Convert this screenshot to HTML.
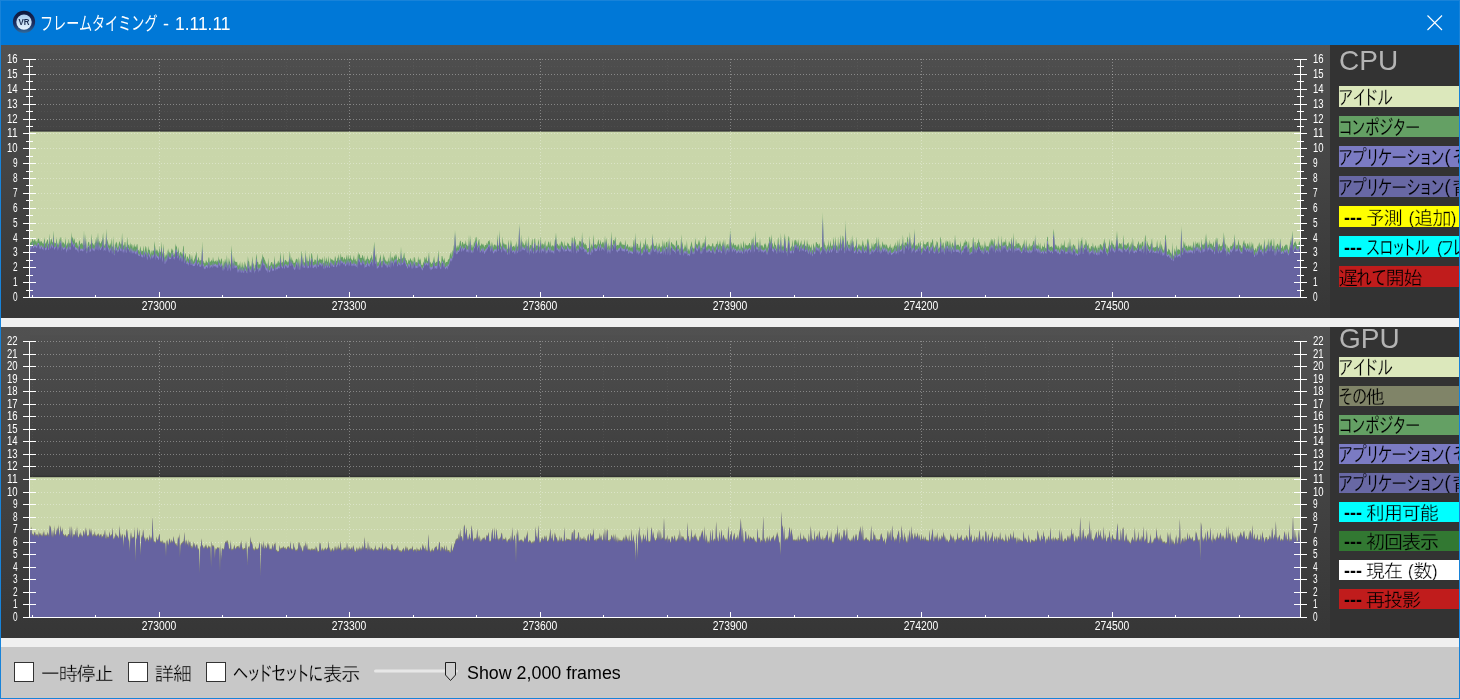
<!DOCTYPE html>
<html lang="ja"><head><meta charset="utf-8"><title>フレームタイミング - 1.11.11</title>
<style>
html,body{margin:0;padding:0}
body{width:1460px;height:699px;position:relative;overflow:hidden;background:#1883d9;font-family:"Liberation Sans",sans-serif}
.abs,.chart,.li,.panel,.leg,.div,.cb{position:absolute}
#titlebar{left:0;top:0;width:1460px;height:45px;background:#0078d7;border:1px solid #1883d9;border-bottom:0;box-sizing:border-box}
.panel{left:1px;width:1329px;background:linear-gradient(#515151,#363636)}
.leg{left:1330px;width:129px;background:#333}
.div{left:1px;width:1458px;height:9px;background:#f0f0f0}
.li{left:1339px;width:120px;overflow:hidden}
.li svg{display:block;opacity:.999}
.gs{opacity:.999}
.big{opacity:.999;position:absolute;left:1339px;font-size:28px;line-height:30px;color:#b4b4b4;font-family:"Liberation Sans",sans-serif;white-space:nowrap}
#bottom{left:1px;top:647px;width:1458px;height:51px;background:#c8c8c8}
.cb{top:662px;width:18px;height:18px;border:1px solid #333;background:#fff}
svg text{white-space:pre}
</style></head><body>
<div id="titlebar" class="abs">
<svg class="abs gs" style="left:-1px;top:-1px" width="260" height="45" viewBox="0 0 260 45">
<defs><linearGradient id="ig" x1="0" y1="0" x2="0" y2="1"><stop offset="0" stop-color="#0e1638"/><stop offset="0.6" stop-color="#1b2f63"/><stop offset="1" stop-color="#2f6a9c"/></linearGradient>
<linearGradient id="ig2" x1="0" y1="0" x2="0" y2="1"><stop offset="0" stop-color="#a9cdee"/><stop offset="1" stop-color="#e6f3fd"/></linearGradient></defs>
<circle cx="24" cy="21.8" r="11.1" fill="url(#ig)"/><circle cx="24" cy="22.1" r="7.7" fill="url(#ig2)"/>
<text x="24" y="25.1" font-size="8.4" font-family='"Liberation Sans",sans-serif' fill="#1b2d50" text-anchor="middle" textLength="11" lengthAdjust="spacingAndGlyphs" font-weight="bold">VR</text>
<text x="40" y="29.8" font-size="18.5" font-family='"Liberation Sans","Noto Sans CJK JP",sans-serif' fill="#fff" textLength="117.5" lengthAdjust="spacingAndGlyphs" >フレームタイミング</text>
<text x="163" y="29.8" font-size="18" font-family='"Liberation Sans","Noto Sans CJK JP",sans-serif' fill="#fff" >-</text>
<text x="175" y="29.8" font-size="18.5" font-family='"Liberation Sans","Noto Sans CJK JP",sans-serif' fill="#fff" textLength="55.5" lengthAdjust="spacingAndGlyphs" >1.11.11</text>
</svg>
<svg class="abs" style="left:1423px;top:11px" width="22" height="22" viewBox="1424 12 22 22"><path d="M1427.5 15.5 L1442 30 M1442 15.5 L1427.5 30" stroke="#fff" stroke-width="1.1" fill="none"/></svg>
</div>

<div class="panel" style="top:45px;height:273px"></div>
<div class="leg" style="top:45px;height:273px"></div>
<svg class="chart" style="left:1px;top:45px" width="1329" height="273" viewBox="1 45 1329 273">
<defs><linearGradient id="pg45" x1="0" y1="0" x2="0" y2="1"><stop offset="0" stop-color="#4f4f4f"/><stop offset="1" stop-color="#2b2b2b"/></linearGradient></defs>
<rect x="30" y="53.0" width="1270" height="244.0" fill="url(#pg45)"/>
<rect x="30" y="131.6" width="1270" height="165.9" fill="#c9d6aa"/>
<rect x="30" y="130.1" width="1270" height="1.5" fill="#000" opacity="0.18"/>
<g stroke-width="1" stroke-dasharray="1 2" shape-rendering="crispEdges"><line x1="38" x2="1293" y1="282.5" y2="282.5" stroke="rgba(255,255,255,0.34)"/><line x1="38" x2="1293" y1="290.5" y2="290.5" stroke="rgba(255,255,255,0.055)"/><line x1="38" x2="1293" y1="267.5" y2="267.5" stroke="rgba(255,255,255,0.34)"/><line x1="38" x2="1293" y1="275.5" y2="275.5" stroke="rgba(255,255,255,0.055)"/><line x1="38" x2="1293" y1="252.5" y2="252.5" stroke="rgba(255,255,255,0.34)"/><line x1="38" x2="1293" y1="260.5" y2="260.5" stroke="rgba(255,255,255,0.055)"/><line x1="38" x2="1293" y1="238.5" y2="238.5" stroke="rgba(255,255,255,0.34)"/><line x1="38" x2="1293" y1="245.5" y2="245.5" stroke="rgba(255,255,255,0.055)"/><line x1="38" x2="1293" y1="223.5" y2="223.5" stroke="rgba(255,255,255,0.34)"/><line x1="38" x2="1293" y1="230.5" y2="230.5" stroke="rgba(255,255,255,0.055)"/><line x1="38" x2="1293" y1="208.5" y2="208.5" stroke="rgba(255,255,255,0.34)"/><line x1="38" x2="1293" y1="215.5" y2="215.5" stroke="rgba(255,255,255,0.055)"/><line x1="38" x2="1293" y1="193.5" y2="193.5" stroke="rgba(255,255,255,0.34)"/><line x1="38" x2="1293" y1="200.5" y2="200.5" stroke="rgba(255,255,255,0.055)"/><line x1="38" x2="1293" y1="178.5" y2="178.5" stroke="rgba(255,255,255,0.34)"/><line x1="38" x2="1293" y1="185.5" y2="185.5" stroke="rgba(255,255,255,0.055)"/><line x1="38" x2="1293" y1="163.5" y2="163.5" stroke="rgba(255,255,255,0.34)"/><line x1="38" x2="1293" y1="171.5" y2="171.5" stroke="rgba(255,255,255,0.055)"/><line x1="38" x2="1293" y1="148.5" y2="148.5" stroke="rgba(255,255,255,0.34)"/><line x1="38" x2="1293" y1="156.5" y2="156.5" stroke="rgba(255,255,255,0.055)"/><line x1="38" x2="1293" y1="133.5" y2="133.5" stroke="rgba(255,255,255,0.34)"/><line x1="38" x2="1293" y1="141.5" y2="141.5" stroke="rgba(255,255,255,0.055)"/><line x1="38" x2="1293" y1="119.5" y2="119.5" stroke="rgba(255,255,255,0.34)"/><line x1="38" x2="1293" y1="126.5" y2="126.5" stroke="rgba(255,255,255,0.055)"/><line x1="38" x2="1293" y1="104.5" y2="104.5" stroke="rgba(255,255,255,0.34)"/><line x1="38" x2="1293" y1="111.5" y2="111.5" stroke="rgba(255,255,255,0.055)"/><line x1="38" x2="1293" y1="89.5" y2="89.5" stroke="rgba(255,255,255,0.34)"/><line x1="38" x2="1293" y1="96.5" y2="96.5" stroke="rgba(255,255,255,0.055)"/><line x1="38" x2="1293" y1="74.5" y2="74.5" stroke="rgba(255,255,255,0.34)"/><line x1="38" x2="1293" y1="81.5" y2="81.5" stroke="rgba(255,255,255,0.055)"/><line x1="38" x2="1293" y1="59.5" y2="59.5" stroke="rgba(255,255,255,0.34)"/><line x1="38" x2="1293" y1="66.5" y2="66.5" stroke="rgba(255,255,255,0.055)"/><line y1="59.0" y2="297.0" x1="32.5" x2="32.5" stroke="rgba(255,255,255,0.055)"/><line y1="59.0" y2="297.0" x1="95.5" x2="95.5" stroke="rgba(255,255,255,0.055)"/><line y1="59.0" y2="297.0" x1="159.5" x2="159.5" stroke="rgba(255,255,255,0.34)"/><line y1="59.0" y2="297.0" x1="222.5" x2="222.5" stroke="rgba(255,255,255,0.055)"/><line y1="59.0" y2="297.0" x1="286.5" x2="286.5" stroke="rgba(255,255,255,0.055)"/><line y1="59.0" y2="297.0" x1="349.5" x2="349.5" stroke="rgba(255,255,255,0.34)"/><line y1="59.0" y2="297.0" x1="413.5" x2="413.5" stroke="rgba(255,255,255,0.055)"/><line y1="59.0" y2="297.0" x1="476.5" x2="476.5" stroke="rgba(255,255,255,0.055)"/><line y1="59.0" y2="297.0" x1="540.5" x2="540.5" stroke="rgba(255,255,255,0.34)"/><line y1="59.0" y2="297.0" x1="603.5" x2="603.5" stroke="rgba(255,255,255,0.055)"/><line y1="59.0" y2="297.0" x1="667.5" x2="667.5" stroke="rgba(255,255,255,0.055)"/><line y1="59.0" y2="297.0" x1="730.5" x2="730.5" stroke="rgba(255,255,255,0.34)"/><line y1="59.0" y2="297.0" x1="794.5" x2="794.5" stroke="rgba(255,255,255,0.055)"/><line y1="59.0" y2="297.0" x1="857.5" x2="857.5" stroke="rgba(255,255,255,0.055)"/><line y1="59.0" y2="297.0" x1="921.5" x2="921.5" stroke="rgba(255,255,255,0.34)"/><line y1="59.0" y2="297.0" x1="985.5" x2="985.5" stroke="rgba(255,255,255,0.055)"/><line y1="59.0" y2="297.0" x1="1048.5" x2="1048.5" stroke="rgba(255,255,255,0.055)"/><line y1="59.0" y2="297.0" x1="1112.5" x2="1112.5" stroke="rgba(255,255,255,0.34)"/><line y1="59.0" y2="297.0" x1="1175.5" x2="1175.5" stroke="rgba(255,255,255,0.055)"/><line y1="59.0" y2="297.0" x1="1239.5" x2="1239.5" stroke="rgba(255,255,255,0.055)"/></g>
<polygon fill="#64a064" points="30,297.5 30.0,241.6 30.6,243.3 31.3,241.7 31.9,241.4 32.5,237.2 33.2,240.6 33.8,241.5 34.4,239.6 35.1,239.8 35.7,241.8 36.4,240.8 37.0,243.4 37.6,240.0 38.3,238.6 38.9,238.5 39.5,241.3 40.2,242.6 40.8,240.7 41.4,240.9 42.1,242.5 42.7,243.2 43.3,244.0 44.0,241.1 44.6,237.1 45.2,243.6 45.9,243.5 46.5,241.7 47.2,240.0 47.8,239.3 48.4,243.4 49.1,244.6 49.7,233.2 50.3,243.4 51.0,239.4 51.6,238.6 52.2,242.1 52.9,242.6 53.5,230.4 54.1,241.4 54.8,243.5 55.4,243.3 56.0,242.7 56.7,236.7 57.3,245.0 58.0,242.5 58.6,245.4 59.2,237.3 59.9,242.7 60.5,237.8 61.1,236.7 61.8,245.3 62.4,240.9 63.0,243.6 63.7,242.1 64.3,243.7 64.9,244.7 65.6,236.7 66.2,246.3 66.8,244.4 67.5,242.3 68.1,245.4 68.8,238.0 69.4,244.0 70.0,242.4 70.7,243.8 71.3,232.1 71.9,239.5 72.6,236.4 73.2,238.7 73.8,241.3 74.5,237.4 75.1,243.5 75.7,242.5 76.4,242.3 77.0,242.7 77.6,245.1 78.3,247.4 78.9,241.6 79.6,240.1 80.2,243.9 80.8,244.4 81.5,243.0 82.1,242.8 82.7,244.4 83.4,245.7 84.0,229.9 84.6,245.4 85.3,244.0 85.9,233.9 86.5,247.5 87.2,249.3 87.8,243.7 88.4,241.8 89.1,242.0 89.7,246.8 90.4,243.3 91.0,245.0 91.6,233.4 92.3,243.1 92.9,243.5 93.5,244.4 94.2,245.8 94.8,242.9 95.4,242.6 96.1,236.5 96.7,241.3 97.3,243.1 98.0,232.2 98.6,243.3 99.2,240.4 99.9,242.9 100.5,243.8 101.2,242.3 101.8,241.0 102.4,239.7 103.1,232.2 103.7,244.8 104.3,245.9 105.0,243.7 105.6,244.6 106.2,228.5 106.9,243.8 107.5,238.9 108.1,242.7 108.8,245.2 109.4,245.9 110.1,243.1 110.7,245.5 111.3,237.7 112.0,246.8 112.6,246.6 113.2,235.9 113.9,250.2 114.5,250.3 115.1,242.3 115.8,245.3 116.4,241.5 117.0,242.7 117.7,247.9 118.3,246.6 118.9,243.0 119.6,240.9 120.2,243.3 120.9,244.7 121.5,243.8 122.1,232.6 122.8,247.2 123.4,244.3 124.0,246.2 124.7,242.0 125.3,241.9 125.9,247.5 126.6,246.5 127.2,236.6 127.8,243.4 128.5,245.5 129.1,243.9 129.7,247.9 130.4,241.9 131.0,247.1 131.7,243.7 132.3,245.0 132.9,249.0 133.6,246.5 134.2,243.4 134.8,246.7 135.5,246.2 136.1,247.8 136.7,244.4 137.4,243.9 138.0,250.3 138.6,249.7 139.3,251.9 139.9,248.7 140.5,245.7 141.2,252.0 141.8,250.1 142.5,251.2 143.1,250.5 143.7,245.2 144.4,253.3 145.0,249.4 145.6,245.7 146.3,247.5 146.9,251.7 147.5,253.6 148.2,245.7 148.8,250.0 149.4,249.6 150.1,250.9 150.7,255.0 151.3,249.8 152.0,254.2 152.6,250.6 153.3,250.4 153.9,250.8 154.5,240.9 155.2,246.9 155.8,251.8 156.4,249.0 157.1,251.9 157.7,249.6 158.3,251.8 159.0,253.4 159.6,245.4 160.2,251.4 160.9,252.5 161.5,241.2 162.1,251.6 162.8,254.6 163.4,243.5 164.1,252.4 164.7,258.1 165.3,256.5 166.0,253.9 166.6,256.0 167.2,249.3 167.9,255.7 168.5,248.0 169.1,253.4 169.8,251.6 170.4,253.9 171.0,251.4 171.7,248.1 172.3,251.0 172.9,248.5 173.6,255.2 174.2,254.4 174.9,252.6 175.5,243.3 176.1,247.2 176.8,245.3 177.4,252.3 178.0,252.1 178.7,246.8 179.3,256.6 179.9,252.4 180.6,251.4 181.2,254.4 181.8,251.9 182.5,255.6 183.1,246.7 183.7,245.4 184.4,257.8 185.0,254.9 185.7,252.5 186.3,260.9 186.9,256.6 187.6,256.4 188.2,258.0 188.8,259.5 189.5,253.7 190.1,254.4 190.7,260.0 191.4,258.8 192.0,254.6 192.6,259.4 193.3,261.9 193.9,260.0 194.5,259.1 195.2,256.4 195.8,254.8 196.5,251.3 197.1,260.3 197.7,260.3 198.4,256.5 199.0,258.6 199.6,261.3 200.3,259.8 200.9,260.8 201.5,259.8 202.2,240.9 202.8,262.0 203.4,260.2 204.1,263.8 204.7,262.2 205.3,263.5 206.0,259.4 206.6,261.4 207.3,262.0 207.9,263.2 208.5,257.5 209.2,257.4 209.8,262.5 210.4,261.6 211.1,261.0 211.7,259.6 212.3,262.2 213.0,256.8 213.6,260.2 214.2,261.9 214.9,260.9 215.5,261.3 216.1,259.5 216.8,262.5 217.4,260.1 218.1,262.4 218.7,256.1 219.3,260.7 220.0,259.0 220.6,262.7 221.2,259.0 221.9,258.2 222.5,264.9 223.1,266.2 223.8,260.3 224.4,263.6 225.0,258.5 225.7,261.4 226.3,263.0 226.9,254.7 227.6,265.6 228.2,265.0 228.9,257.4 229.5,260.9 230.1,262.4 230.8,265.3 231.4,245.0 232.0,254.0 232.7,263.5 233.3,263.6 233.9,256.2 234.6,261.3 235.2,261.5 235.8,262.0 236.5,262.3 237.1,261.5 237.7,266.1 238.4,264.2 239.0,267.1 239.7,262.2 240.3,268.5 240.9,261.1 241.6,267.8 242.2,266.4 242.8,261.7 243.5,267.2 244.1,268.0 244.7,261.3 245.4,264.1 246.0,265.9 246.6,266.7 247.3,268.7 247.9,256.1 248.5,261.1 249.2,261.7 249.8,267.6 250.5,265.1 251.1,267.4 251.7,263.6 252.4,255.9 253.0,264.8 253.6,262.6 254.3,269.6 254.9,264.5 255.5,265.6 256.2,253.4 256.8,257.3 257.4,261.9 258.1,262.1 258.7,265.1 259.3,263.7 260.0,265.2 260.6,263.2 261.3,257.9 261.9,261.8 262.5,253.5 263.2,257.7 263.8,256.5 264.4,259.3 265.1,260.5 265.7,262.2 266.3,264.8 267.0,262.6 267.6,267.5 268.2,257.4 268.9,265.1 269.5,266.3 270.2,265.4 270.8,263.0 271.4,262.0 272.1,261.9 272.7,264.5 273.3,264.7 274.0,262.7 274.6,255.8 275.2,263.8 275.9,265.2 276.5,262.9 277.1,263.9 277.8,261.5 278.4,260.2 279.0,263.3 279.7,262.0 280.3,251.8 281.0,259.1 281.6,263.3 282.2,262.5 282.9,261.7 283.5,252.4 284.1,263.3 284.8,260.2 285.4,259.7 286.0,260.2 286.7,261.6 287.3,261.6 287.9,262.7 288.6,261.2 289.2,258.6 289.8,250.7 290.5,258.6 291.1,260.8 291.8,256.7 292.4,260.4 293.0,260.4 293.7,263.3 294.3,262.5 294.9,263.1 295.6,260.4 296.2,258.4 296.8,259.2 297.5,259.6 298.1,264.9 298.7,256.7 299.4,260.5 300.0,267.5 300.6,261.0 301.3,254.8 301.9,250.6 302.6,261.9 303.2,257.1 303.8,262.5 304.5,262.2 305.1,262.9 305.7,249.5 306.4,261.8 307.0,256.1 307.6,261.5 308.3,260.5 308.9,261.9 309.5,253.3 310.2,262.6 310.8,259.4 311.4,252.4 312.1,254.5 312.7,258.9 313.4,262.0 314.0,261.9 314.6,259.0 315.3,260.5 315.9,259.3 316.5,263.6 317.2,253.1 317.8,258.6 318.4,260.9 319.1,260.1 319.7,257.9 320.3,259.7 321.0,259.0 321.6,260.1 322.2,259.8 322.9,257.1 323.5,263.5 324.2,262.6 324.8,255.5 325.4,261.7 326.1,260.5 326.7,256.9 327.3,261.4 328.0,262.0 328.6,255.4 329.2,261.8 329.9,263.5 330.5,257.5 331.1,259.2 331.8,259.4 332.4,259.5 333.0,260.5 333.7,260.6 334.3,261.5 335.0,255.8 335.6,257.4 336.2,260.9 336.9,260.8 337.5,257.3 338.1,258.6 338.8,254.0 339.4,259.4 340.0,260.7 340.7,252.9 341.3,256.9 341.9,257.4 342.6,256.5 343.2,258.3 343.8,260.3 344.5,256.8 345.1,259.1 345.8,259.7 346.4,257.0 347.0,254.2 347.7,260.9 348.3,254.1 348.9,259.3 349.6,259.0 350.2,254.5 350.8,258.0 351.5,259.3 352.1,260.3 352.7,260.4 353.4,257.7 354.0,255.0 354.6,260.5 355.3,258.4 355.9,260.8 356.6,261.8 357.2,253.5 357.8,262.2 358.5,251.8 359.1,255.2 359.7,253.4 360.4,258.1 361.0,258.0 361.6,258.1 362.3,255.6 362.9,254.7 363.5,259.3 364.2,255.5 364.8,260.9 365.4,260.7 366.1,258.5 366.7,260.1 367.4,254.9 368.0,259.4 368.6,258.6 369.3,261.0 369.9,259.6 370.5,257.9 371.2,257.3 371.8,254.3 372.4,258.5 373.1,260.7 373.7,247.8 374.3,241.6 375.0,257.9 375.6,256.1 376.2,253.4 376.9,265.1 377.5,262.1 378.2,261.5 378.8,262.9 379.4,259.1 380.1,257.1 380.7,254.1 381.3,261.7 382.0,261.1 382.6,260.9 383.2,253.5 383.9,258.4 384.5,256.1 385.1,261.1 385.8,259.2 386.4,261.5 387.0,261.4 387.7,261.8 388.3,257.1 389.0,261.9 389.6,260.5 390.2,250.8 390.9,263.5 391.5,256.4 392.1,258.5 392.8,256.3 393.4,259.9 394.0,257.2 394.7,255.8 395.3,254.1 395.9,257.8 396.6,253.7 397.2,259.9 397.8,260.4 398.5,255.9 399.1,259.0 399.8,258.7 400.4,259.4 401.0,246.4 401.7,259.4 402.3,257.4 402.9,258.8 403.6,255.3 404.2,251.7 404.8,257.8 405.5,257.9 406.1,260.7 406.7,259.7 407.4,263.7 408.0,262.5 408.6,259.3 409.3,260.9 409.9,259.8 410.6,257.7 411.2,260.0 411.8,260.7 412.5,262.1 413.1,256.4 413.7,263.8 414.4,257.1 415.0,257.5 415.6,263.1 416.3,261.8 416.9,262.4 417.5,262.8 418.2,256.1 418.8,260.2 419.4,260.3 420.1,258.3 420.7,260.3 421.4,264.9 422.0,264.7 422.6,265.4 423.3,261.2 423.9,263.3 424.5,257.1 425.2,257.8 425.8,260.2 426.4,255.8 427.1,260.9 427.7,261.3 428.3,258.4 429.0,250.9 429.6,263.1 430.3,261.6 430.9,263.2 431.5,263.9 432.2,263.0 432.8,262.0 433.4,260.1 434.1,256.1 434.7,260.7 435.3,263.3 436.0,262.5 436.6,261.5 437.2,262.2 437.9,256.7 438.5,249.8 439.1,261.3 439.8,260.9 440.4,262.7 441.1,263.8 441.7,255.9 442.3,256.1 443.0,259.3 443.6,261.1 444.2,257.5 444.9,260.8 445.5,263.4 446.1,261.9 446.8,262.1 447.4,262.0 448.0,259.7 448.7,259.3 449.3,258.4 449.9,254.9 450.6,253.3 451.2,251.8 451.9,257.1 452.5,249.8 453.1,252.3 453.8,245.0 454.4,247.9 455.0,229.8 455.7,244.3 456.3,246.4 456.9,248.7 457.6,245.7 458.2,245.1 458.8,247.7 459.5,243.7 460.1,240.7 460.7,240.7 461.4,246.6 462.0,242.4 462.7,241.8 463.3,243.6 463.9,245.1 464.6,243.4 465.2,243.9 465.8,240.0 466.5,245.2 467.1,244.8 467.7,246.6 468.4,245.8 469.0,234.8 469.6,246.4 470.3,235.1 470.9,248.9 471.5,245.0 472.2,244.5 472.8,248.0 473.5,246.1 474.1,240.4 474.7,243.8 475.4,239.6 476.0,236.5 476.6,237.7 477.3,246.7 477.9,243.4 478.5,240.6 479.2,238.8 479.8,246.3 480.4,245.8 481.1,244.8 481.7,243.0 482.3,245.2 483.0,243.6 483.6,245.1 484.3,247.5 484.9,245.2 485.5,245.0 486.2,245.3 486.8,242.5 487.4,245.0 488.1,241.2 488.7,241.2 489.3,239.7 490.0,242.7 490.6,246.3 491.2,246.5 491.9,241.5 492.5,244.2 493.1,247.8 493.8,245.0 494.4,244.5 495.1,244.6 495.7,245.5 496.3,246.8 497.0,244.2 497.6,234.1 498.2,245.9 498.9,245.1 499.5,230.0 500.1,244.8 500.8,241.6 501.4,246.8 502.0,245.5 502.7,236.2 503.3,244.4 503.9,242.6 504.6,244.7 505.2,243.9 505.9,244.9 506.5,244.2 507.1,249.6 507.8,248.3 508.4,239.5 509.0,244.3 509.7,249.5 510.3,244.2 510.9,239.6 511.6,243.5 512.2,247.2 512.8,246.5 513.5,245.9 514.1,245.6 514.7,247.8 515.4,243.5 516.0,248.9 516.7,240.7 517.3,246.1 517.9,247.0 518.6,243.3 519.2,223.3 519.8,247.5 520.5,245.0 521.1,234.5 521.7,243.1 522.4,240.9 523.0,245.5 523.6,242.4 524.3,244.9 524.9,245.6 525.5,240.0 526.2,247.3 526.8,238.5 527.5,246.2 528.1,246.1 528.7,235.6 529.4,248.5 530.0,245.5 530.6,244.8 531.3,245.8 531.9,240.6 532.5,238.6 533.2,247.4 533.8,248.4 534.4,238.8 535.1,238.6 535.7,247.6 536.3,245.4 537.0,245.3 537.6,246.2 538.3,238.7 538.9,242.3 539.5,247.4 540.2,245.2 540.8,235.7 541.4,246.3 542.1,242.8 542.7,244.7 543.3,243.7 544.0,246.2 544.6,243.1 545.2,240.2 545.9,248.3 546.5,245.1 547.1,246.9 547.8,244.2 548.4,241.6 549.1,241.8 549.7,246.6 550.3,240.1 551.0,247.3 551.6,245.9 552.2,244.7 552.9,245.9 553.5,245.5 554.1,247.5 554.8,240.5 555.4,239.6 556.0,232.2 556.7,244.6 557.3,243.5 557.9,244.4 558.6,245.4 559.2,246.4 559.9,242.9 560.5,246.3 561.1,240.6 561.8,242.2 562.4,242.3 563.0,244.4 563.7,247.3 564.3,240.5 564.9,246.5 565.6,245.1 566.2,245.4 566.8,246.4 567.5,242.0 568.1,243.8 568.7,243.4 569.4,245.7 570.0,246.0 570.7,246.2 571.3,245.9 571.9,237.2 572.6,238.1 573.2,249.4 573.8,239.5 574.5,235.6 575.1,243.0 575.7,238.4 576.4,246.7 577.0,246.0 577.6,244.1 578.3,246.3 578.9,243.6 579.5,240.5 580.2,241.2 580.8,241.6 581.5,244.6 582.1,231.7 582.7,244.4 583.4,242.1 584.0,243.3 584.6,245.0 585.3,243.1 585.9,244.9 586.5,244.9 587.2,248.9 587.8,248.2 588.4,248.1 589.1,247.8 589.7,235.5 590.4,248.8 591.0,246.5 591.6,243.2 592.3,247.3 592.9,243.7 593.5,234.3 594.2,244.5 594.8,244.8 595.4,244.2 596.1,244.3 596.7,245.7 597.3,244.3 598.0,240.8 598.6,239.1 599.2,244.6 599.9,243.4 600.5,239.4 601.2,243.7 601.8,244.8 602.4,242.6 603.1,241.6 603.7,242.9 604.3,246.5 605.0,235.2 605.6,245.1 606.2,237.7 606.9,242.5 607.5,248.6 608.1,242.4 608.8,246.8 609.4,244.9 610.0,249.0 610.7,243.7 611.3,231.3 612.0,245.0 612.6,245.1 613.2,240.2 613.9,240.0 614.5,241.7 615.1,236.2 615.8,240.3 616.4,246.1 617.0,245.3 617.7,245.1 618.3,244.5 618.9,245.9 619.6,242.3 620.2,242.7 620.8,240.7 621.5,243.3 622.1,245.5 622.8,243.8 623.4,244.8 624.0,245.0 624.7,245.3 625.3,239.4 625.9,245.3 626.6,247.1 627.2,244.6 627.8,244.1 628.5,247.5 629.1,247.5 629.7,245.9 630.4,248.6 631.0,244.9 631.6,247.7 632.3,247.4 632.9,246.2 633.6,240.7 634.2,238.9 634.8,247.5 635.5,232.5 636.1,248.6 636.7,242.8 637.4,244.0 638.0,244.0 638.6,248.1 639.3,248.0 639.9,245.0 640.5,240.0 641.2,248.0 641.8,249.6 642.4,247.2 643.1,247.0 643.7,242.4 644.4,245.4 645.0,243.2 645.6,237.2 646.3,246.6 646.9,243.8 647.5,244.3 648.2,249.2 648.8,244.9 649.4,249.0 650.1,249.4 650.7,245.9 651.3,244.3 652.0,246.6 652.6,233.3 653.2,242.4 653.9,245.1 654.5,246.3 655.2,246.1 655.8,245.5 656.4,241.7 657.1,250.2 657.7,245.6 658.3,247.7 659.0,242.6 659.6,244.7 660.2,248.3 660.9,246.5 661.5,246.0 662.1,248.4 662.8,239.3 663.4,247.8 664.0,240.6 664.7,245.0 665.3,247.7 666.0,242.6 666.6,242.3 667.2,240.9 667.9,248.3 668.5,243.8 669.1,237.0 669.8,250.2 670.4,247.7 671.0,243.1 671.7,241.8 672.3,243.7 672.9,244.6 673.6,244.5 674.2,245.3 674.8,245.9 675.5,248.3 676.1,240.5 676.8,240.6 677.4,245.5 678.0,245.7 678.7,244.4 679.3,247.2 679.9,249.8 680.6,247.4 681.2,234.0 681.8,245.6 682.5,241.5 683.1,248.0 683.7,250.1 684.4,247.3 685.0,244.0 685.6,246.4 686.3,248.5 686.9,239.9 687.6,251.3 688.2,250.4 688.8,248.3 689.5,251.5 690.1,247.1 690.7,245.5 691.4,241.0 692.0,244.1 692.6,247.3 693.3,248.9 693.9,247.3 694.5,249.2 695.2,237.2 695.8,242.4 696.4,244.4 697.1,244.1 697.7,245.7 698.4,239.5 699.0,244.6 699.6,239.4 700.3,245.2 700.9,248.5 701.5,247.5 702.2,242.6 702.8,246.6 703.4,241.8 704.1,244.2 704.7,241.5 705.3,235.0 706.0,245.5 706.6,248.0 707.2,244.7 707.9,247.0 708.5,243.9 709.2,244.6 709.8,245.9 710.4,246.3 711.1,246.6 711.7,246.3 712.3,243.8 713.0,242.7 713.6,247.0 714.2,245.8 714.9,248.1 715.5,246.2 716.1,243.8 716.8,244.2 717.4,239.9 718.0,246.3 718.7,244.2 719.3,243.9 720.0,239.9 720.6,244.1 721.2,245.8 721.9,246.4 722.5,241.5 723.1,245.4 723.8,239.3 724.4,247.8 725.0,238.8 725.7,248.9 726.3,245.9 726.9,244.2 727.6,244.1 728.2,246.9 728.8,243.3 729.5,247.0 730.1,227.8 730.8,244.1 731.4,241.5 732.0,246.3 732.7,244.3 733.3,242.4 733.9,244.2 734.6,245.7 735.2,244.6 735.8,244.9 736.5,247.7 737.1,244.2 737.7,247.2 738.4,244.6 739.0,243.9 739.6,248.7 740.3,248.8 740.9,242.3 741.6,245.3 742.2,247.9 742.8,247.5 743.5,240.6 744.1,243.5 744.7,249.2 745.4,242.5 746.0,245.8 746.6,245.0 747.3,245.6 747.9,245.6 748.5,244.9 749.2,243.0 749.8,242.9 750.5,245.8 751.1,245.1 751.7,240.0 752.4,238.0 753.0,248.0 753.6,235.8 754.3,245.6 754.9,245.1 755.5,230.4 756.2,244.2 756.8,242.0 757.4,242.8 758.1,241.7 758.7,247.2 759.3,246.8 760.0,237.8 760.6,246.0 761.3,244.8 761.9,245.9 762.5,245.1 763.2,248.0 763.8,246.9 764.4,243.3 765.1,245.0 765.7,242.6 766.3,249.1 767.0,244.2 767.6,248.4 768.2,244.2 768.9,242.5 769.5,236.4 770.1,237.6 770.8,243.0 771.4,234.1 772.1,243.5 772.7,243.3 773.3,247.4 774.0,244.9 774.6,240.4 775.2,245.6 775.9,244.6 776.5,247.4 777.1,249.7 777.8,239.5 778.4,236.9 779.0,247.4 779.7,243.9 780.3,246.9 780.9,232.7 781.6,247.7 782.2,244.7 782.9,247.2 783.5,245.9 784.1,241.3 784.8,233.2 785.4,239.2 786.0,247.6 786.7,247.9 787.3,252.8 787.9,240.6 788.6,235.8 789.2,237.6 789.8,246.5 790.5,248.9 791.1,246.5 791.7,246.5 792.4,239.3 793.0,245.9 793.7,247.3 794.3,241.5 794.9,239.7 795.6,239.8 796.2,243.6 796.8,239.7 797.5,245.6 798.1,238.9 798.7,242.7 799.4,246.3 800.0,244.8 800.6,242.7 801.3,239.9 801.9,246.7 802.5,244.4 803.2,244.5 803.8,244.3 804.5,239.1 805.1,245.3 805.7,245.9 806.4,246.7 807.0,239.3 807.6,243.6 808.3,244.6 808.9,247.4 809.5,244.0 810.2,247.0 810.8,248.3 811.4,243.6 812.1,250.5 812.7,250.1 813.3,242.7 814.0,245.6 814.6,247.2 815.3,249.5 815.9,241.9 816.5,241.9 817.2,243.9 817.8,243.7 818.4,246.4 819.1,243.0 819.7,244.7 820.3,248.7 821.0,247.1 821.6,247.2 822.2,246.1 822.9,211.8 823.5,243.8 824.1,240.9 824.8,244.8 825.4,245.2 826.1,249.7 826.7,247.1 827.3,244.5 828.0,247.5 828.6,239.4 829.2,247.3 829.9,245.3 830.5,240.1 831.1,245.2 831.8,246.4 832.4,245.4 833.0,243.7 833.7,236.8 834.3,244.0 834.9,246.2 835.6,236.1 836.2,245.6 836.9,245.4 837.5,247.7 838.1,236.2 838.8,247.4 839.4,241.9 840.0,246.2 840.7,234.2 841.3,242.9 841.9,245.1 842.6,235.6 843.2,236.6 843.8,240.1 844.5,246.5 845.1,248.8 845.7,220.1 846.4,246.3 847.0,242.0 847.7,240.1 848.3,245.0 848.9,244.5 849.6,245.3 850.2,239.2 850.8,246.6 851.5,242.2 852.1,235.0 852.7,243.7 853.4,240.6 854.0,247.0 854.6,247.7 855.3,246.0 855.9,245.3 856.5,236.4 857.2,247.3 857.8,248.3 858.5,243.3 859.1,247.1 859.7,243.5 860.4,247.1 861.0,244.2 861.6,247.3 862.3,243.0 862.9,239.7 863.5,244.6 864.2,246.1 864.8,248.3 865.4,243.5 866.1,247.3 866.7,245.4 867.3,240.3 868.0,238.2 868.6,241.8 869.3,245.8 869.9,250.0 870.5,248.2 871.2,247.9 871.8,242.3 872.4,247.7 873.1,242.0 873.7,247.7 874.3,244.3 875.0,243.9 875.6,243.0 876.2,243.4 876.9,236.4 877.5,246.6 878.1,246.5 878.8,236.4 879.4,247.1 880.1,243.8 880.7,248.6 881.3,247.4 882.0,245.1 882.6,241.1 883.2,243.9 883.9,245.6 884.5,245.1 885.1,243.5 885.8,247.0 886.4,244.3 887.0,245.1 887.7,247.7 888.3,248.8 888.9,247.4 889.6,246.4 890.2,243.6 890.9,248.3 891.5,247.9 892.1,246.3 892.8,250.2 893.4,248.0 894.0,245.9 894.7,245.3 895.3,242.0 895.9,247.4 896.6,245.1 897.2,246.0 897.8,239.5 898.5,248.3 899.1,237.8 899.7,246.7 900.4,245.8 901.0,245.7 901.7,243.4 902.3,243.7 902.9,234.6 903.6,245.1 904.2,245.8 904.8,242.6 905.5,242.8 906.1,242.1 906.7,244.2 907.4,236.2 908.0,238.0 908.6,245.0 909.3,242.0 909.9,231.6 910.6,244.5 911.2,242.0 911.8,246.5 912.5,244.8 913.1,243.5 913.7,241.9 914.4,228.7 915.0,245.6 915.6,245.7 916.3,244.1 916.9,246.3 917.5,246.2 918.2,242.2 918.8,243.6 919.4,247.1 920.1,240.8 920.7,243.1 921.4,249.2 922.0,247.4 922.6,248.7 923.3,239.7 923.9,245.0 924.5,244.1 925.2,244.0 925.8,244.9 926.4,243.2 927.1,241.8 927.7,242.3 928.3,241.2 929.0,246.8 929.6,247.3 930.2,245.2 930.9,241.6 931.5,243.5 932.2,240.8 932.8,238.3 933.4,244.8 934.1,247.6 934.7,247.8 935.3,244.1 936.0,247.2 936.6,241.0 937.2,241.7 937.9,242.9 938.5,249.1 939.1,248.1 939.8,246.9 940.4,236.4 941.0,238.6 941.7,245.9 942.3,245.6 943.0,242.1 943.6,243.3 944.2,249.2 944.9,245.8 945.5,240.3 946.1,245.7 946.8,240.0 947.4,242.3 948.0,240.6 948.7,245.9 949.3,245.3 949.9,239.9 950.6,243.9 951.2,248.2 951.8,244.2 952.5,242.1 953.1,244.4 953.8,246.2 954.4,246.3 955.0,234.3 955.7,244.5 956.3,246.1 956.9,244.3 957.6,245.1 958.2,244.6 958.8,244.9 959.5,247.3 960.1,245.2 960.7,240.8 961.4,250.0 962.0,246.4 962.6,245.9 963.3,245.5 963.9,242.5 964.6,242.8 965.2,239.0 965.8,243.1 966.5,240.9 967.1,242.1 967.7,247.8 968.4,243.8 969.0,240.7 969.6,249.3 970.3,247.8 970.9,247.4 971.5,246.4 972.2,247.9 972.8,239.7 973.4,236.6 974.1,248.9 974.7,242.0 975.4,242.0 976.0,248.0 976.6,245.0 977.3,242.6 977.9,243.3 978.5,238.2 979.2,242.3 979.8,242.5 980.4,246.4 981.1,244.3 981.7,248.2 982.3,246.7 983.0,244.0 983.6,249.1 984.2,247.1 984.9,240.6 985.5,245.1 986.2,247.5 986.8,245.6 987.4,246.6 988.1,246.3 988.7,247.1 989.3,241.4 990.0,246.3 990.6,241.3 991.2,238.5 991.9,242.1 992.5,238.4 993.1,244.8 993.8,241.3 994.4,238.0 995.0,245.0 995.7,246.4 996.3,243.2 997.0,246.8 997.6,246.0 998.2,234.9 998.9,247.3 999.5,243.1 1000.1,245.8 1000.8,245.9 1001.4,235.2 1002.0,246.1 1002.7,242.2 1003.3,241.3 1003.9,243.6 1004.6,241.2 1005.2,242.9 1005.8,238.2 1006.5,244.8 1007.1,245.7 1007.8,246.7 1008.4,245.3 1009.0,240.8 1009.7,242.8 1010.3,244.4 1010.9,243.6 1011.6,237.0 1012.2,242.8 1012.8,246.1 1013.5,232.4 1014.1,246.6 1014.7,246.3 1015.4,245.5 1016.0,238.6 1016.6,243.9 1017.3,244.5 1017.9,242.4 1018.6,243.5 1019.2,243.3 1019.8,245.7 1020.5,245.3 1021.1,247.3 1021.7,248.2 1022.4,245.7 1023.0,244.4 1023.6,243.4 1024.3,238.9 1024.9,247.4 1025.5,247.7 1026.2,239.0 1026.8,245.7 1027.4,246.5 1028.1,248.9 1028.7,245.7 1029.4,242.8 1030.0,248.5 1030.6,245.4 1031.3,246.6 1031.9,245.3 1032.5,245.0 1033.2,240.5 1033.8,241.5 1034.4,247.6 1035.1,234.5 1035.7,245.9 1036.3,244.0 1037.0,246.4 1037.6,244.8 1038.2,246.5 1038.9,242.0 1039.5,248.4 1040.2,242.2 1040.8,247.8 1041.4,249.6 1042.1,247.1 1042.7,245.2 1043.3,246.9 1044.0,247.3 1044.6,242.1 1045.2,248.6 1045.9,247.7 1046.5,248.9 1047.1,236.6 1047.8,237.2 1048.4,245.5 1049.0,244.1 1049.7,247.7 1050.3,246.8 1051.0,246.9 1051.6,245.8 1052.2,248.0 1052.9,246.8 1053.5,228.8 1054.1,232.7 1054.8,246.7 1055.4,244.4 1056.0,244.4 1056.7,246.2 1057.3,248.4 1057.9,245.5 1058.6,245.8 1059.2,249.7 1059.8,247.1 1060.5,248.2 1061.1,242.6 1061.8,246.8 1062.4,245.4 1063.0,244.5 1063.7,245.9 1064.3,239.5 1064.9,246.5 1065.6,247.3 1066.2,247.4 1066.8,247.4 1067.5,247.7 1068.1,241.4 1068.7,247.1 1069.4,246.3 1070.0,237.1 1070.7,247.3 1071.3,245.0 1071.9,249.4 1072.6,246.1 1073.2,244.0 1073.8,244.8 1074.5,246.6 1075.1,244.5 1075.7,249.7 1076.4,248.2 1077.0,251.0 1077.6,249.4 1078.3,247.8 1078.9,237.7 1079.5,249.4 1080.2,247.4 1080.8,241.1 1081.5,240.4 1082.1,236.4 1082.7,248.4 1083.4,248.1 1084.0,243.7 1084.6,245.4 1085.3,244.1 1085.9,238.8 1086.5,242.6 1087.2,245.5 1087.8,245.8 1088.4,242.9 1089.1,249.3 1089.7,247.3 1090.3,249.6 1091.0,246.3 1091.6,246.1 1092.3,247.6 1092.9,242.3 1093.5,246.9 1094.2,248.8 1094.8,246.6 1095.4,244.9 1096.1,247.2 1096.7,247.9 1097.3,250.7 1098.0,244.7 1098.6,247.7 1099.2,248.5 1099.9,244.3 1100.5,244.2 1101.1,244.4 1101.8,246.1 1102.4,247.7 1103.1,244.2 1103.7,242.6 1104.3,237.9 1105.0,244.6 1105.6,241.7 1106.2,249.0 1106.9,247.6 1107.5,250.1 1108.1,247.4 1108.8,245.3 1109.4,238.0 1110.0,244.7 1110.7,245.7 1111.3,242.7 1111.9,240.0 1112.6,243.4 1113.2,245.2 1113.9,244.1 1114.5,247.3 1115.1,247.2 1115.8,243.8 1116.4,238.9 1117.0,230.5 1117.7,242.0 1118.3,247.3 1118.9,243.7 1119.6,242.8 1120.2,244.6 1120.8,243.6 1121.5,243.3 1122.1,247.7 1122.7,246.3 1123.4,234.6 1124.0,243.8 1124.7,245.1 1125.3,245.4 1125.9,244.1 1126.6,246.0 1127.2,243.8 1127.8,243.2 1128.5,241.9 1129.1,247.4 1129.7,246.3 1130.4,243.5 1131.0,247.9 1131.6,241.1 1132.3,246.1 1132.9,237.2 1133.5,245.2 1134.2,245.7 1134.8,246.3 1135.5,246.4 1136.1,248.6 1136.7,247.8 1137.4,244.3 1138.0,243.6 1138.6,240.8 1139.3,244.3 1139.9,245.7 1140.5,242.7 1141.2,245.9 1141.8,242.7 1142.4,242.0 1143.1,240.9 1143.7,248.5 1144.3,245.4 1145.0,237.1 1145.6,234.5 1146.3,249.8 1146.9,239.9 1147.5,242.8 1148.2,245.0 1148.8,245.6 1149.4,246.9 1150.1,246.8 1150.7,243.8 1151.3,243.8 1152.0,237.2 1152.6,248.0 1153.2,247.7 1153.9,246.9 1154.5,248.1 1155.1,246.8 1155.8,247.2 1156.4,246.4 1157.1,239.7 1157.7,246.1 1158.3,247.8 1159.0,248.3 1159.6,245.3 1160.2,240.1 1160.9,248.9 1161.5,243.8 1162.1,246.1 1162.8,249.4 1163.4,249.6 1164.0,251.5 1164.7,245.9 1165.3,234.4 1165.9,236.1 1166.6,247.6 1167.2,251.8 1167.9,251.5 1168.5,248.2 1169.1,249.4 1169.8,250.3 1170.4,252.4 1171.0,252.9 1171.7,254.9 1172.3,242.1 1172.9,254.5 1173.6,256.4 1174.2,251.2 1174.8,248.0 1175.5,251.6 1176.1,251.7 1176.7,244.6 1177.4,251.1 1178.0,248.9 1178.7,249.4 1179.3,250.2 1179.9,249.2 1180.6,253.0 1181.2,225.5 1181.8,244.7 1182.5,248.3 1183.1,247.8 1183.7,240.3 1184.4,245.5 1185.0,241.4 1185.6,247.0 1186.3,245.4 1186.9,246.0 1187.5,248.7 1188.2,244.2 1188.8,246.7 1189.5,246.8 1190.1,245.0 1190.7,246.6 1191.4,248.3 1192.0,244.7 1192.6,248.5 1193.3,243.5 1193.9,241.0 1194.5,248.3 1195.2,246.7 1195.8,240.7 1196.4,244.3 1197.1,243.4 1197.7,242.1 1198.3,245.9 1199.0,241.2 1199.6,244.6 1200.3,247.5 1200.9,247.4 1201.5,238.4 1202.2,245.5 1202.8,243.9 1203.4,245.6 1204.1,242.8 1204.7,245.1 1205.3,234.0 1206.0,246.9 1206.6,232.7 1207.2,247.6 1207.9,241.6 1208.5,244.7 1209.1,244.9 1209.8,239.7 1210.4,244.3 1211.1,243.2 1211.7,244.1 1212.3,246.2 1213.0,244.0 1213.6,240.9 1214.2,247.1 1214.9,247.1 1215.5,238.2 1216.1,243.3 1216.8,237.5 1217.4,238.4 1218.0,247.4 1218.7,244.5 1219.3,243.5 1219.9,245.8 1220.6,246.5 1221.2,245.5 1221.9,246.6 1222.5,241.3 1223.1,246.2 1223.8,232.0 1224.4,238.4 1225.0,245.7 1225.7,243.3 1226.3,245.5 1226.9,252.9 1227.6,245.0 1228.2,248.3 1228.8,247.6 1229.5,251.2 1230.1,245.0 1230.8,246.9 1231.4,245.8 1232.0,246.1 1232.7,243.4 1233.3,241.5 1233.9,245.5 1234.6,233.8 1235.2,241.9 1235.8,247.7 1236.5,245.1 1237.1,244.5 1237.7,245.7 1238.4,239.0 1239.0,242.9 1239.6,245.4 1240.3,244.9 1240.9,246.1 1241.6,247.9 1242.2,248.2 1242.8,244.0 1243.5,241.8 1244.1,239.8 1244.7,244.1 1245.4,243.1 1246.0,245.3 1246.6,247.2 1247.3,243.1 1247.9,244.1 1248.5,246.4 1249.2,241.2 1249.8,247.5 1250.4,247.5 1251.1,241.3 1251.7,246.8 1252.4,244.5 1253.0,242.4 1253.6,248.6 1254.3,250.0 1254.9,250.6 1255.5,247.9 1256.2,248.5 1256.8,251.4 1257.4,245.4 1258.1,247.2 1258.7,244.4 1259.3,241.9 1260.0,246.7 1260.6,245.5 1261.2,243.9 1261.9,246.0 1262.5,249.2 1263.2,249.3 1263.8,244.7 1264.4,238.8 1265.1,246.8 1265.7,249.2 1266.3,246.7 1267.0,244.2 1267.6,245.7 1268.2,237.8 1268.9,247.3 1269.5,245.9 1270.1,239.6 1270.8,243.7 1271.4,238.1 1272.0,244.9 1272.7,246.3 1273.3,246.0 1274.0,237.3 1274.6,249.0 1275.2,249.1 1275.9,244.7 1276.5,246.7 1277.1,243.6 1277.8,243.9 1278.4,245.0 1279.0,247.0 1279.7,244.1 1280.3,237.6 1280.9,247.8 1281.6,248.2 1282.2,246.6 1282.8,245.3 1283.5,249.7 1284.1,246.6 1284.8,246.0 1285.4,244.2 1286.0,245.7 1286.7,244.3 1287.3,244.9 1287.9,248.5 1288.6,250.5 1289.2,247.9 1289.8,245.1 1290.5,238.7 1291.1,244.3 1291.7,238.7 1292.4,230.4 1293.0,245.1 1293.6,244.7 1294.3,242.0 1294.9,242.9 1295.6,240.5 1296.2,245.8 1296.8,243.0 1297.5,245.9 1298.1,247.1 1298.7,243.1 1299.4,241.0 1300.0,242.8 1300,297.5" />
<polygon fill="#8985c9" points="30,297.5 30.0,244.9 30.6,247.7 31.3,246.3 31.9,245.2 32.5,241.7 33.2,245.9 33.8,246.3 34.4,244.9 35.1,244.0 35.7,245.2 36.4,245.6 37.0,246.4 37.6,243.3 38.3,243.0 38.9,242.9 39.5,245.6 40.2,247.2 40.8,245.3 41.4,244.9 42.1,246.6 42.7,246.8 43.3,249.0 44.0,245.2 44.6,240.2 45.2,248.0 45.9,247.9 46.5,247.6 47.2,245.0 47.8,242.5 48.4,248.2 49.1,248.2 49.7,237.2 50.3,247.7 51.0,245.1 51.6,242.8 52.2,246.3 52.9,244.8 53.5,235.1 54.1,247.0 54.8,247.3 55.4,246.9 56.0,244.6 56.7,241.1 57.3,248.7 58.0,246.2 58.6,248.7 59.2,241.6 59.9,246.5 60.5,240.8 61.1,240.4 61.8,249.5 62.4,245.3 63.0,247.9 63.7,247.8 64.3,246.7 64.9,248.0 65.6,242.4 66.2,249.8 66.8,248.6 67.5,246.2 68.1,250.2 68.8,242.4 69.4,247.8 70.0,246.7 70.7,247.6 71.3,236.2 71.9,244.3 72.6,241.1 73.2,244.2 73.8,244.9 74.5,242.2 75.1,247.3 75.7,246.9 76.4,247.9 77.0,247.5 77.6,249.1 78.3,250.6 78.9,245.7 79.6,243.7 80.2,248.4 80.8,249.6 81.5,247.9 82.1,249.3 82.7,248.4 83.4,249.2 84.0,234.5 84.6,248.7 85.3,246.4 85.9,237.9 86.5,250.9 87.2,251.8 87.8,246.9 88.4,245.7 89.1,245.3 89.7,251.0 90.4,248.1 91.0,249.6 91.6,238.2 92.3,247.7 92.9,248.7 93.5,248.1 94.2,250.2 94.8,247.2 95.4,246.6 96.1,240.2 96.7,246.7 97.3,248.1 98.0,236.6 98.6,249.0 99.2,243.9 99.9,248.3 100.5,248.2 101.2,246.4 101.8,246.8 102.4,244.9 103.1,236.8 103.7,249.7 104.3,247.7 105.0,247.4 105.6,248.1 106.2,233.0 106.9,248.4 107.5,242.2 108.1,247.2 108.8,248.1 109.4,250.9 110.1,247.5 110.7,249.8 111.3,243.4 112.0,251.9 112.6,250.9 113.2,242.1 113.9,253.4 114.5,254.3 115.1,244.3 115.8,249.6 116.4,246.7 117.0,248.2 117.7,250.9 118.3,249.7 118.9,247.3 119.6,244.8 120.2,248.0 120.9,248.8 121.5,249.1 122.1,237.3 122.8,250.7 123.4,248.5 124.0,250.6 124.7,246.2 125.3,244.8 125.9,250.2 126.6,250.6 127.2,243.0 127.8,247.5 128.5,248.0 129.1,248.9 129.7,252.1 130.4,246.2 131.0,252.5 131.7,248.1 132.3,248.9 132.9,251.7 133.6,251.3 134.2,248.8 134.8,251.9 135.5,251.2 136.1,251.9 136.7,249.4 137.4,247.9 138.0,252.7 138.6,254.1 139.3,255.6 139.9,253.5 140.5,249.6 141.2,255.1 141.8,254.0 142.5,255.7 143.1,254.1 143.7,249.8 144.4,256.0 145.0,253.7 145.6,250.9 146.3,252.2 146.9,256.7 147.5,257.0 148.2,250.9 148.8,253.6 149.4,253.9 150.1,255.5 150.7,259.2 151.3,253.3 152.0,257.2 152.6,255.0 153.3,254.0 153.9,255.7 154.5,246.4 155.2,251.5 155.8,257.4 156.4,253.0 157.1,256.4 157.7,255.4 158.3,256.5 159.0,257.8 159.6,250.0 160.2,255.3 160.9,257.0 161.5,246.3 162.1,255.8 162.8,259.3 163.4,247.3 164.1,255.9 164.7,262.1 165.3,261.2 166.0,257.3 166.6,260.7 167.2,252.9 167.9,259.5 168.5,252.1 169.1,257.9 169.8,256.3 170.4,258.0 171.0,257.4 171.7,252.3 172.3,255.2 172.9,251.3 173.6,257.9 174.2,256.7 174.9,256.9 175.5,249.1 176.1,250.9 176.8,248.3 177.4,256.3 178.0,256.0 178.7,251.1 179.3,259.8 179.9,257.2 180.6,254.1 181.2,260.2 181.8,255.0 182.5,259.9 183.1,252.3 183.7,250.3 184.4,262.6 185.0,259.3 185.7,256.7 186.3,263.5 186.9,262.1 187.6,260.2 188.2,262.9 188.8,262.9 189.5,257.7 190.1,257.2 190.7,263.9 191.4,263.9 192.0,259.6 192.6,264.1 193.3,264.5 193.9,263.6 194.5,263.0 195.2,262.1 195.8,260.1 196.5,255.8 197.1,264.6 197.7,263.5 198.4,262.1 199.0,262.2 199.6,265.2 200.3,264.0 200.9,265.7 201.5,263.1 202.2,246.4 202.8,264.8 203.4,263.4 204.1,266.8 204.7,266.6 205.3,266.5 206.0,265.0 206.6,265.1 207.3,265.0 207.9,266.6 208.5,261.8 209.2,262.0 209.8,267.0 210.4,265.4 211.1,264.4 211.7,265.0 212.3,266.3 213.0,261.4 213.6,264.8 214.2,264.9 214.9,263.4 215.5,263.8 216.1,264.2 216.8,265.6 217.4,264.3 218.1,265.9 218.7,259.3 219.3,263.6 220.0,263.0 220.6,266.2 221.2,264.1 221.9,262.8 222.5,269.0 223.1,270.0 223.8,264.9 224.4,268.3 225.0,261.4 225.7,265.1 226.3,266.3 226.9,260.0 227.6,268.7 228.2,268.0 228.9,261.5 229.5,264.9 230.1,265.6 230.8,269.6 231.4,250.8 232.0,258.2 232.7,266.3 233.3,267.5 233.9,260.1 234.6,266.1 235.2,264.9 235.8,265.9 236.5,265.5 237.1,266.0 237.7,270.1 238.4,268.9 239.0,270.7 239.7,266.4 240.3,271.8 240.9,266.0 241.6,270.7 242.2,270.7 242.8,267.1 243.5,271.4 244.1,270.7 244.7,264.4 245.4,268.8 246.0,269.5 246.6,271.2 247.3,272.2 247.9,259.5 248.5,266.7 249.2,266.1 249.8,270.0 250.5,269.1 251.1,271.5 251.7,267.0 252.4,260.1 253.0,267.9 253.6,265.2 254.3,271.7 254.9,269.3 255.5,269.9 256.2,257.6 256.8,260.7 257.4,267.6 258.1,267.6 258.7,270.6 259.3,267.3 260.0,269.1 260.6,267.2 261.3,262.3 261.9,266.7 262.5,257.2 263.2,264.3 263.8,262.3 264.4,264.2 265.1,264.8 265.7,267.0 266.3,268.6 267.0,267.3 267.6,270.8 268.2,261.7 268.9,269.7 269.5,270.5 270.2,269.2 270.8,266.3 271.4,265.1 272.1,266.4 272.7,268.8 273.3,269.0 274.0,268.3 274.6,260.0 275.2,266.5 275.9,268.8 276.5,267.6 277.1,267.3 277.8,266.3 278.4,264.7 279.0,266.9 279.7,266.6 280.3,257.1 281.0,263.1 281.6,265.5 282.2,266.6 282.9,266.8 283.5,257.6 284.1,267.2 284.8,264.9 285.4,264.3 286.0,263.7 286.7,264.9 287.3,265.2 287.9,266.4 288.6,264.6 289.2,263.2 289.8,255.5 290.5,263.2 291.1,263.9 291.8,261.0 292.4,264.6 293.0,263.9 293.7,266.7 294.3,267.0 294.9,267.9 295.6,265.2 296.2,262.5 296.8,261.4 297.5,263.7 298.1,268.3 298.7,260.8 299.4,266.3 300.0,269.6 300.6,264.1 301.3,260.2 301.9,254.3 302.6,266.0 303.2,262.5 303.8,266.0 304.5,265.3 305.1,266.9 305.7,253.3 306.4,266.2 307.0,260.4 307.6,266.9 308.3,265.6 308.9,266.2 309.5,257.0 310.2,266.1 310.8,264.5 311.4,257.4 312.1,258.9 312.7,265.2 313.4,265.5 314.0,265.3 314.6,264.4 315.3,264.3 315.9,264.3 316.5,266.9 317.2,257.4 317.8,264.7 318.4,265.5 319.1,264.1 319.7,261.8 320.3,263.3 321.0,262.4 321.6,264.7 322.2,264.2 322.9,261.5 323.5,266.9 324.2,267.8 324.8,259.6 325.4,266.6 326.1,265.4 326.7,262.1 327.3,265.6 328.0,266.0 328.6,260.8 329.2,266.9 329.9,265.8 330.5,260.6 331.1,261.4 331.8,263.9 332.4,263.0 333.0,265.4 333.7,264.4 334.3,266.4 335.0,259.3 335.6,261.0 336.2,265.2 336.9,265.3 337.5,262.0 338.1,263.1 338.8,257.7 339.4,263.6 340.0,264.1 340.7,257.7 341.3,260.9 341.9,261.3 342.6,261.4 343.2,262.2 343.8,263.3 344.5,260.6 345.1,264.4 345.8,263.8 346.4,262.9 347.0,258.7 347.7,263.9 348.3,258.9 348.9,264.2 349.6,262.2 350.2,259.9 350.8,261.2 351.5,263.6 352.1,264.6 352.7,263.4 353.4,263.6 354.0,260.1 354.6,264.5 355.3,263.4 355.9,264.1 356.6,265.9 357.2,259.6 357.8,267.0 358.5,256.7 359.1,260.2 359.7,258.8 360.4,262.9 361.0,261.9 361.6,263.8 362.3,260.7 362.9,259.0 363.5,262.7 364.2,260.4 364.8,265.9 365.4,265.4 366.1,264.1 366.7,263.9 367.4,259.2 368.0,263.5 368.6,262.9 369.3,265.1 369.9,263.3 370.5,262.3 371.2,260.8 371.8,258.2 372.4,262.6 373.1,264.4 373.7,252.5 374.3,244.9 375.0,262.4 375.6,261.0 376.2,257.8 376.9,267.7 377.5,265.8 378.2,265.5 378.8,266.0 379.4,263.0 380.1,261.7 380.7,258.8 381.3,265.1 382.0,266.5 382.6,264.7 383.2,257.9 383.9,262.9 384.5,260.7 385.1,264.8 385.8,263.0 386.4,263.3 387.0,265.7 387.7,265.1 388.3,261.8 389.0,265.9 389.6,264.5 390.2,257.5 390.9,266.9 391.5,260.2 392.1,261.8 392.8,260.0 393.4,264.5 394.0,261.3 394.7,259.8 395.3,259.1 395.9,260.8 396.6,257.3 397.2,264.8 397.8,264.5 398.5,260.7 399.1,262.4 399.8,263.2 400.4,264.5 401.0,250.9 401.7,263.9 402.3,262.2 402.9,263.5 403.6,259.8 404.2,256.5 404.8,260.8 405.5,261.1 406.1,264.2 406.7,263.9 407.4,267.4 408.0,265.3 408.6,262.8 409.3,265.1 409.9,264.1 410.6,261.0 411.2,263.4 411.8,266.8 412.5,266.3 413.1,260.4 413.7,266.7 414.4,261.1 415.0,262.0 415.6,266.3 416.3,265.6 416.9,266.1 417.5,266.4 418.2,260.1 418.8,264.4 419.4,264.0 420.1,263.4 420.7,265.3 421.4,267.3 422.0,268.0 422.6,268.7 423.3,265.2 423.9,266.6 424.5,261.3 425.2,263.3 425.8,263.9 426.4,261.2 427.1,263.8 427.7,263.1 428.3,263.2 429.0,255.0 429.6,266.9 430.3,266.3 430.9,267.7 431.5,267.0 432.2,267.1 432.8,265.8 433.4,262.7 434.1,260.4 434.7,265.4 435.3,266.0 436.0,266.0 436.6,265.7 437.2,266.1 437.9,261.0 438.5,254.6 439.1,266.1 439.8,262.6 440.4,267.1 441.1,267.0 441.7,262.7 442.3,261.1 443.0,261.7 443.6,265.5 444.2,261.8 444.9,266.7 445.5,267.6 446.1,266.4 446.8,265.4 447.4,266.9 448.0,263.6 448.7,265.0 449.3,262.9 449.9,259.7 450.6,257.7 451.2,257.7 451.9,259.7 452.5,255.4 453.1,255.7 453.8,248.9 454.4,252.1 455.0,232.4 455.7,250.5 456.3,250.9 456.9,253.2 457.6,249.4 458.2,250.5 458.8,250.7 459.5,249.0 460.1,246.2 460.7,245.2 461.4,249.0 462.0,248.3 462.7,245.4 463.3,248.9 463.9,247.7 464.6,248.7 465.2,247.1 465.8,244.5 466.5,249.9 467.1,249.6 467.7,249.3 468.4,250.2 469.0,240.8 469.6,251.6 470.3,238.8 470.9,251.5 471.5,249.9 472.2,249.7 472.8,252.9 473.5,248.9 474.1,246.4 474.7,246.5 475.4,243.5 476.0,241.4 476.6,240.6 477.3,248.7 477.9,246.7 478.5,245.4 479.2,243.4 479.8,250.9 480.4,251.6 481.1,249.2 481.7,248.1 482.3,250.2 483.0,247.0 483.6,248.5 484.3,251.1 484.9,250.9 485.5,248.9 486.2,249.1 486.8,247.9 487.4,247.5 488.1,246.4 488.7,244.1 489.3,244.2 490.0,246.0 490.6,249.2 491.2,248.7 491.9,244.5 492.5,247.8 493.1,251.4 493.8,250.8 494.4,249.4 495.1,248.7 495.7,249.4 496.3,250.6 497.0,247.8 497.6,239.3 498.2,249.1 498.9,249.5 499.5,234.0 500.1,247.7 500.8,246.3 501.4,250.0 502.0,250.3 502.7,242.2 503.3,248.8 503.9,246.6 504.6,248.8 505.2,248.4 505.9,250.4 506.5,246.7 507.1,253.4 507.8,251.9 508.4,242.8 509.0,247.7 509.7,252.7 510.3,247.8 510.9,243.3 511.6,247.3 512.2,250.8 512.8,251.6 513.5,249.5 514.1,250.8 514.7,251.9 515.4,247.7 516.0,252.8 516.7,243.9 517.3,250.8 517.9,251.0 518.6,247.4 519.2,225.9 519.8,250.8 520.5,249.1 521.1,237.7 521.7,249.1 522.4,245.8 523.0,249.2 523.6,246.4 524.3,248.2 524.9,248.9 525.5,244.9 526.2,250.7 526.8,242.5 527.5,250.7 528.1,250.4 528.7,240.4 529.4,253.4 530.0,248.6 530.6,248.4 531.3,250.9 531.9,246.0 532.5,243.5 533.2,252.1 533.8,251.2 534.4,243.2 535.1,242.0 535.7,252.0 536.3,250.2 537.0,249.7 537.6,249.5 538.3,243.0 538.9,245.2 539.5,252.0 540.2,248.9 540.8,239.2 541.4,250.6 542.1,248.0 542.7,248.8 543.3,247.9 544.0,250.9 544.6,246.4 545.2,245.0 545.9,252.8 546.5,249.6 547.1,251.3 547.8,248.0 548.4,246.6 549.1,247.9 549.7,250.5 550.3,246.0 551.0,251.3 551.6,249.9 552.2,249.6 552.9,251.4 553.5,250.2 554.1,252.1 554.8,244.6 555.4,244.0 556.0,236.7 556.7,248.9 557.3,247.6 557.9,248.5 558.6,249.4 559.2,250.5 559.9,247.6 560.5,250.8 561.1,244.5 561.8,246.2 562.4,247.1 563.0,247.4 563.7,250.1 564.3,245.0 564.9,250.6 565.6,249.0 566.2,249.6 566.8,249.3 567.5,244.2 568.1,247.5 568.7,247.6 569.4,250.1 570.0,248.3 570.7,249.5 571.3,250.6 571.9,240.3 572.6,242.4 573.2,252.6 573.8,243.5 574.5,239.7 575.1,247.6 575.7,243.2 576.4,250.9 577.0,250.8 577.6,247.7 578.3,250.4 578.9,248.0 579.5,244.3 580.2,246.4 580.8,246.9 581.5,247.8 582.1,236.6 582.7,248.7 583.4,246.8 584.0,247.7 584.6,249.6 585.3,249.0 585.9,249.8 586.5,249.2 587.2,253.1 587.8,252.0 588.4,251.4 589.1,252.0 589.7,240.4 590.4,253.0 591.0,252.0 591.6,247.6 592.3,251.0 592.9,248.3 593.5,240.0 594.2,248.0 594.8,248.5 595.4,248.1 596.1,248.5 596.7,249.5 597.3,247.6 598.0,245.7 598.6,244.1 599.2,249.0 599.9,246.6 600.5,243.4 601.2,247.1 601.8,249.4 602.4,246.5 603.1,247.5 603.7,248.4 604.3,250.6 605.0,239.7 605.6,248.0 606.2,240.4 606.9,247.4 607.5,251.8 608.1,246.8 608.8,250.5 609.4,248.9 610.0,251.7 610.7,248.2 611.3,236.4 612.0,249.1 612.6,248.9 613.2,245.2 613.9,243.6 614.5,247.4 615.1,239.9 615.8,243.9 616.4,250.2 617.0,249.4 617.7,250.4 618.3,248.6 618.9,248.3 619.6,247.9 620.2,247.2 620.8,245.1 621.5,248.0 622.1,249.1 622.8,247.8 623.4,249.3 624.0,248.9 624.7,249.1 625.3,243.6 625.9,248.6 626.6,250.0 627.2,249.1 627.8,247.9 628.5,251.7 629.1,251.7 629.7,249.4 630.4,251.8 631.0,250.0 631.6,251.4 632.3,251.7 632.9,251.9 633.6,245.2 634.2,244.4 634.8,251.7 635.5,236.8 636.1,253.2 636.7,248.9 637.4,251.0 638.0,248.7 638.6,252.1 639.3,251.7 639.9,250.8 640.5,244.6 641.2,252.4 641.8,254.5 642.4,253.3 643.1,251.7 643.7,247.9 644.4,250.8 645.0,247.7 645.6,242.6 646.3,251.1 646.9,248.4 647.5,248.3 648.2,252.8 648.8,252.0 649.4,251.7 650.1,253.1 650.7,249.8 651.3,247.9 652.0,251.0 652.6,236.1 653.2,246.3 653.9,248.4 654.5,250.7 655.2,248.5 655.8,249.3 656.4,245.3 657.1,252.3 657.7,249.3 658.3,251.9 659.0,247.8 659.6,248.8 660.2,252.4 660.9,251.8 661.5,251.4 662.1,251.8 662.8,243.8 663.4,252.9 664.0,247.2 664.7,249.1 665.3,252.8 666.0,246.7 666.6,247.1 667.2,247.1 667.9,252.9 668.5,248.6 669.1,240.2 669.8,254.1 670.4,252.5 671.0,247.3 671.7,245.4 672.3,247.3 672.9,248.9 673.6,249.0 674.2,250.2 674.8,250.5 675.5,252.2 676.1,244.8 676.8,245.5 677.4,250.1 678.0,249.4 678.7,248.5 679.3,250.3 679.9,253.4 680.6,252.5 681.2,238.8 681.8,250.0 682.5,245.8 683.1,250.0 683.7,253.9 684.4,250.7 685.0,250.6 685.6,251.4 686.3,252.2 686.9,246.2 687.6,253.7 688.2,254.0 688.8,253.2 689.5,254.6 690.1,252.3 690.7,249.0 691.4,245.7 692.0,248.2 692.6,252.2 693.3,253.3 693.9,250.8 694.5,252.1 695.2,242.2 695.8,246.1 696.4,247.5 697.1,248.8 697.7,249.0 698.4,244.2 699.0,248.2 699.6,243.4 700.3,250.5 700.9,252.1 701.5,251.3 702.2,246.0 702.8,251.5 703.4,246.6 704.1,247.9 704.7,245.8 705.3,239.6 706.0,248.5 706.6,251.2 707.2,249.3 707.9,251.6 708.5,248.6 709.2,248.3 709.8,249.4 710.4,250.8 711.1,251.2 711.7,251.2 712.3,247.4 713.0,246.1 713.6,250.6 714.2,250.5 714.9,253.0 715.5,251.4 716.1,247.5 716.8,247.2 717.4,244.1 718.0,249.3 718.7,249.8 719.3,249.6 720.0,244.8 720.6,250.0 721.2,251.1 721.9,251.3 722.5,244.2 723.1,248.2 723.8,242.1 724.4,252.3 725.0,242.9 725.7,253.4 726.3,249.9 726.9,247.8 727.6,247.4 728.2,251.3 728.8,247.6 729.5,251.2 730.1,231.9 730.8,247.9 731.4,245.0 732.0,250.3 732.7,248.8 733.3,247.6 733.9,246.7 734.6,250.1 735.2,248.9 735.8,248.5 736.5,251.7 737.1,249.3 737.7,251.4 738.4,249.7 739.0,248.1 739.6,251.4 740.3,251.2 740.9,247.4 741.6,250.0 742.2,251.5 742.8,251.7 743.5,246.1 744.1,248.2 744.7,252.0 745.4,247.6 746.0,250.4 746.6,247.6 747.3,250.6 747.9,248.9 748.5,249.0 749.2,248.0 749.8,248.0 750.5,250.3 751.1,249.8 751.7,244.3 752.4,241.8 753.0,252.7 753.6,240.7 754.3,250.3 754.9,248.4 755.5,236.3 756.2,248.1 756.8,245.9 757.4,248.1 758.1,246.2 758.7,251.3 759.3,250.6 760.0,241.8 760.6,249.2 761.3,248.6 761.9,249.9 762.5,249.5 763.2,251.4 763.8,249.8 764.4,249.7 765.1,249.5 765.7,247.6 766.3,253.4 767.0,248.1 767.6,253.4 768.2,248.8 768.9,247.6 769.5,240.5 770.1,242.0 770.8,247.2 771.4,238.2 772.1,248.1 772.7,248.4 773.3,250.1 774.0,248.3 774.6,245.2 775.2,248.8 775.9,248.8 776.5,250.9 777.1,253.1 777.8,244.2 778.4,241.9 779.0,252.8 779.7,248.1 780.3,250.3 780.9,236.7 781.6,252.7 782.2,248.7 782.9,251.1 783.5,251.2 784.1,246.2 784.8,237.0 785.4,243.0 786.0,251.1 786.7,251.3 787.3,255.6 787.9,244.9 788.6,240.1 789.2,241.1 789.8,250.0 790.5,250.9 791.1,250.9 791.7,250.6 792.4,243.9 793.0,250.4 793.7,251.1 794.3,246.9 794.9,243.9 795.6,244.9 796.2,247.0 796.8,242.7 797.5,249.3 798.1,244.4 798.7,246.7 799.4,250.8 800.0,249.2 800.6,246.6 801.3,243.8 801.9,249.5 802.5,248.0 803.2,249.4 803.8,247.0 804.5,242.5 805.1,249.6 805.7,250.2 806.4,249.9 807.0,244.5 807.6,249.5 808.3,250.3 808.9,253.3 809.5,247.6 810.2,251.6 810.8,253.3 811.4,247.2 812.1,254.5 812.7,253.8 813.3,246.6 814.0,250.9 814.6,252.1 815.3,252.6 815.9,244.9 816.5,247.1 817.2,248.3 817.8,247.3 818.4,249.6 819.1,246.7 819.7,248.6 820.3,253.1 821.0,250.1 821.6,250.9 822.2,249.5 822.9,217.1 823.5,248.5 824.1,246.6 824.8,248.9 825.4,249.3 826.1,253.0 826.7,250.5 827.3,248.2 828.0,251.0 828.6,245.0 829.2,251.6 829.9,250.3 830.5,246.2 831.1,250.0 831.8,249.8 832.4,248.7 833.0,247.6 833.7,242.1 834.3,246.6 834.9,249.8 835.6,240.2 836.2,250.6 836.9,249.8 837.5,252.2 838.1,242.2 838.8,251.4 839.4,247.9 840.0,249.6 840.7,237.1 841.3,248.1 841.9,248.8 842.6,239.7 843.2,239.7 843.8,244.7 844.5,250.6 845.1,251.9 845.7,227.2 846.4,249.2 847.0,246.8 847.7,243.6 848.3,247.5 848.9,248.6 849.6,249.2 850.2,242.4 850.8,251.0 851.5,247.1 852.1,239.3 852.7,246.6 853.4,244.1 854.0,250.9 854.6,251.3 855.3,250.1 855.9,248.7 856.5,240.3 857.2,251.9 857.8,251.5 858.5,247.8 859.1,250.3 859.7,248.1 860.4,250.7 861.0,249.7 861.6,252.4 862.3,247.1 862.9,244.9 863.5,248.6 864.2,251.0 864.8,251.8 865.4,248.6 866.1,251.7 866.7,250.2 867.3,245.0 868.0,241.5 868.6,245.6 869.3,250.7 869.9,253.9 870.5,251.3 871.2,251.2 871.8,245.6 872.4,250.2 873.1,248.7 873.7,251.8 874.3,250.0 875.0,249.4 875.6,247.5 876.2,248.0 876.9,241.7 877.5,251.2 878.1,250.8 878.8,241.4 879.4,250.8 880.1,247.3 880.7,252.2 881.3,250.7 882.0,248.9 882.6,245.4 883.2,248.5 883.9,249.4 884.5,247.5 885.1,247.1 885.8,251.6 886.4,249.1 887.0,248.1 887.7,252.2 888.3,252.9 888.9,250.6 889.6,250.9 890.2,248.0 890.9,252.0 891.5,253.3 892.1,252.7 892.8,252.7 893.4,251.3 894.0,251.9 894.7,249.1 895.3,247.4 895.9,252.1 896.6,250.7 897.2,251.3 897.8,243.8 898.5,253.1 899.1,242.0 899.7,250.8 900.4,249.9 901.0,250.0 901.7,248.7 902.3,247.9 902.9,239.6 903.6,250.3 904.2,251.1 904.8,247.2 905.5,244.6 906.1,246.4 906.7,246.6 907.4,242.1 908.0,241.3 908.6,248.8 909.3,246.4 909.9,236.2 910.6,246.3 911.2,245.4 911.8,251.7 912.5,248.6 913.1,248.0 913.7,247.7 914.4,232.2 915.0,251.0 915.6,250.4 916.3,248.9 916.9,249.8 917.5,249.7 918.2,246.0 918.8,247.9 919.4,250.2 920.1,244.7 920.7,246.1 921.4,253.9 922.0,252.3 922.6,251.4 923.3,245.0 923.9,248.4 924.5,248.1 925.2,249.9 925.8,249.2 926.4,247.2 927.1,245.9 927.7,245.3 928.3,246.2 929.0,250.7 929.6,251.2 930.2,249.4 930.9,245.9 931.5,247.7 932.2,246.5 932.8,243.2 933.4,249.9 934.1,251.8 934.7,251.9 935.3,247.0 936.0,252.0 936.6,243.9 937.2,246.0 937.9,248.5 938.5,253.0 939.1,252.5 939.8,251.1 940.4,240.8 941.0,243.5 941.7,250.1 942.3,249.7 943.0,246.2 943.6,248.3 944.2,253.2 944.9,249.3 945.5,243.0 946.1,250.4 946.8,245.6 947.4,246.2 948.0,245.3 948.7,250.1 949.3,250.0 949.9,244.5 950.6,248.1 951.2,252.5 951.8,248.0 952.5,246.4 953.1,247.9 953.8,250.6 954.4,250.5 955.0,238.7 955.7,248.3 956.3,250.1 956.9,249.3 957.6,249.4 958.2,249.6 958.8,249.6 959.5,252.0 960.1,248.6 960.7,245.5 961.4,253.3 962.0,251.1 962.6,250.5 963.3,250.1 963.9,247.3 964.6,246.3 965.2,244.0 965.8,247.4 966.5,243.9 967.1,246.1 967.7,250.8 968.4,249.1 969.0,247.1 969.6,253.7 970.3,253.8 970.9,251.9 971.5,251.8 972.2,253.0 972.8,244.7 973.4,240.6 974.1,252.3 974.7,246.5 975.4,248.0 976.0,251.2 976.6,250.0 977.3,246.7 977.9,248.7 978.5,242.3 979.2,247.0 979.8,247.1 980.4,250.0 981.1,249.2 981.7,251.7 982.3,251.0 983.0,247.7 983.6,253.1 984.2,252.3 984.9,245.3 985.5,248.0 986.2,250.3 986.8,251.0 987.4,250.1 988.1,251.5 988.7,252.5 989.3,245.8 990.0,249.6 990.6,245.9 991.2,243.9 991.9,247.1 992.5,244.0 993.1,250.2 993.8,245.2 994.4,241.0 995.0,248.4 995.7,251.7 996.3,247.4 997.0,249.7 997.6,250.3 998.2,239.2 998.9,250.3 999.5,246.8 1000.1,250.5 1000.8,249.2 1001.4,240.1 1002.0,249.9 1002.7,245.6 1003.3,245.4 1003.9,246.8 1004.6,244.5 1005.2,247.7 1005.8,243.1 1006.5,249.2 1007.1,249.5 1007.8,250.6 1008.4,248.6 1009.0,245.1 1009.7,248.7 1010.3,248.5 1010.9,248.6 1011.6,239.0 1012.2,246.1 1012.8,251.9 1013.5,237.3 1014.1,251.5 1014.7,248.3 1015.4,249.7 1016.0,244.7 1016.6,248.4 1017.3,247.8 1017.9,248.7 1018.6,247.6 1019.2,247.1 1019.8,249.4 1020.5,249.8 1021.1,251.9 1021.7,251.7 1022.4,250.7 1023.0,247.3 1023.6,248.3 1024.3,242.8 1024.9,250.9 1025.5,250.9 1026.2,243.2 1026.8,249.0 1027.4,250.0 1028.1,252.3 1028.7,250.2 1029.4,247.5 1030.0,252.1 1030.6,249.6 1031.3,251.6 1031.9,249.5 1032.5,250.0 1033.2,244.0 1033.8,245.5 1034.4,250.7 1035.1,237.0 1035.7,250.1 1036.3,248.0 1037.0,248.4 1037.6,249.6 1038.2,249.3 1038.9,247.0 1039.5,251.3 1040.2,247.8 1040.8,252.4 1041.4,251.7 1042.1,251.4 1042.7,249.5 1043.3,251.7 1044.0,251.8 1044.6,247.2 1045.2,252.1 1045.9,251.0 1046.5,252.8 1047.1,241.0 1047.8,240.8 1048.4,249.8 1049.0,249.2 1049.7,250.6 1050.3,251.1 1051.0,251.4 1051.6,249.4 1052.2,251.7 1052.9,251.8 1053.5,233.2 1054.1,236.6 1054.8,249.8 1055.4,249.5 1056.0,249.1 1056.7,248.9 1057.3,252.5 1057.9,249.2 1058.6,250.1 1059.2,252.4 1059.8,252.4 1060.5,251.2 1061.1,246.7 1061.8,249.6 1062.4,249.4 1063.0,249.8 1063.7,251.7 1064.3,246.0 1064.9,249.9 1065.6,252.4 1066.2,251.5 1066.8,251.9 1067.5,251.6 1068.1,246.3 1068.7,250.9 1069.4,250.7 1070.0,242.6 1070.7,251.7 1071.3,249.7 1071.9,253.4 1072.6,251.7 1073.2,245.8 1073.8,248.8 1074.5,249.7 1075.1,248.6 1075.7,254.2 1076.4,252.4 1077.0,253.5 1077.6,254.0 1078.3,253.4 1078.9,242.2 1079.5,252.2 1080.2,251.9 1080.8,246.8 1081.5,246.1 1082.1,241.8 1082.7,252.2 1083.4,252.7 1084.0,247.7 1084.6,248.1 1085.3,248.2 1085.9,243.3 1086.5,247.0 1087.2,249.5 1087.8,250.8 1088.4,246.4 1089.1,253.2 1089.7,251.8 1090.3,251.9 1091.0,251.1 1091.6,250.3 1092.3,251.6 1092.9,245.9 1093.5,250.4 1094.2,254.1 1094.8,250.8 1095.4,249.3 1096.1,252.7 1096.7,252.5 1097.3,253.3 1098.0,247.9 1098.6,252.7 1099.2,252.9 1099.9,248.6 1100.5,248.4 1101.1,249.7 1101.8,250.2 1102.4,252.0 1103.1,248.8 1103.7,246.3 1104.3,241.4 1105.0,248.0 1105.6,248.1 1106.2,252.8 1106.9,251.9 1107.5,255.5 1108.1,252.2 1108.8,250.9 1109.4,242.7 1110.0,246.8 1110.7,249.8 1111.3,246.5 1111.9,243.3 1112.6,248.1 1113.2,249.0 1113.9,247.9 1114.5,251.3 1115.1,250.5 1115.8,247.1 1116.4,243.4 1117.0,235.9 1117.7,244.5 1118.3,250.2 1118.9,247.6 1119.6,248.6 1120.2,248.3 1120.8,249.5 1121.5,248.6 1122.1,251.5 1122.7,249.5 1123.4,240.5 1124.0,248.2 1124.7,248.3 1125.3,250.6 1125.9,248.4 1126.6,250.3 1127.2,248.0 1127.8,248.1 1128.5,245.1 1129.1,252.6 1129.7,250.1 1130.4,248.5 1131.0,252.5 1131.6,245.4 1132.3,249.9 1132.9,242.3 1133.5,250.8 1134.2,251.2 1134.8,250.4 1135.5,249.1 1136.1,250.9 1136.7,250.4 1137.4,247.9 1138.0,248.0 1138.6,243.2 1139.3,249.7 1139.9,249.6 1140.5,247.3 1141.2,251.3 1141.8,248.2 1142.4,246.1 1143.1,245.9 1143.7,252.4 1144.3,249.3 1145.0,241.4 1145.6,240.5 1146.3,253.9 1146.9,244.4 1147.5,246.2 1148.2,249.2 1148.8,249.0 1149.4,251.7 1150.1,250.4 1150.7,249.0 1151.3,248.1 1152.0,241.2 1152.6,251.7 1153.2,250.4 1153.9,250.2 1154.5,252.4 1155.1,251.3 1155.8,251.1 1156.4,251.3 1157.1,244.3 1157.7,251.6 1158.3,251.8 1159.0,250.1 1159.6,248.1 1160.2,246.0 1160.9,254.5 1161.5,248.0 1162.1,251.1 1162.8,253.5 1163.4,252.1 1164.0,253.4 1164.7,251.1 1165.3,238.5 1165.9,240.5 1166.6,252.7 1167.2,255.0 1167.9,254.9 1168.5,254.0 1169.1,254.3 1169.8,256.2 1170.4,255.2 1171.0,258.1 1171.7,259.0 1172.3,248.2 1172.9,259.5 1173.6,259.5 1174.2,255.4 1174.8,253.1 1175.5,256.7 1176.1,255.3 1176.7,248.7 1177.4,255.9 1178.0,254.8 1178.7,254.4 1179.3,254.1 1179.9,253.4 1180.6,256.8 1181.2,229.0 1181.8,248.8 1182.5,253.6 1183.1,252.1 1183.7,244.3 1184.4,249.3 1185.0,246.8 1185.6,250.6 1186.3,251.0 1186.9,249.6 1187.5,252.6 1188.2,249.2 1188.8,251.2 1189.5,250.5 1190.1,249.3 1190.7,249.7 1191.4,250.4 1192.0,250.5 1192.6,251.1 1193.3,248.4 1193.9,244.3 1194.5,252.1 1195.2,248.7 1195.8,244.6 1196.4,248.4 1197.1,247.8 1197.7,246.2 1198.3,250.3 1199.0,245.8 1199.6,248.9 1200.3,251.2 1200.9,249.8 1201.5,241.7 1202.2,250.8 1202.8,246.3 1203.4,249.9 1204.1,248.3 1204.7,249.9 1205.3,240.0 1206.0,250.6 1206.6,238.8 1207.2,250.5 1207.9,246.0 1208.5,248.1 1209.1,248.0 1209.8,244.0 1210.4,249.0 1211.1,246.9 1211.7,248.9 1212.3,250.1 1213.0,249.3 1213.6,244.7 1214.2,252.0 1214.9,251.1 1215.5,242.0 1216.1,249.1 1216.8,240.0 1217.4,243.0 1218.0,252.2 1218.7,250.7 1219.3,246.9 1219.9,250.2 1220.6,251.6 1221.2,249.7 1221.9,251.1 1222.5,246.2 1223.1,248.6 1223.8,236.3 1224.4,245.4 1225.0,249.6 1225.7,247.3 1226.3,250.4 1226.9,256.0 1227.6,248.7 1228.2,252.6 1228.8,251.6 1229.5,254.5 1230.1,248.1 1230.8,249.4 1231.4,250.4 1232.0,249.0 1232.7,248.0 1233.3,244.9 1233.9,247.6 1234.6,237.8 1235.2,247.2 1235.8,250.7 1236.5,249.0 1237.1,248.2 1237.7,249.7 1238.4,243.2 1239.0,247.9 1239.6,249.3 1240.3,250.0 1240.9,252.1 1241.6,251.8 1242.2,252.9 1242.8,248.6 1243.5,245.2 1244.1,243.5 1244.7,248.6 1245.4,246.8 1246.0,248.5 1246.6,250.4 1247.3,248.1 1247.9,247.9 1248.5,250.4 1249.2,246.5 1249.8,249.7 1250.4,251.2 1251.1,245.2 1251.7,251.3 1252.4,249.3 1253.0,246.4 1253.6,251.7 1254.3,255.5 1254.9,254.5 1255.5,251.7 1256.2,251.5 1256.8,254.5 1257.4,251.1 1258.1,250.6 1258.7,248.3 1259.3,245.5 1260.0,250.2 1260.6,249.9 1261.2,248.5 1261.9,250.4 1262.5,251.7 1263.2,253.9 1263.8,248.8 1264.4,241.9 1265.1,250.3 1265.7,251.9 1266.3,251.6 1267.0,248.5 1267.6,249.8 1268.2,241.5 1268.9,249.7 1269.5,249.6 1270.1,244.6 1270.8,249.2 1271.4,243.5 1272.0,247.9 1272.7,250.1 1273.3,250.7 1274.0,243.5 1274.6,253.3 1275.2,253.4 1275.9,248.1 1276.5,252.7 1277.1,246.6 1277.8,247.8 1278.4,249.6 1279.0,250.6 1279.7,248.9 1280.3,240.5 1280.9,252.8 1281.6,252.0 1282.2,250.9 1282.8,250.5 1283.5,253.8 1284.1,250.9 1284.8,249.1 1285.4,250.8 1286.0,250.6 1286.7,248.3 1287.3,249.4 1287.9,252.6 1288.6,254.0 1289.2,252.8 1289.8,248.9 1290.5,243.2 1291.1,247.1 1291.7,241.0 1292.4,235.1 1293.0,250.5 1293.6,249.9 1294.3,245.5 1294.9,247.8 1295.6,244.7 1296.2,249.8 1296.8,248.2 1297.5,249.1 1298.1,250.5 1298.7,248.6 1299.4,245.2 1300.0,247.3 1300,297.5" />
<polygon fill="#6663a0" points="30,297.5 30.0,247.3 30.6,250.4 31.3,248.5 31.9,246.7 32.5,243.7 33.2,248.3 33.8,247.9 34.4,246.7 35.1,246.2 35.7,247.3 36.4,247.6 37.0,248.5 37.6,245.0 38.3,244.2 38.9,245.4 39.5,248.3 40.2,249.6 40.8,247.9 41.4,246.6 42.1,249.0 42.7,249.3 43.3,250.6 44.0,247.0 44.6,243.0 45.2,250.5 45.9,249.9 46.5,249.7 47.2,247.1 47.8,244.8 48.4,250.0 49.1,250.0 49.7,240.4 50.3,249.3 51.0,247.4 51.6,244.7 52.2,248.5 52.9,247.3 53.5,236.9 54.1,249.5 54.8,249.5 55.4,247.8 56.0,247.2 56.7,243.6 57.3,250.9 58.0,246.8 58.6,250.3 59.2,243.5 59.9,248.2 60.5,243.0 61.1,243.1 61.8,251.4 62.4,246.5 63.0,249.8 63.7,249.7 64.3,248.8 64.9,249.8 65.6,244.3 66.2,253.0 66.8,250.9 67.5,248.5 68.1,251.4 68.8,242.7 69.4,249.6 70.0,249.5 70.7,249.8 71.3,238.5 71.9,246.6 72.6,243.1 73.2,245.9 73.8,247.8 74.5,244.1 75.1,249.8 75.7,249.5 76.4,249.6 77.0,250.3 77.6,250.8 78.3,252.9 78.9,246.8 79.6,245.7 80.2,250.6 80.8,251.2 81.5,250.0 82.1,251.5 82.7,251.0 83.4,251.3 84.0,237.1 84.6,250.8 85.3,248.2 85.9,240.3 86.5,253.6 87.2,252.8 87.8,247.9 88.4,247.0 89.1,246.8 89.7,252.4 90.4,251.1 91.0,251.9 91.6,239.8 92.3,248.9 92.9,250.6 93.5,250.2 94.2,251.6 94.8,250.1 95.4,249.3 96.1,242.7 96.7,249.5 97.3,250.1 98.0,238.2 98.6,251.5 99.2,246.9 99.9,250.1 100.5,250.3 101.2,249.2 101.8,247.8 102.4,246.3 103.1,237.9 103.7,251.4 104.3,249.7 105.0,250.4 105.6,250.8 106.2,236.4 106.9,250.8 107.5,245.1 108.1,249.1 108.8,251.8 109.4,253.0 110.1,250.1 110.7,251.1 111.3,245.5 112.0,254.4 112.6,251.7 113.2,244.3 113.9,255.1 114.5,255.6 115.1,246.6 115.8,251.2 116.4,250.3 117.0,250.3 117.7,252.8 118.3,251.7 118.9,250.9 119.6,247.5 120.2,250.5 120.9,251.2 121.5,251.2 122.1,239.2 122.8,252.4 123.4,251.1 124.0,253.8 124.7,248.2 125.3,247.0 125.9,252.7 126.6,252.8 127.2,244.9 127.8,249.3 128.5,249.2 129.1,251.1 129.7,252.8 130.4,249.3 131.0,253.9 131.7,250.3 132.3,252.2 132.9,253.8 133.6,252.7 134.2,250.0 134.8,253.3 135.5,253.7 136.1,254.7 136.7,252.6 137.4,250.1 138.0,255.1 138.6,255.7 139.3,256.2 139.9,255.8 140.5,251.2 141.2,257.4 141.8,256.2 142.5,257.4 143.1,257.6 143.7,251.6 144.4,257.7 145.0,255.4 145.6,253.0 146.3,254.6 146.9,258.6 147.5,260.6 148.2,253.0 148.8,255.8 149.4,256.7 150.1,257.9 150.7,260.0 151.3,254.8 152.0,258.9 152.6,257.9 153.3,256.1 153.9,258.2 154.5,248.8 155.2,254.2 155.8,260.5 156.4,255.8 157.1,258.1 157.7,258.1 158.3,259.7 159.0,259.8 159.6,252.4 160.2,256.6 160.9,260.0 161.5,247.6 162.1,259.7 162.8,262.4 163.4,250.2 164.1,257.5 164.7,264.1 165.3,263.7 166.0,260.2 166.6,262.8 167.2,255.5 167.9,261.1 168.5,253.7 169.1,259.6 169.8,258.7 170.4,259.2 171.0,259.1 171.7,255.6 172.3,256.7 172.9,253.4 173.6,259.2 174.2,257.9 174.9,260.2 175.5,250.6 176.1,253.4 176.8,250.9 177.4,257.9 178.0,258.4 178.7,253.3 179.3,261.2 179.9,259.1 180.6,257.0 181.2,262.2 181.8,257.4 182.5,262.3 183.1,254.2 183.7,252.8 184.4,263.7 185.0,262.1 185.7,259.2 186.3,263.9 186.9,263.5 187.6,263.7 188.2,265.9 188.8,264.0 189.5,259.9 190.1,259.8 190.7,265.0 191.4,265.1 192.0,262.0 192.6,265.4 193.3,266.2 193.9,266.0 194.5,266.1 195.2,265.1 195.8,262.5 196.5,258.1 197.1,266.4 197.7,265.2 198.4,264.3 199.0,263.6 199.6,267.1 200.3,266.6 200.9,267.0 201.5,265.1 202.2,249.1 202.8,266.6 203.4,265.8 204.1,269.6 204.7,268.6 205.3,269.2 206.0,267.2 206.6,266.9 207.3,267.4 207.9,268.8 208.5,263.4 209.2,264.0 209.8,268.7 210.4,267.5 211.1,266.2 211.7,266.6 212.3,268.3 213.0,263.6 213.6,266.7 214.2,266.4 214.9,265.8 215.5,266.7 216.1,266.3 216.8,267.7 217.4,267.6 218.1,268.1 218.7,260.9 219.3,265.9 220.0,265.2 220.6,267.5 221.2,266.4 221.9,265.2 222.5,269.5 223.1,271.2 223.8,267.9 224.4,269.9 225.0,262.9 225.7,266.8 226.3,268.1 226.9,261.8 227.6,270.9 228.2,270.5 228.9,263.4 229.5,267.7 230.1,269.3 230.8,271.8 231.4,254.0 232.0,260.9 232.7,268.5 233.3,268.8 233.9,263.1 234.6,268.2 235.2,267.4 235.8,268.2 236.5,267.1 237.1,268.3 237.7,273.1 238.4,270.5 239.0,273.2 239.7,267.7 240.3,273.0 240.9,268.0 241.6,273.1 242.2,272.5 242.8,269.2 243.5,272.9 244.1,273.1 244.7,267.3 245.4,271.0 246.0,271.1 246.6,273.1 247.3,273.5 247.9,262.1 248.5,268.6 249.2,268.2 249.8,272.5 250.5,271.4 251.1,273.2 251.7,268.8 252.4,262.3 253.0,271.0 253.6,267.1 254.3,273.8 254.9,271.0 255.5,271.6 256.2,260.1 256.8,263.9 257.4,269.4 258.1,269.1 258.7,272.8 259.3,269.7 260.0,271.4 260.6,269.5 261.3,264.4 261.9,269.0 262.5,259.1 263.2,265.9 263.8,264.5 264.4,265.1 265.1,267.7 265.7,269.8 266.3,270.7 267.0,270.3 267.6,273.4 268.2,265.1 268.9,272.0 269.5,272.5 270.2,271.2 270.8,268.3 271.4,267.0 272.1,270.0 272.7,271.2 273.3,271.1 274.0,269.9 274.6,261.4 275.2,268.8 275.9,270.9 276.5,268.5 277.1,269.5 277.8,268.9 278.4,267.5 279.0,268.7 279.7,268.1 280.3,259.3 281.0,265.3 281.6,267.2 282.2,268.0 282.9,268.7 283.5,259.6 284.1,269.2 284.8,267.7 285.4,265.7 286.0,265.3 286.7,267.4 287.3,267.6 287.9,268.3 288.6,267.2 289.2,265.5 289.8,257.9 290.5,266.0 291.1,266.1 291.8,262.1 292.4,265.1 293.0,265.7 293.7,268.7 294.3,269.6 294.9,270.2 295.6,267.9 296.2,264.9 296.8,264.1 297.5,266.5 298.1,270.3 298.7,262.6 299.4,268.9 300.0,270.3 300.6,266.8 301.3,263.2 301.9,255.4 302.6,267.7 303.2,265.4 303.8,268.2 304.5,267.3 305.1,268.5 305.7,254.8 306.4,268.5 307.0,263.1 307.6,268.6 308.3,268.0 308.9,268.2 309.5,258.5 310.2,268.5 310.8,266.0 311.4,258.8 312.1,261.5 312.7,267.9 313.4,268.3 314.0,267.6 314.6,266.9 315.3,266.3 315.9,267.5 316.5,268.9 317.2,259.4 317.8,266.7 318.4,267.3 319.1,265.7 319.7,263.3 320.3,265.7 321.0,264.3 321.6,266.8 322.2,265.8 322.9,263.6 323.5,268.2 324.2,269.4 324.8,261.9 325.4,268.8 326.1,267.6 326.7,264.1 327.3,267.2 328.0,267.9 328.6,263.2 329.2,268.2 329.9,267.5 330.5,263.1 331.1,263.5 331.8,266.9 332.4,264.6 333.0,267.1 333.7,267.0 334.3,267.1 335.0,261.7 335.6,263.1 336.2,266.6 336.9,267.4 337.5,264.5 338.1,265.3 338.8,259.9 339.4,265.1 340.0,266.8 340.7,259.8 341.3,263.1 341.9,263.7 342.6,262.3 343.2,263.7 343.8,265.0 344.5,263.3 345.1,266.5 345.8,266.1 346.4,265.1 347.0,260.3 347.7,265.3 348.3,261.2 348.9,266.5 349.6,265.3 350.2,261.7 350.8,262.0 351.5,265.8 352.1,266.5 352.7,265.0 353.4,266.2 354.0,262.1 354.6,266.2 355.3,265.3 355.9,266.7 356.6,267.0 357.2,262.4 357.8,268.7 358.5,258.9 359.1,261.7 359.7,261.4 360.4,265.8 361.0,264.0 361.6,265.7 362.3,263.0 362.9,260.5 363.5,264.5 364.2,263.5 364.8,268.4 365.4,266.8 366.1,266.9 366.7,266.8 367.4,261.6 368.0,266.1 368.6,265.6 369.3,267.2 369.9,264.7 370.5,263.9 371.2,262.5 371.8,261.3 372.4,263.9 373.1,267.1 373.7,254.3 374.3,247.5 375.0,264.6 375.6,263.6 376.2,260.2 376.9,268.9 377.5,268.3 378.2,267.7 378.8,267.1 379.4,264.7 380.1,263.6 380.7,261.6 381.3,266.8 382.0,268.1 382.6,266.4 383.2,260.0 383.9,264.9 384.5,263.0 385.1,266.1 385.8,264.8 386.4,265.6 387.0,267.9 387.7,267.3 388.3,263.8 389.0,267.6 389.6,266.4 390.2,259.7 390.9,269.0 391.5,262.3 392.1,263.4 392.8,261.8 393.4,267.1 394.0,263.8 394.7,261.7 395.3,260.9 395.9,262.7 396.6,259.8 397.2,265.7 397.8,266.7 398.5,262.6 399.1,265.4 399.8,264.2 400.4,266.7 401.0,253.0 401.7,265.6 402.3,263.9 402.9,265.3 403.6,261.6 404.2,257.9 404.8,263.0 405.5,263.8 406.1,266.6 406.7,266.0 407.4,268.7 408.0,268.0 408.6,264.8 409.3,268.1 409.9,265.6 410.6,262.9 411.2,265.4 411.8,268.8 412.5,268.6 413.1,261.8 413.7,268.4 414.4,263.3 415.0,264.9 415.6,268.6 416.3,267.8 416.9,268.2 417.5,267.9 418.2,262.0 418.8,267.4 419.4,266.3 420.1,266.0 420.7,267.2 421.4,268.5 422.0,270.0 422.6,270.4 423.3,267.3 423.9,268.3 424.5,262.7 425.2,264.6 425.8,266.0 426.4,263.5 427.1,265.5 427.7,265.2 428.3,265.6 429.0,257.0 429.6,268.4 430.3,268.5 430.9,270.5 431.5,269.6 432.2,269.0 432.8,268.6 433.4,264.5 434.1,262.2 434.7,268.7 435.3,268.4 436.0,267.8 436.6,268.9 437.2,268.8 437.9,262.7 438.5,256.5 439.1,267.9 439.8,265.2 440.4,269.3 441.1,269.0 441.7,264.5 442.3,263.0 443.0,263.1 443.6,267.8 444.2,265.2 444.9,268.0 445.5,269.5 446.1,268.4 446.8,267.4 447.4,269.7 448.0,266.3 448.7,266.5 449.3,264.5 449.9,262.3 450.6,260.4 451.2,259.9 451.9,261.8 452.5,257.6 453.1,258.2 453.8,250.6 454.4,253.6 455.0,234.1 455.7,253.5 456.3,253.4 456.9,254.4 457.6,253.5 458.2,251.9 458.8,251.9 459.5,250.9 460.1,249.0 460.7,246.8 461.4,251.4 462.0,251.8 462.7,247.7 463.3,251.6 463.9,250.0 464.6,249.5 465.2,248.3 465.8,246.5 466.5,251.8 467.1,252.6 467.7,250.9 468.4,253.0 469.0,243.1 469.6,252.9 470.3,241.1 470.9,253.6 471.5,252.6 472.2,251.3 472.8,253.6 473.5,251.7 474.1,247.4 474.7,249.0 475.4,245.6 476.0,243.7 476.6,242.6 477.3,251.7 477.9,248.6 478.5,247.2 479.2,245.3 479.8,252.8 480.4,252.5 481.1,251.2 481.7,250.1 482.3,253.3 483.0,249.2 483.6,251.4 484.3,253.8 484.9,253.8 485.5,251.4 486.2,251.4 486.8,249.7 487.4,249.4 488.1,247.6 488.7,246.4 489.3,246.1 490.0,248.5 490.6,251.9 491.2,250.5 491.9,246.9 492.5,249.7 493.1,253.6 493.8,253.3 494.4,252.5 495.1,250.8 495.7,251.6 496.3,252.4 497.0,250.0 497.6,240.5 498.2,250.5 498.9,251.3 499.5,236.6 500.1,249.8 500.8,248.1 501.4,252.3 502.0,252.6 502.7,244.0 503.3,251.2 503.9,248.8 504.6,251.4 505.2,250.5 505.9,253.0 506.5,249.1 507.1,254.8 507.8,254.4 508.4,244.8 509.0,248.7 509.7,254.9 510.3,250.3 510.9,245.1 511.6,250.6 512.2,252.1 512.8,253.1 513.5,251.4 514.1,252.1 514.7,254.4 515.4,250.4 516.0,254.9 516.7,246.1 517.3,252.8 517.9,253.2 518.6,249.2 519.2,226.8 519.8,252.0 520.5,251.3 521.1,240.0 521.7,251.8 522.4,248.7 523.0,250.4 523.6,249.5 524.3,250.3 524.9,250.4 525.5,246.5 526.2,253.1 526.8,244.3 527.5,252.7 528.1,253.1 528.7,242.4 529.4,255.6 530.0,251.5 530.6,250.4 531.3,253.4 531.9,247.5 532.5,245.6 533.2,254.1 533.8,252.9 534.4,244.8 535.1,243.4 535.7,253.5 536.3,252.9 537.0,251.6 537.6,251.3 538.3,244.8 538.9,248.0 539.5,253.7 540.2,250.7 540.8,241.5 541.4,253.8 542.1,251.2 542.7,250.6 543.3,251.1 544.0,252.6 544.6,247.9 545.2,247.6 545.9,254.6 546.5,252.2 547.1,253.6 547.8,251.2 548.4,249.6 549.1,249.9 549.7,252.8 550.3,249.3 551.0,253.4 551.6,251.6 552.2,251.7 552.9,252.7 553.5,252.7 554.1,254.4 554.8,245.9 555.4,245.3 556.0,238.6 556.7,250.6 557.3,249.5 557.9,250.6 558.6,251.2 559.2,252.9 559.9,250.3 560.5,252.3 561.1,246.1 561.8,248.5 562.4,249.3 563.0,249.8 563.7,252.1 564.3,247.2 564.9,252.3 565.6,251.0 566.2,250.9 566.8,251.2 567.5,247.6 568.1,250.8 568.7,250.6 569.4,252.2 570.0,250.8 570.7,251.4 571.3,253.2 571.9,242.8 572.6,243.8 573.2,253.7 573.8,245.0 574.5,241.7 575.1,250.2 575.7,245.6 576.4,252.9 577.0,253.6 577.6,249.4 578.3,252.3 578.9,250.8 579.5,246.1 580.2,247.5 580.8,249.3 581.5,250.4 582.1,238.7 582.7,250.1 583.4,249.1 584.0,248.7 584.6,252.4 585.3,251.1 585.9,252.4 586.5,251.2 587.2,254.7 587.8,253.7 588.4,254.7 589.1,253.9 589.7,242.9 590.4,254.8 591.0,255.3 591.6,249.9 592.3,253.2 592.9,251.3 593.5,242.0 594.2,249.3 594.8,250.5 595.4,251.5 596.1,250.9 596.7,251.2 597.3,250.1 598.0,247.8 598.6,246.1 599.2,251.5 599.9,249.4 600.5,246.8 601.2,248.9 601.8,251.2 602.4,248.8 603.1,249.2 603.7,249.9 604.3,251.5 605.0,241.8 605.6,250.5 606.2,241.7 606.9,249.8 607.5,254.2 608.1,248.9 608.8,252.5 609.4,250.9 610.0,254.3 610.7,250.6 611.3,237.8 612.0,251.0 612.6,250.8 613.2,246.6 613.9,246.0 614.5,249.3 615.1,242.6 615.8,246.7 616.4,251.6 617.0,251.5 617.7,252.8 618.3,250.5 618.9,251.1 619.6,250.4 620.2,248.5 620.8,247.1 621.5,250.0 622.1,251.4 622.8,250.6 623.4,251.1 624.0,251.6 624.7,251.7 625.3,246.8 625.9,250.2 626.6,251.6 627.2,251.0 627.8,250.6 628.5,254.0 629.1,253.2 629.7,251.1 630.4,253.1 631.0,252.7 631.6,253.6 632.3,253.7 632.9,253.9 633.6,246.0 634.2,246.8 634.8,253.3 635.5,238.9 636.1,254.5 636.7,249.9 637.4,253.4 638.0,250.9 638.6,255.0 639.3,253.2 639.9,252.3 640.5,246.9 641.2,255.1 641.8,255.8 642.4,255.0 643.1,253.4 643.7,249.4 644.4,252.8 645.0,250.8 645.6,245.3 646.3,252.6 646.9,250.4 647.5,249.9 648.2,254.8 648.8,253.7 649.4,254.2 650.1,255.5 650.7,251.8 651.3,250.0 652.0,253.7 652.6,238.7 653.2,248.7 653.9,251.3 654.5,251.7 655.2,251.9 655.8,250.2 656.4,247.4 657.1,255.1 657.7,251.2 658.3,253.5 659.0,250.4 659.6,251.2 660.2,253.7 660.9,253.8 661.5,252.9 662.1,253.6 662.8,245.5 663.4,255.2 664.0,250.1 664.7,251.4 665.3,255.6 666.0,248.8 666.6,249.6 667.2,248.5 667.9,255.5 668.5,251.0 669.1,241.0 669.8,255.7 670.4,254.4 671.0,248.6 671.7,247.2 672.3,249.6 672.9,251.3 673.6,250.4 674.2,251.9 674.8,252.1 675.5,254.2 676.1,246.6 676.8,247.6 677.4,252.0 678.0,250.5 678.7,250.6 679.3,252.9 679.9,255.3 680.6,255.1 681.2,241.4 681.8,252.1 682.5,247.6 683.1,252.1 683.7,256.1 684.4,252.9 685.0,252.4 685.6,253.5 686.3,254.2 686.9,248.9 687.6,256.1 688.2,255.3 688.8,255.0 689.5,256.6 690.1,254.6 690.7,252.1 691.4,247.4 692.0,250.9 692.6,254.1 693.3,254.5 693.9,252.7 694.5,254.4 695.2,244.3 695.8,248.8 696.4,250.5 697.1,250.5 697.7,252.1 698.4,247.3 699.0,250.8 699.6,246.0 700.3,252.1 700.9,253.9 701.5,253.7 702.2,247.7 702.8,253.7 703.4,249.0 704.1,249.5 704.7,248.1 705.3,241.4 706.0,249.8 706.6,253.3 707.2,251.3 707.9,253.0 708.5,251.6 709.2,250.7 709.8,251.1 710.4,252.7 711.1,252.6 711.7,252.9 712.3,250.2 713.0,248.5 713.6,252.5 714.2,252.7 714.9,254.4 715.5,253.2 716.1,250.1 716.8,249.4 717.4,246.8 718.0,251.7 718.7,252.4 719.3,252.1 720.0,246.8 720.6,252.5 721.2,253.3 721.9,253.3 722.5,245.7 723.1,250.7 723.8,244.5 724.4,253.4 725.0,245.1 725.7,255.2 726.3,253.4 726.9,250.3 727.6,250.0 728.2,252.7 728.8,249.3 729.5,252.7 730.1,233.8 730.8,249.8 731.4,246.6 732.0,252.7 732.7,251.2 733.3,250.0 733.9,249.4 734.6,252.3 735.2,250.3 735.8,249.8 736.5,254.2 737.1,252.3 737.7,253.3 738.4,251.6 739.0,251.0 739.6,253.1 740.3,253.3 740.9,250.8 741.6,252.0 742.2,254.1 742.8,253.2 743.5,247.4 744.1,250.3 744.7,253.9 745.4,250.5 746.0,252.3 746.6,249.3 747.3,254.0 747.9,251.2 748.5,250.6 749.2,249.9 749.8,249.3 750.5,252.7 751.1,251.8 751.7,246.3 752.4,244.3 753.0,254.3 753.6,243.3 754.3,252.4 754.9,250.7 755.5,238.8 756.2,250.3 756.8,248.4 757.4,250.0 758.1,248.7 758.7,252.6 759.3,252.1 760.0,244.3 760.6,250.5 761.3,250.9 761.9,252.8 762.5,250.7 763.2,253.3 763.8,251.8 764.4,252.2 765.1,250.5 765.7,250.7 766.3,255.0 767.0,250.9 767.6,255.6 768.2,251.1 768.9,249.6 769.5,242.7 770.1,244.0 770.8,249.8 771.4,241.5 772.1,251.0 772.7,250.9 773.3,252.8 774.0,251.3 774.6,247.0 775.2,250.3 775.9,250.5 776.5,253.2 777.1,254.0 777.8,245.2 778.4,243.8 779.0,253.6 779.7,250.8 780.3,251.9 780.9,239.6 781.6,253.8 782.2,249.3 782.9,253.0 783.5,253.1 784.1,248.9 784.8,237.8 785.4,245.4 786.0,253.0 786.7,252.1 787.3,256.9 787.9,246.2 788.6,242.0 789.2,243.4 789.8,252.4 790.5,253.2 791.1,253.7 791.7,252.8 792.4,246.7 793.0,253.0 793.7,253.5 794.3,249.7 794.9,245.6 795.6,247.8 796.2,248.2 796.8,244.4 797.5,250.7 798.1,246.6 798.7,248.5 799.4,251.8 800.0,251.5 800.6,248.5 801.3,246.8 801.9,251.8 802.5,249.4 803.2,251.6 803.8,250.3 804.5,243.5 805.1,252.1 805.7,251.7 806.4,250.9 807.0,246.3 807.6,252.2 808.3,253.3 808.9,254.4 809.5,249.9 810.2,253.0 810.8,255.5 811.4,249.7 812.1,255.8 812.7,256.4 813.3,248.1 814.0,253.5 814.6,254.5 815.3,253.5 815.9,246.5 816.5,250.1 817.2,251.1 817.8,249.6 818.4,252.0 819.1,248.2 819.7,251.6 820.3,255.0 821.0,252.9 821.6,252.5 822.2,250.6 822.9,219.1 823.5,250.4 824.1,247.9 824.8,251.5 825.4,250.5 826.1,254.3 826.7,253.0 827.3,250.2 828.0,252.7 828.6,246.9 829.2,252.9 829.9,252.6 830.5,248.2 831.1,252.5 831.8,252.2 832.4,250.7 833.0,249.2 833.7,245.3 834.3,248.5 834.9,251.7 835.6,241.9 836.2,253.1 836.9,252.9 837.5,253.0 838.1,244.8 838.8,253.8 839.4,249.1 840.0,251.6 840.7,238.7 841.3,250.0 841.9,251.0 842.6,242.0 843.2,240.9 843.8,248.1 844.5,252.9 845.1,253.6 845.7,229.8 846.4,251.8 847.0,249.1 847.7,246.1 848.3,250.0 848.9,251.1 849.6,251.4 850.2,245.2 850.8,252.1 851.5,249.4 852.1,240.4 852.7,248.1 853.4,246.1 854.0,252.7 854.6,253.6 855.3,252.4 855.9,250.9 856.5,242.8 857.2,254.1 857.8,253.8 858.5,250.1 859.1,252.2 859.7,250.4 860.4,253.6 861.0,252.2 861.6,254.1 862.3,249.7 862.9,246.6 863.5,251.1 864.2,253.3 864.8,253.1 865.4,250.6 866.1,253.6 866.7,251.7 867.3,247.7 868.0,243.4 868.6,248.0 869.3,253.0 869.9,255.3 870.5,253.7 871.2,253.7 871.8,248.3 872.4,252.4 873.1,250.8 873.7,253.4 874.3,251.3 875.0,251.7 875.6,249.5 876.2,250.0 876.9,244.2 877.5,252.6 878.1,252.1 878.8,242.2 879.4,253.0 880.1,250.5 880.7,254.0 881.3,253.0 882.0,251.1 882.6,248.7 883.2,250.9 883.9,252.2 884.5,249.9 885.1,249.5 885.8,252.6 886.4,251.6 887.0,250.8 887.7,254.0 888.3,255.1 888.9,252.0 889.6,253.2 890.2,249.3 890.9,254.2 891.5,255.2 892.1,254.5 892.8,253.9 893.4,253.1 894.0,253.6 894.7,251.4 895.3,250.3 895.9,254.8 896.6,253.2 897.2,253.1 897.8,247.2 898.5,255.6 899.1,244.0 899.7,252.3 900.4,251.3 901.0,251.7 901.7,250.9 902.3,249.6 902.9,242.6 903.6,253.3 904.2,254.2 904.8,250.0 905.5,245.0 906.1,248.5 906.7,248.5 907.4,244.1 908.0,243.5 908.6,250.8 909.3,248.3 909.9,237.2 910.6,248.1 911.2,247.8 911.8,253.4 912.5,251.2 913.1,250.7 913.7,249.7 914.4,233.3 915.0,253.1 915.6,252.4 916.3,250.8 916.9,251.9 917.5,251.3 918.2,248.0 918.8,249.3 919.4,251.5 920.1,246.3 920.7,249.0 921.4,255.2 922.0,254.0 922.6,252.6 923.3,247.0 923.9,250.9 924.5,250.0 925.2,251.4 925.8,251.3 926.4,248.7 927.1,248.6 927.7,247.0 928.3,248.7 929.0,254.1 929.6,253.2 930.2,251.6 930.9,248.6 931.5,251.5 932.2,249.1 932.8,246.2 933.4,252.5 934.1,252.9 934.7,253.9 935.3,249.7 936.0,253.9 936.6,245.9 937.2,249.0 937.9,251.3 938.5,254.0 939.1,253.3 939.8,252.8 940.4,243.1 941.0,246.4 941.7,252.6 942.3,252.3 943.0,248.3 943.6,251.6 944.2,255.0 944.9,252.1 945.5,245.9 946.1,252.9 946.8,246.6 947.4,249.1 948.0,247.7 948.7,251.5 949.3,252.1 949.9,246.9 950.6,250.4 951.2,254.2 951.8,250.7 952.5,248.8 953.1,251.5 953.8,252.3 954.4,252.0 955.0,239.8 955.7,251.0 956.3,252.3 956.9,251.7 957.6,252.1 958.2,251.5 958.8,252.6 959.5,253.6 960.1,250.5 960.7,249.0 961.4,255.2 962.0,252.9 962.6,252.3 963.3,252.7 963.9,248.5 964.6,248.9 965.2,246.4 965.8,248.8 966.5,246.2 967.1,248.0 967.7,252.6 968.4,251.7 969.0,249.1 969.6,255.3 970.3,254.6 970.9,253.3 971.5,253.5 972.2,253.9 972.8,247.9 973.4,242.6 974.1,254.3 974.7,248.8 975.4,250.2 976.0,253.3 976.6,252.0 977.3,248.9 977.9,250.7 978.5,244.4 979.2,248.6 979.8,249.6 980.4,251.3 981.1,250.8 981.7,253.0 982.3,253.8 983.0,250.5 983.6,254.8 984.2,253.6 984.9,248.1 985.5,250.3 986.2,252.6 986.8,253.0 987.4,250.9 988.1,253.7 988.7,254.8 989.3,247.8 990.0,251.3 990.6,248.1 991.2,246.4 991.9,248.7 992.5,246.8 993.1,252.2 993.8,246.9 994.4,243.4 995.0,251.0 995.7,253.5 996.3,248.9 997.0,251.0 997.6,251.5 998.2,241.4 998.9,253.1 999.5,249.1 1000.1,252.9 1000.8,250.7 1001.4,244.1 1002.0,251.5 1002.7,247.7 1003.3,246.8 1003.9,249.5 1004.6,246.6 1005.2,249.7 1005.8,244.7 1006.5,251.2 1007.1,251.6 1007.8,252.8 1008.4,250.4 1009.0,247.1 1009.7,249.9 1010.3,251.0 1010.9,250.5 1011.6,241.5 1012.2,247.4 1012.8,253.4 1013.5,238.9 1014.1,253.2 1014.7,249.8 1015.4,251.5 1016.0,247.3 1016.6,251.3 1017.3,250.2 1017.9,250.5 1018.6,250.0 1019.2,249.7 1019.8,251.7 1020.5,251.1 1021.1,253.1 1021.7,253.5 1022.4,252.5 1023.0,249.7 1023.6,250.8 1024.3,244.7 1024.9,251.8 1025.5,252.7 1026.2,244.9 1026.8,251.6 1027.4,251.7 1028.1,253.3 1028.7,253.1 1029.4,250.2 1030.0,254.0 1030.6,252.0 1031.3,253.0 1031.9,251.4 1032.5,251.6 1033.2,245.5 1033.8,247.8 1034.4,252.3 1035.1,239.0 1035.7,251.8 1036.3,250.2 1037.0,250.2 1037.6,252.6 1038.2,252.7 1038.9,249.0 1039.5,253.7 1040.2,249.6 1040.8,254.6 1041.4,252.9 1042.1,252.9 1042.7,251.3 1043.3,254.4 1044.0,253.1 1044.6,248.9 1045.2,253.5 1045.9,252.9 1046.5,254.3 1047.1,243.4 1047.8,243.8 1048.4,251.5 1049.0,251.1 1049.7,251.7 1050.3,252.9 1051.0,252.3 1051.6,251.1 1052.2,253.6 1052.9,253.6 1053.5,235.3 1054.1,238.4 1054.8,251.8 1055.4,251.3 1056.0,251.0 1056.7,251.8 1057.3,253.7 1057.9,252.2 1058.6,253.0 1059.2,254.3 1059.8,254.5 1060.5,253.7 1061.1,248.7 1061.8,251.4 1062.4,251.3 1063.0,250.8 1063.7,253.8 1064.3,247.4 1064.9,251.7 1065.6,254.5 1066.2,252.8 1066.8,253.9 1067.5,253.8 1068.1,247.4 1068.7,252.1 1069.4,252.9 1070.0,245.0 1070.7,254.5 1071.3,252.2 1071.9,254.7 1072.6,254.6 1073.2,248.6 1073.8,251.4 1074.5,251.6 1075.1,251.6 1075.7,256.2 1076.4,254.1 1077.0,255.2 1077.6,256.2 1078.3,254.4 1078.9,244.2 1079.5,255.0 1080.2,253.9 1080.8,249.1 1081.5,247.8 1082.1,244.0 1082.7,254.1 1083.4,254.0 1084.0,249.6 1084.6,249.5 1085.3,249.9 1085.9,245.4 1086.5,248.4 1087.2,250.4 1087.8,252.5 1088.4,250.5 1089.1,255.8 1089.7,253.1 1090.3,253.8 1091.0,252.7 1091.6,252.1 1092.3,253.2 1092.9,248.3 1093.5,253.4 1094.2,254.7 1094.8,253.5 1095.4,251.4 1096.1,254.7 1096.7,254.7 1097.3,256.1 1098.0,249.8 1098.6,254.4 1099.2,255.6 1099.9,251.7 1100.5,251.6 1101.1,251.5 1101.8,252.2 1102.4,253.9 1103.1,249.8 1103.7,248.9 1104.3,243.2 1105.0,250.6 1105.6,251.5 1106.2,254.5 1106.9,252.9 1107.5,256.6 1108.1,253.5 1108.8,252.8 1109.4,244.9 1110.0,249.5 1110.7,252.5 1111.3,248.6 1111.9,245.1 1112.6,250.5 1113.2,252.1 1113.9,250.5 1114.5,252.8 1115.1,252.5 1115.8,249.1 1116.4,245.1 1117.0,239.2 1117.7,246.4 1118.3,251.7 1118.9,249.9 1119.6,250.7 1120.2,250.2 1120.8,252.1 1121.5,251.6 1122.1,253.2 1122.7,251.4 1123.4,241.6 1124.0,250.1 1124.7,249.7 1125.3,252.6 1125.9,250.3 1126.6,252.2 1127.2,249.5 1127.8,250.3 1128.5,247.3 1129.1,254.7 1129.7,252.8 1130.4,250.6 1131.0,252.6 1131.6,247.9 1132.3,252.2 1132.9,243.3 1133.5,253.0 1134.2,253.2 1134.8,252.9 1135.5,251.5 1136.1,252.2 1136.7,252.7 1137.4,249.3 1138.0,250.0 1138.6,244.5 1139.3,251.2 1139.9,251.3 1140.5,250.6 1141.2,252.7 1141.8,250.0 1142.4,249.2 1143.1,248.9 1143.7,253.8 1144.3,251.6 1145.0,244.2 1145.6,242.5 1146.3,255.2 1146.9,245.8 1147.5,249.2 1148.2,251.1 1148.8,250.9 1149.4,253.2 1150.1,252.7 1150.7,251.7 1151.3,250.7 1152.0,243.1 1152.6,253.6 1153.2,252.5 1153.9,251.9 1154.5,253.1 1155.1,252.8 1155.8,253.2 1156.4,253.2 1157.1,246.1 1157.7,253.5 1158.3,253.8 1159.0,252.0 1159.6,250.0 1160.2,248.7 1160.9,255.7 1161.5,251.0 1162.1,253.2 1162.8,256.2 1163.4,254.4 1164.0,256.0 1164.7,252.3 1165.3,240.6 1165.9,242.6 1166.6,255.7 1167.2,256.4 1167.9,256.9 1168.5,255.5 1169.1,256.0 1169.8,258.2 1170.4,257.1 1171.0,259.5 1171.7,260.5 1172.3,250.3 1172.9,261.0 1173.6,261.2 1174.2,257.9 1174.8,255.2 1175.5,258.0 1176.1,256.9 1176.7,251.8 1177.4,257.7 1178.0,256.9 1178.7,255.9 1179.3,255.7 1179.9,256.5 1180.6,258.1 1181.2,230.4 1181.8,250.8 1182.5,255.3 1183.1,254.5 1183.7,247.1 1184.4,251.2 1185.0,249.1 1185.6,252.6 1186.3,253.2 1186.9,251.1 1187.5,254.1 1188.2,250.9 1188.8,253.5 1189.5,252.7 1190.1,251.4 1190.7,252.7 1191.4,251.9 1192.0,253.0 1192.6,253.8 1193.3,250.4 1193.9,246.3 1194.5,254.2 1195.2,251.3 1195.8,245.9 1196.4,250.8 1197.1,250.9 1197.7,248.4 1198.3,252.9 1199.0,248.6 1199.6,251.7 1200.3,253.6 1200.9,251.7 1201.5,244.0 1202.2,253.5 1202.8,247.7 1203.4,252.4 1204.1,251.4 1204.7,251.6 1205.3,241.9 1206.0,252.3 1206.6,240.3 1207.2,252.5 1207.9,248.3 1208.5,250.5 1209.1,250.0 1209.8,246.0 1210.4,250.3 1211.1,249.8 1211.7,251.2 1212.3,252.6 1213.0,250.8 1213.6,246.6 1214.2,253.7 1214.9,254.5 1215.5,243.9 1216.1,251.9 1216.8,242.1 1217.4,245.6 1218.0,253.7 1218.7,253.1 1219.3,249.5 1219.9,251.2 1220.6,253.4 1221.2,252.0 1221.9,252.6 1222.5,248.5 1223.1,250.9 1223.8,238.7 1224.4,247.2 1225.0,251.4 1225.7,249.9 1226.3,252.7 1226.9,256.8 1227.6,250.4 1228.2,253.7 1228.8,254.1 1229.5,255.6 1230.1,251.0 1230.8,251.9 1231.4,252.7 1232.0,251.3 1232.7,250.5 1233.3,247.1 1233.9,250.4 1234.6,239.8 1235.2,250.3 1235.8,252.1 1236.5,251.2 1237.1,250.4 1237.7,251.6 1238.4,245.3 1239.0,249.8 1239.6,251.3 1240.3,252.1 1240.9,253.9 1241.6,253.3 1242.2,254.1 1242.8,250.3 1243.5,246.6 1244.1,245.7 1244.7,250.3 1245.4,249.4 1246.0,251.0 1246.6,252.4 1247.3,249.5 1247.9,250.2 1248.5,252.3 1249.2,250.0 1249.8,252.1 1250.4,253.0 1251.1,247.7 1251.7,252.9 1252.4,251.3 1253.0,247.9 1253.6,253.5 1254.3,256.8 1254.9,257.3 1255.5,253.3 1256.2,253.2 1256.8,256.1 1257.4,254.2 1258.1,252.5 1258.7,250.0 1259.3,247.1 1260.0,252.2 1260.6,251.7 1261.2,250.7 1261.9,253.0 1262.5,253.9 1263.2,256.4 1263.8,251.0 1264.4,244.5 1265.1,252.0 1265.7,253.5 1266.3,253.6 1267.0,250.6 1267.6,251.5 1268.2,243.9 1268.9,251.2 1269.5,251.6 1270.1,246.4 1270.8,251.6 1271.4,244.7 1272.0,250.3 1272.7,251.6 1273.3,251.5 1274.0,245.8 1274.6,254.7 1275.2,256.2 1275.9,250.2 1276.5,255.2 1277.1,248.7 1277.8,249.4 1278.4,251.6 1279.0,252.4 1279.7,249.8 1280.3,243.2 1280.9,253.9 1281.6,253.8 1282.2,254.0 1282.8,252.5 1283.5,254.3 1284.1,252.5 1284.8,251.2 1285.4,252.2 1286.0,253.3 1286.7,250.2 1287.3,252.6 1287.9,254.6 1288.6,255.7 1289.2,253.9 1289.8,250.8 1290.5,245.2 1291.1,248.8 1291.7,242.7 1292.4,237.4 1293.0,252.6 1293.6,251.9 1294.3,247.7 1294.9,250.3 1295.6,246.0 1296.2,251.3 1296.8,249.8 1297.5,251.2 1298.1,252.7 1298.7,251.2 1299.4,247.4 1300.0,250.8 1300,297.5" />
<g stroke="#fff" stroke-width="1" shape-rendering="crispEdges"><line x1="29.5" x2="29.5" y1="59.0" y2="298.0"/><line x1="1300.5" x2="1300.5" y1="59.0" y2="298.0"/><line x1="23" x2="1307" y1="297.5" y2="297.5"/><line x1="23" x2="36" y1="282.5" y2="282.5"/><line x1="1294" x2="1307" y1="282.5" y2="282.5"/><line x1="26" x2="33" y1="290.5" y2="290.5"/><line x1="1297" x2="1304" y1="290.5" y2="290.5"/><line x1="23" x2="36" y1="267.5" y2="267.5"/><line x1="1294" x2="1307" y1="267.5" y2="267.5"/><line x1="26" x2="33" y1="275.5" y2="275.5"/><line x1="1297" x2="1304" y1="275.5" y2="275.5"/><line x1="23" x2="36" y1="252.5" y2="252.5"/><line x1="1294" x2="1307" y1="252.5" y2="252.5"/><line x1="26" x2="33" y1="260.5" y2="260.5"/><line x1="1297" x2="1304" y1="260.5" y2="260.5"/><line x1="23" x2="36" y1="238.5" y2="238.5"/><line x1="1294" x2="1307" y1="238.5" y2="238.5"/><line x1="26" x2="33" y1="245.5" y2="245.5"/><line x1="1297" x2="1304" y1="245.5" y2="245.5"/><line x1="23" x2="36" y1="223.5" y2="223.5"/><line x1="1294" x2="1307" y1="223.5" y2="223.5"/><line x1="26" x2="33" y1="230.5" y2="230.5"/><line x1="1297" x2="1304" y1="230.5" y2="230.5"/><line x1="23" x2="36" y1="208.5" y2="208.5"/><line x1="1294" x2="1307" y1="208.5" y2="208.5"/><line x1="26" x2="33" y1="215.5" y2="215.5"/><line x1="1297" x2="1304" y1="215.5" y2="215.5"/><line x1="23" x2="36" y1="193.5" y2="193.5"/><line x1="1294" x2="1307" y1="193.5" y2="193.5"/><line x1="26" x2="33" y1="200.5" y2="200.5"/><line x1="1297" x2="1304" y1="200.5" y2="200.5"/><line x1="23" x2="36" y1="178.5" y2="178.5"/><line x1="1294" x2="1307" y1="178.5" y2="178.5"/><line x1="26" x2="33" y1="185.5" y2="185.5"/><line x1="1297" x2="1304" y1="185.5" y2="185.5"/><line x1="23" x2="36" y1="163.5" y2="163.5"/><line x1="1294" x2="1307" y1="163.5" y2="163.5"/><line x1="26" x2="33" y1="171.5" y2="171.5"/><line x1="1297" x2="1304" y1="171.5" y2="171.5"/><line x1="23" x2="36" y1="148.5" y2="148.5"/><line x1="1294" x2="1307" y1="148.5" y2="148.5"/><line x1="26" x2="33" y1="156.5" y2="156.5"/><line x1="1297" x2="1304" y1="156.5" y2="156.5"/><line x1="23" x2="36" y1="133.5" y2="133.5"/><line x1="1294" x2="1307" y1="133.5" y2="133.5"/><line x1="26" x2="33" y1="141.5" y2="141.5"/><line x1="1297" x2="1304" y1="141.5" y2="141.5"/><line x1="23" x2="36" y1="119.5" y2="119.5"/><line x1="1294" x2="1307" y1="119.5" y2="119.5"/><line x1="26" x2="33" y1="126.5" y2="126.5"/><line x1="1297" x2="1304" y1="126.5" y2="126.5"/><line x1="23" x2="36" y1="104.5" y2="104.5"/><line x1="1294" x2="1307" y1="104.5" y2="104.5"/><line x1="26" x2="33" y1="111.5" y2="111.5"/><line x1="1297" x2="1304" y1="111.5" y2="111.5"/><line x1="23" x2="36" y1="89.5" y2="89.5"/><line x1="1294" x2="1307" y1="89.5" y2="89.5"/><line x1="26" x2="33" y1="96.5" y2="96.5"/><line x1="1297" x2="1304" y1="96.5" y2="96.5"/><line x1="23" x2="36" y1="74.5" y2="74.5"/><line x1="1294" x2="1307" y1="74.5" y2="74.5"/><line x1="26" x2="33" y1="81.5" y2="81.5"/><line x1="1297" x2="1304" y1="81.5" y2="81.5"/><line x1="23" x2="36" y1="59.5" y2="59.5"/><line x1="1294" x2="1307" y1="59.5" y2="59.5"/><line x1="26" x2="33" y1="66.5" y2="66.5"/><line x1="1297" x2="1304" y1="66.5" y2="66.5"/><line x1="32.5" x2="32.5" y1="295.0" y2="297.0"/><line x1="95.5" x2="95.5" y1="295.0" y2="297.0"/><line x1="159.5" x2="159.5" y1="292.0" y2="297.0"/><line x1="222.5" x2="222.5" y1="295.0" y2="297.0"/><line x1="286.5" x2="286.5" y1="295.0" y2="297.0"/><line x1="349.5" x2="349.5" y1="292.0" y2="297.0"/><line x1="413.5" x2="413.5" y1="295.0" y2="297.0"/><line x1="476.5" x2="476.5" y1="295.0" y2="297.0"/><line x1="540.5" x2="540.5" y1="292.0" y2="297.0"/><line x1="603.5" x2="603.5" y1="295.0" y2="297.0"/><line x1="667.5" x2="667.5" y1="295.0" y2="297.0"/><line x1="730.5" x2="730.5" y1="292.0" y2="297.0"/><line x1="794.5" x2="794.5" y1="295.0" y2="297.0"/><line x1="857.5" x2="857.5" y1="295.0" y2="297.0"/><line x1="921.5" x2="921.5" y1="292.0" y2="297.0"/><line x1="985.5" x2="985.5" y1="295.0" y2="297.0"/><line x1="1048.5" x2="1048.5" y1="295.0" y2="297.0"/><line x1="1112.5" x2="1112.5" y1="292.0" y2="297.0"/><line x1="1175.5" x2="1175.5" y1="295.0" y2="297.0"/><line x1="1239.5" x2="1239.5" y1="295.0" y2="297.0"/></g>
<filter id="gf45" x="0" y="0" width="1" height="1"><feOffset dx="0" dy="0"/></filter><g filter="url(#gf45)"><text x="17.6" y="301.0" font-size="12.5" font-family='"Liberation Sans",sans-serif' fill="#fff" text-anchor="end" textLength="4.6" lengthAdjust="spacingAndGlyphs" >0</text><text x="1313" y="301.0" font-size="12.5" font-family='"Liberation Sans",sans-serif' fill="#fff" textLength="4.6" lengthAdjust="spacingAndGlyphs" >0</text><text x="17.6" y="286.0" font-size="12.5" font-family='"Liberation Sans",sans-serif' fill="#fff" text-anchor="end" textLength="4.6" lengthAdjust="spacingAndGlyphs" >1</text><text x="1313" y="286.0" font-size="12.5" font-family='"Liberation Sans",sans-serif' fill="#fff" textLength="4.6" lengthAdjust="spacingAndGlyphs" >1</text><text x="17.6" y="271.0" font-size="12.5" font-family='"Liberation Sans",sans-serif' fill="#fff" text-anchor="end" textLength="4.6" lengthAdjust="spacingAndGlyphs" >2</text><text x="1313" y="271.0" font-size="12.5" font-family='"Liberation Sans",sans-serif' fill="#fff" textLength="4.6" lengthAdjust="spacingAndGlyphs" >2</text><text x="17.6" y="256.0" font-size="12.5" font-family='"Liberation Sans",sans-serif' fill="#fff" text-anchor="end" textLength="4.6" lengthAdjust="spacingAndGlyphs" >3</text><text x="1313" y="256.0" font-size="12.5" font-family='"Liberation Sans",sans-serif' fill="#fff" textLength="4.6" lengthAdjust="spacingAndGlyphs" >3</text><text x="17.6" y="242.0" font-size="12.5" font-family='"Liberation Sans",sans-serif' fill="#fff" text-anchor="end" textLength="4.6" lengthAdjust="spacingAndGlyphs" >4</text><text x="1313" y="242.0" font-size="12.5" font-family='"Liberation Sans",sans-serif' fill="#fff" textLength="4.6" lengthAdjust="spacingAndGlyphs" >4</text><text x="17.6" y="227.0" font-size="12.5" font-family='"Liberation Sans",sans-serif' fill="#fff" text-anchor="end" textLength="4.6" lengthAdjust="spacingAndGlyphs" >5</text><text x="1313" y="227.0" font-size="12.5" font-family='"Liberation Sans",sans-serif' fill="#fff" textLength="4.6" lengthAdjust="spacingAndGlyphs" >5</text><text x="17.6" y="212.0" font-size="12.5" font-family='"Liberation Sans",sans-serif' fill="#fff" text-anchor="end" textLength="4.6" lengthAdjust="spacingAndGlyphs" >6</text><text x="1313" y="212.0" font-size="12.5" font-family='"Liberation Sans",sans-serif' fill="#fff" textLength="4.6" lengthAdjust="spacingAndGlyphs" >6</text><text x="17.6" y="197.0" font-size="12.5" font-family='"Liberation Sans",sans-serif' fill="#fff" text-anchor="end" textLength="4.6" lengthAdjust="spacingAndGlyphs" >7</text><text x="1313" y="197.0" font-size="12.5" font-family='"Liberation Sans",sans-serif' fill="#fff" textLength="4.6" lengthAdjust="spacingAndGlyphs" >7</text><text x="17.6" y="182.0" font-size="12.5" font-family='"Liberation Sans",sans-serif' fill="#fff" text-anchor="end" textLength="4.6" lengthAdjust="spacingAndGlyphs" >8</text><text x="1313" y="182.0" font-size="12.5" font-family='"Liberation Sans",sans-serif' fill="#fff" textLength="4.6" lengthAdjust="spacingAndGlyphs" >8</text><text x="17.6" y="167.0" font-size="12.5" font-family='"Liberation Sans",sans-serif' fill="#fff" text-anchor="end" textLength="4.6" lengthAdjust="spacingAndGlyphs" >9</text><text x="1313" y="167.0" font-size="12.5" font-family='"Liberation Sans",sans-serif' fill="#fff" textLength="4.6" lengthAdjust="spacingAndGlyphs" >9</text><text x="17.6" y="152.0" font-size="12.5" font-family='"Liberation Sans",sans-serif' fill="#fff" text-anchor="end" textLength="10.6" lengthAdjust="spacingAndGlyphs" >10</text><text x="1313" y="152.0" font-size="12.5" font-family='"Liberation Sans",sans-serif' fill="#fff" textLength="10.6" lengthAdjust="spacingAndGlyphs" >10</text><text x="17.6" y="137.0" font-size="12.5" font-family='"Liberation Sans",sans-serif' fill="#fff" text-anchor="end" textLength="10.6" lengthAdjust="spacingAndGlyphs" >11</text><text x="1313" y="137.0" font-size="12.5" font-family='"Liberation Sans",sans-serif' fill="#fff" textLength="10.6" lengthAdjust="spacingAndGlyphs" >11</text><text x="17.6" y="123.0" font-size="12.5" font-family='"Liberation Sans",sans-serif' fill="#fff" text-anchor="end" textLength="10.6" lengthAdjust="spacingAndGlyphs" >12</text><text x="1313" y="123.0" font-size="12.5" font-family='"Liberation Sans",sans-serif' fill="#fff" textLength="10.6" lengthAdjust="spacingAndGlyphs" >12</text><text x="17.6" y="108.0" font-size="12.5" font-family='"Liberation Sans",sans-serif' fill="#fff" text-anchor="end" textLength="10.6" lengthAdjust="spacingAndGlyphs" >13</text><text x="1313" y="108.0" font-size="12.5" font-family='"Liberation Sans",sans-serif' fill="#fff" textLength="10.6" lengthAdjust="spacingAndGlyphs" >13</text><text x="17.6" y="93.0" font-size="12.5" font-family='"Liberation Sans",sans-serif' fill="#fff" text-anchor="end" textLength="10.6" lengthAdjust="spacingAndGlyphs" >14</text><text x="1313" y="93.0" font-size="12.5" font-family='"Liberation Sans",sans-serif' fill="#fff" textLength="10.6" lengthAdjust="spacingAndGlyphs" >14</text><text x="17.6" y="78.0" font-size="12.5" font-family='"Liberation Sans",sans-serif' fill="#fff" text-anchor="end" textLength="10.6" lengthAdjust="spacingAndGlyphs" >15</text><text x="1313" y="78.0" font-size="12.5" font-family='"Liberation Sans",sans-serif' fill="#fff" textLength="10.6" lengthAdjust="spacingAndGlyphs" >15</text><text x="17.6" y="63.0" font-size="12.5" font-family='"Liberation Sans",sans-serif' fill="#fff" text-anchor="end" textLength="10.6" lengthAdjust="spacingAndGlyphs" >16</text><text x="1313" y="63.0" font-size="12.5" font-family='"Liberation Sans",sans-serif' fill="#fff" textLength="10.6" lengthAdjust="spacingAndGlyphs" >16</text><text x="159.0" y="310.0" font-size="12.5" font-family='"Liberation Sans",sans-serif' fill="#fff" text-anchor="middle" textLength="34.6" lengthAdjust="spacingAndGlyphs" >273000</text><text x="349.0" y="310.0" font-size="12.5" font-family='"Liberation Sans",sans-serif' fill="#fff" text-anchor="middle" textLength="34.6" lengthAdjust="spacingAndGlyphs" >273300</text><text x="540.0" y="310.0" font-size="12.5" font-family='"Liberation Sans",sans-serif' fill="#fff" text-anchor="middle" textLength="34.6" lengthAdjust="spacingAndGlyphs" >273600</text><text x="730.0" y="310.0" font-size="12.5" font-family='"Liberation Sans",sans-serif' fill="#fff" text-anchor="middle" textLength="34.6" lengthAdjust="spacingAndGlyphs" >273900</text><text x="921.0" y="310.0" font-size="12.5" font-family='"Liberation Sans",sans-serif' fill="#fff" text-anchor="middle" textLength="34.6" lengthAdjust="spacingAndGlyphs" >274200</text><text x="1112.0" y="310.0" font-size="12.5" font-family='"Liberation Sans",sans-serif' fill="#fff" text-anchor="middle" textLength="34.6" lengthAdjust="spacingAndGlyphs" >274500</text></g>
</svg>
<div class="big" style="top:46.3px">CPU</div>
<div class="div" style="top:318px"></div>
<div class="panel" style="top:327px;height:311px"></div>
<div class="leg" style="top:327px;height:311px"></div>
<svg class="chart" style="left:1px;top:327px" width="1329" height="311" viewBox="1 327 1329 311">
<defs><linearGradient id="pg327" x1="0" y1="0" x2="0" y2="1"><stop offset="0" stop-color="#4f4f4f"/><stop offset="1" stop-color="#2b2b2b"/></linearGradient></defs>
<rect x="30" y="335.0" width="1270" height="282.0" fill="url(#pg327)"/>
<rect x="30" y="477.2" width="1270" height="140.3" fill="#c9d6aa"/>
<rect x="30" y="475.7" width="1270" height="1.5" fill="#000" opacity="0.18"/>
<g stroke-width="1" stroke-dasharray="1 2" shape-rendering="crispEdges"><line x1="38" x2="1293" y1="604.5" y2="604.5" stroke="rgba(255,255,255,0.34)"/><line x1="38" x2="1293" y1="592.5" y2="592.5" stroke="rgba(255,255,255,0.34)"/><line x1="38" x2="1293" y1="579.5" y2="579.5" stroke="rgba(255,255,255,0.34)"/><line x1="38" x2="1293" y1="567.5" y2="567.5" stroke="rgba(255,255,255,0.34)"/><line x1="38" x2="1293" y1="554.5" y2="554.5" stroke="rgba(255,255,255,0.34)"/><line x1="38" x2="1293" y1="542.5" y2="542.5" stroke="rgba(255,255,255,0.34)"/><line x1="38" x2="1293" y1="529.5" y2="529.5" stroke="rgba(255,255,255,0.34)"/><line x1="38" x2="1293" y1="517.5" y2="517.5" stroke="rgba(255,255,255,0.34)"/><line x1="38" x2="1293" y1="504.5" y2="504.5" stroke="rgba(255,255,255,0.34)"/><line x1="38" x2="1293" y1="492.5" y2="492.5" stroke="rgba(255,255,255,0.34)"/><line x1="38" x2="1293" y1="479.5" y2="479.5" stroke="rgba(255,255,255,0.34)"/><line x1="38" x2="1293" y1="466.5" y2="466.5" stroke="rgba(255,255,255,0.34)"/><line x1="38" x2="1293" y1="454.5" y2="454.5" stroke="rgba(255,255,255,0.34)"/><line x1="38" x2="1293" y1="441.5" y2="441.5" stroke="rgba(255,255,255,0.34)"/><line x1="38" x2="1293" y1="429.5" y2="429.5" stroke="rgba(255,255,255,0.34)"/><line x1="38" x2="1293" y1="416.5" y2="416.5" stroke="rgba(255,255,255,0.34)"/><line x1="38" x2="1293" y1="404.5" y2="404.5" stroke="rgba(255,255,255,0.34)"/><line x1="38" x2="1293" y1="391.5" y2="391.5" stroke="rgba(255,255,255,0.34)"/><line x1="38" x2="1293" y1="379.5" y2="379.5" stroke="rgba(255,255,255,0.34)"/><line x1="38" x2="1293" y1="366.5" y2="366.5" stroke="rgba(255,255,255,0.34)"/><line x1="38" x2="1293" y1="354.5" y2="354.5" stroke="rgba(255,255,255,0.34)"/><line x1="38" x2="1293" y1="341.5" y2="341.5" stroke="rgba(255,255,255,0.34)"/><line y1="341.0" y2="617.0" x1="32.5" x2="32.5" stroke="rgba(255,255,255,0.055)"/><line y1="341.0" y2="617.0" x1="95.5" x2="95.5" stroke="rgba(255,255,255,0.055)"/><line y1="341.0" y2="617.0" x1="159.5" x2="159.5" stroke="rgba(255,255,255,0.34)"/><line y1="341.0" y2="617.0" x1="222.5" x2="222.5" stroke="rgba(255,255,255,0.055)"/><line y1="341.0" y2="617.0" x1="286.5" x2="286.5" stroke="rgba(255,255,255,0.055)"/><line y1="341.0" y2="617.0" x1="349.5" x2="349.5" stroke="rgba(255,255,255,0.34)"/><line y1="341.0" y2="617.0" x1="413.5" x2="413.5" stroke="rgba(255,255,255,0.055)"/><line y1="341.0" y2="617.0" x1="476.5" x2="476.5" stroke="rgba(255,255,255,0.055)"/><line y1="341.0" y2="617.0" x1="540.5" x2="540.5" stroke="rgba(255,255,255,0.34)"/><line y1="341.0" y2="617.0" x1="603.5" x2="603.5" stroke="rgba(255,255,255,0.055)"/><line y1="341.0" y2="617.0" x1="667.5" x2="667.5" stroke="rgba(255,255,255,0.055)"/><line y1="341.0" y2="617.0" x1="730.5" x2="730.5" stroke="rgba(255,255,255,0.34)"/><line y1="341.0" y2="617.0" x1="794.5" x2="794.5" stroke="rgba(255,255,255,0.055)"/><line y1="341.0" y2="617.0" x1="857.5" x2="857.5" stroke="rgba(255,255,255,0.055)"/><line y1="341.0" y2="617.0" x1="921.5" x2="921.5" stroke="rgba(255,255,255,0.34)"/><line y1="341.0" y2="617.0" x1="985.5" x2="985.5" stroke="rgba(255,255,255,0.055)"/><line y1="341.0" y2="617.0" x1="1048.5" x2="1048.5" stroke="rgba(255,255,255,0.055)"/><line y1="341.0" y2="617.0" x1="1112.5" x2="1112.5" stroke="rgba(255,255,255,0.34)"/><line y1="341.0" y2="617.0" x1="1175.5" x2="1175.5" stroke="rgba(255,255,255,0.055)"/><line y1="341.0" y2="617.0" x1="1239.5" x2="1239.5" stroke="rgba(255,255,255,0.055)"/></g>
<polygon fill="#8a8c62" points="30,617.5 30.0,533.8 30.6,529.3 31.3,526.5 31.9,534.8 32.5,532.9 33.2,534.4 33.8,534.5 34.4,531.7 35.1,531.7 35.7,535.3 36.4,533.9 37.0,534.6 37.6,534.0 38.3,536.8 38.9,530.6 39.5,534.5 40.2,532.8 40.8,534.4 41.4,535.7 42.1,532.2 42.7,536.2 43.3,533.6 44.0,530.1 44.6,535.6 45.2,534.0 45.9,535.2 46.5,534.6 47.2,534.5 47.8,531.5 48.4,534.2 49.1,535.4 49.7,524.8 50.3,525.9 51.0,527.7 51.6,534.1 52.2,536.8 52.9,529.7 53.5,537.0 54.1,525.1 54.8,534.0 55.4,533.8 56.0,534.7 56.7,529.6 57.3,527.5 58.0,532.6 58.6,524.0 59.2,532.4 59.9,535.4 60.5,525.1 61.1,530.1 61.8,531.9 62.4,527.0 63.0,533.8 63.7,533.8 64.3,534.9 64.9,535.5 65.6,533.8 66.2,535.3 66.8,536.7 67.5,535.6 68.1,533.9 68.8,533.9 69.4,533.7 70.0,525.3 70.7,536.0 71.3,533.3 71.9,525.4 72.6,537.6 73.2,535.3 73.8,533.7 74.5,534.6 75.1,534.2 75.7,529.0 76.4,535.8 77.0,525.6 77.6,534.6 78.3,536.9 78.9,536.6 79.6,533.1 80.2,535.2 80.8,531.5 81.5,535.6 82.1,535.1 82.7,537.1 83.4,530.7 84.0,530.4 84.6,534.9 85.3,532.9 85.9,526.9 86.5,531.0 87.2,536.1 87.8,534.9 88.4,535.3 89.1,533.8 89.7,527.4 90.4,533.6 91.0,527.9 91.6,532.6 92.3,536.3 92.9,533.7 93.5,534.1 94.2,535.3 94.8,530.6 95.4,535.2 96.1,534.5 96.7,535.9 97.3,534.5 98.0,533.5 98.6,533.2 99.2,536.4 99.9,534.6 100.5,534.6 101.2,533.4 101.8,537.3 102.4,535.9 103.1,535.7 103.7,533.4 104.3,534.9 105.0,528.4 105.6,537.8 106.2,538.3 106.9,533.5 107.5,536.9 108.1,537.0 108.8,536.5 109.4,531.0 110.1,535.4 110.7,535.3 111.3,533.7 112.0,535.0 112.6,526.9 113.2,537.8 113.9,539.0 114.5,536.5 115.1,536.1 115.8,532.2 116.4,534.8 117.0,535.5 117.7,535.8 118.3,538.2 118.9,536.1 119.6,524.8 120.2,537.7 120.9,532.1 121.5,538.8 122.1,533.5 122.8,534.7 123.4,546.7 124.0,536.1 124.7,534.1 125.3,537.9 125.9,535.6 126.6,528.8 127.2,529.7 127.8,535.3 128.5,539.5 129.1,540.1 129.7,550.8 130.4,537.3 131.0,531.0 131.7,538.2 132.3,537.8 132.9,536.1 133.6,537.3 134.2,536.6 134.8,526.2 135.5,561.3 136.1,537.7 136.7,538.9 137.4,526.4 138.0,535.3 138.6,535.1 139.3,529.0 139.9,539.2 140.5,554.4 141.2,537.5 141.8,535.0 142.5,535.9 143.1,528.3 143.7,533.9 144.4,539.0 145.0,536.2 145.6,541.6 146.3,539.2 146.9,537.6 147.5,537.1 148.2,539.9 148.8,540.0 149.4,533.8 150.1,540.6 150.7,536.1 151.3,539.1 152.0,534.9 152.6,516.1 153.3,537.8 153.9,541.5 154.5,541.2 155.2,541.3 155.8,543.0 156.4,536.1 157.1,539.7 157.7,539.2 158.3,539.1 159.0,534.7 159.6,533.0 160.2,541.7 160.9,540.5 161.5,541.0 162.1,542.9 162.8,539.4 163.4,543.3 164.1,542.1 164.7,542.8 165.3,542.4 166.0,556.4 166.6,540.8 167.2,539.4 167.9,543.5 168.5,544.7 169.1,539.3 169.8,537.9 170.4,541.5 171.0,542.7 171.7,538.9 172.3,541.1 172.9,542.1 173.6,535.6 174.2,540.4 174.9,542.4 175.5,543.9 176.1,542.5 176.8,544.9 177.4,545.9 178.0,535.9 178.7,539.2 179.3,532.5 179.9,555.8 180.6,544.8 181.2,542.5 181.8,543.6 182.5,541.8 183.1,541.3 183.7,541.1 184.4,531.3 185.0,544.7 185.7,540.4 186.3,539.4 186.9,543.0 187.6,544.4 188.2,539.1 188.8,546.6 189.5,542.0 190.1,541.0 190.7,545.6 191.4,546.6 192.0,545.1 192.6,548.0 193.3,540.9 193.9,546.4 194.5,542.4 195.2,547.9 195.8,545.3 196.5,544.4 197.1,544.0 197.7,548.5 198.4,548.8 199.0,548.1 199.6,572.2 200.3,546.6 200.9,545.4 201.5,537.9 202.2,545.4 202.8,544.9 203.4,547.3 204.1,548.2 204.7,545.9 205.3,546.2 206.0,543.7 206.6,546.6 207.3,547.9 207.9,547.3 208.5,545.1 209.2,547.0 209.8,546.1 210.4,546.6 211.1,566.8 211.7,540.5 212.3,545.7 213.0,545.0 213.6,545.4 214.2,546.6 214.9,558.0 215.5,548.6 216.1,548.1 216.8,549.2 217.4,546.7 218.1,547.8 218.7,547.4 219.3,547.1 220.0,571.1 220.6,542.8 221.2,559.7 221.9,547.9 222.5,547.9 223.1,549.3 223.8,548.6 224.4,547.1 225.0,541.7 225.7,541.5 226.3,542.2 226.9,540.0 227.6,540.6 228.2,542.3 228.9,547.6 229.5,548.7 230.1,547.9 230.8,539.7 231.4,549.5 232.0,548.8 232.7,548.8 233.3,549.1 233.9,546.3 234.6,544.3 235.2,548.7 235.8,548.0 236.5,546.8 237.1,546.0 237.7,546.3 238.4,545.4 239.0,548.1 239.7,547.3 240.3,541.4 240.9,547.8 241.6,539.5 242.2,549.3 242.8,547.1 243.5,549.3 244.1,548.0 244.7,548.1 245.4,547.9 246.0,540.4 246.6,548.1 247.3,563.9 247.9,547.8 248.5,546.8 249.2,545.2 249.8,548.8 250.5,536.0 251.1,542.2 251.7,541.2 252.4,544.0 253.0,548.8 253.6,547.9 254.3,550.1 254.9,547.9 255.5,546.1 256.2,549.1 256.8,548.2 257.4,549.0 258.1,547.8 258.7,548.1 259.3,541.5 260.0,544.4 260.6,575.0 261.3,545.8 261.9,542.7 262.5,546.6 263.2,547.7 263.8,540.2 264.4,548.4 265.1,547.8 265.7,544.5 266.3,547.5 267.0,548.1 267.6,541.7 268.2,546.1 268.9,542.7 269.5,549.1 270.2,547.9 270.8,548.9 271.4,549.1 272.1,546.5 272.7,542.9 273.3,549.1 274.0,544.2 274.6,544.0 275.2,541.4 275.9,550.0 276.5,549.6 277.1,550.3 277.8,551.4 278.4,551.1 279.0,550.5 279.7,544.6 280.3,548.8 281.0,547.9 281.6,547.7 282.2,546.7 282.9,548.2 283.5,545.8 284.1,547.3 284.8,548.2 285.4,546.7 286.0,549.2 286.7,548.5 287.3,546.9 287.9,546.2 288.6,545.9 289.2,548.0 289.8,547.3 290.5,540.8 291.1,549.3 291.8,547.8 292.4,548.7 293.0,549.6 293.7,541.7 294.3,547.8 294.9,547.3 295.6,550.5 296.2,549.3 296.8,549.9 297.5,548.7 298.1,547.5 298.7,542.0 299.4,542.1 300.0,548.9 300.6,544.3 301.3,547.2 301.9,548.9 302.6,551.0 303.2,550.4 303.8,545.7 304.5,544.9 305.1,549.0 305.7,540.5 306.4,548.3 307.0,542.3 307.6,549.3 308.3,549.4 308.9,548.1 309.5,549.0 310.2,550.2 310.8,548.7 311.4,548.0 312.1,549.7 312.7,548.1 313.4,549.2 314.0,548.7 314.6,548.2 315.3,550.4 315.9,545.4 316.5,547.4 317.2,548.7 317.8,551.5 318.4,551.0 319.1,550.6 319.7,542.5 320.3,542.5 321.0,547.5 321.6,550.5 322.2,548.9 322.9,547.4 323.5,550.3 324.2,549.5 324.8,548.3 325.4,546.9 326.1,549.5 326.7,549.0 327.3,547.2 328.0,548.2 328.6,540.3 329.2,549.1 329.9,546.6 330.5,550.6 331.1,550.6 331.8,549.1 332.4,548.1 333.0,548.3 333.7,550.9 334.3,549.7 335.0,545.4 335.6,547.9 336.2,550.1 336.9,545.9 337.5,549.6 338.1,544.0 338.8,548.9 339.4,547.2 340.0,548.3 340.7,540.5 341.3,548.7 341.9,550.4 342.6,548.9 343.2,549.9 343.8,547.4 344.5,547.6 345.1,549.0 345.8,546.6 346.4,550.0 347.0,541.5 347.7,550.0 348.3,549.5 348.9,546.1 349.6,548.6 350.2,548.8 350.8,548.8 351.5,547.8 352.1,546.1 352.7,550.2 353.4,544.6 354.0,547.9 354.6,550.3 355.3,551.0 355.9,550.5 356.6,547.3 357.2,547.7 357.8,550.9 358.5,547.4 359.1,549.9 359.7,545.8 360.4,549.5 361.0,546.9 361.6,550.1 362.3,543.8 362.9,549.2 363.5,547.2 364.2,545.3 364.8,536.0 365.4,548.3 366.1,548.0 366.7,547.5 367.4,550.3 368.0,539.9 368.6,548.6 369.3,549.4 369.9,545.0 370.5,549.8 371.2,548.1 371.8,547.5 372.4,549.3 373.1,549.1 373.7,550.4 374.3,547.6 375.0,549.7 375.6,544.2 376.2,549.7 376.9,548.8 377.5,549.8 378.2,549.9 378.8,547.3 379.4,546.8 380.1,548.2 380.7,548.5 381.3,549.5 382.0,546.8 382.6,542.0 383.2,548.8 383.9,550.0 384.5,547.2 385.1,550.4 385.8,546.0 386.4,546.6 387.0,548.4 387.7,548.2 388.3,548.2 389.0,549.0 389.6,549.3 390.2,549.2 390.9,550.4 391.5,544.3 392.1,543.5 392.8,548.2 393.4,549.3 394.0,549.1 394.7,550.1 395.3,548.9 395.9,548.9 396.6,546.9 397.2,550.1 397.8,544.6 398.5,549.7 399.1,549.5 399.8,550.6 400.4,550.6 401.0,549.9 401.7,551.6 402.3,549.8 402.9,548.9 403.6,547.4 404.2,549.3 404.8,551.6 405.5,545.3 406.1,550.6 406.7,546.2 407.4,547.5 408.0,549.2 408.6,550.6 409.3,548.4 409.9,549.7 410.6,547.8 411.2,549.0 411.8,548.1 412.5,545.2 413.1,549.7 413.7,550.2 414.4,549.2 415.0,549.1 415.6,549.2 416.3,551.6 416.9,546.8 417.5,549.6 418.2,549.2 418.8,549.6 419.4,550.1 420.1,549.0 420.7,546.7 421.4,549.8 422.0,549.8 422.6,543.4 423.3,545.3 423.9,547.7 424.5,548.2 425.2,550.4 425.8,544.5 426.4,549.7 427.1,550.0 427.7,550.8 428.3,533.6 429.0,544.9 429.6,549.1 430.3,550.6 430.9,551.4 431.5,550.0 432.2,547.8 432.8,549.7 433.4,550.7 434.1,549.4 434.7,547.7 435.3,546.5 436.0,546.9 436.6,545.3 437.2,549.5 437.9,549.6 438.5,548.2 439.1,541.4 439.8,542.4 440.4,550.3 441.1,550.4 441.7,546.0 442.3,546.9 443.0,547.4 443.6,550.4 444.2,544.7 444.9,548.5 445.5,549.4 446.1,550.8 446.8,544.8 447.4,550.7 448.0,549.8 448.7,550.0 449.3,550.1 449.9,551.8 450.6,551.9 451.2,542.8 451.9,549.6 452.5,551.1 453.1,547.9 453.8,546.3 454.4,543.4 455.0,542.9 455.7,539.6 456.3,539.3 456.9,538.2 457.6,538.1 458.2,539.8 458.8,533.1 459.5,539.7 460.1,528.0 460.7,536.6 461.4,535.9 462.0,536.3 462.7,540.9 463.3,540.0 463.9,526.0 464.6,524.2 465.2,535.4 465.8,532.3 466.5,526.9 467.1,535.5 467.7,539.3 468.4,539.0 469.0,535.0 469.6,533.0 470.3,538.6 470.9,538.1 471.5,524.6 472.2,530.0 472.8,536.2 473.5,541.5 474.1,539.4 474.7,537.5 475.4,538.1 476.0,538.8 476.6,537.0 477.3,528.3 477.9,540.5 478.5,535.1 479.2,541.3 479.8,534.6 480.4,540.8 481.1,541.1 481.7,539.0 482.3,539.4 483.0,537.1 483.6,538.5 484.3,536.6 484.9,539.1 485.5,540.2 486.2,537.2 486.8,534.5 487.4,536.3 488.1,534.2 488.7,531.7 489.3,540.7 490.0,540.9 490.6,540.7 491.2,538.9 491.9,531.8 492.5,527.7 493.1,539.2 493.8,537.6 494.4,526.7 495.1,539.2 495.7,538.2 496.3,528.1 497.0,533.4 497.6,539.0 498.2,537.9 498.9,540.2 499.5,538.1 500.1,538.1 500.8,536.5 501.4,532.9 502.0,532.4 502.7,540.4 503.3,538.1 503.9,539.2 504.6,538.8 505.2,539.0 505.9,536.6 506.5,540.4 507.1,542.1 507.8,540.1 508.4,539.2 509.0,538.9 509.7,537.8 510.3,541.1 510.9,535.1 511.6,540.8 512.2,526.4 512.8,538.9 513.5,540.5 514.1,536.3 514.7,534.6 515.4,540.7 516.0,562.1 516.7,532.0 517.3,535.9 517.9,528.4 518.6,540.7 519.2,540.2 519.8,540.4 520.5,539.4 521.1,539.5 521.7,539.5 522.4,539.9 523.0,541.6 523.6,541.6 524.3,538.7 524.9,536.1 525.5,539.6 526.2,536.4 526.8,534.6 527.5,530.3 528.1,541.3 528.7,542.0 529.4,539.8 530.0,539.9 530.6,541.0 531.3,542.0 531.9,542.9 532.5,541.8 533.2,540.2 533.8,542.5 534.4,541.3 535.1,539.6 535.7,525.9 536.3,536.0 537.0,536.7 537.6,540.2 538.3,524.4 538.9,535.0 539.5,541.8 540.2,542.0 540.8,541.1 541.4,537.1 542.1,540.0 542.7,536.3 543.3,539.2 544.0,539.3 544.6,535.4 545.2,535.7 545.9,540.3 546.5,534.4 547.1,540.4 547.8,541.0 548.4,539.8 549.1,538.0 549.7,535.2 550.3,527.8 551.0,538.5 551.6,538.1 552.2,532.8 552.9,538.9 553.5,540.7 554.1,540.6 554.8,532.0 555.4,534.3 556.0,536.9 556.7,537.3 557.3,539.3 557.9,541.7 558.6,539.6 559.2,540.8 559.9,534.9 560.5,540.8 561.1,539.0 561.8,536.6 562.4,541.0 563.0,541.0 563.7,540.6 564.3,526.4 564.9,539.0 565.6,541.3 566.2,537.1 566.8,539.7 567.5,538.7 568.1,539.0 568.7,538.7 569.4,539.2 570.0,539.4 570.7,539.7 571.3,539.9 571.9,532.0 572.6,532.1 573.2,540.2 573.8,530.4 574.5,528.7 575.1,540.6 575.7,538.1 576.4,539.3 577.0,537.4 577.6,538.1 578.3,532.2 578.9,531.9 579.5,541.2 580.2,539.2 580.8,536.4 581.5,539.5 582.1,538.5 582.7,538.3 583.4,539.2 584.0,535.6 584.6,540.2 585.3,537.7 585.9,540.5 586.5,540.6 587.2,539.5 587.8,535.4 588.4,533.3 589.1,539.9 589.7,540.6 590.4,532.4 591.0,534.1 591.6,536.5 592.3,533.3 592.9,536.7 593.5,527.6 594.2,539.8 594.8,539.9 595.4,538.2 596.1,541.4 596.7,538.1 597.3,539.2 598.0,537.5 598.6,538.4 599.2,538.2 599.9,532.3 600.5,538.4 601.2,534.4 601.8,539.3 602.4,539.5 603.1,540.2 603.7,531.6 604.3,539.9 605.0,526.7 605.6,539.8 606.2,539.7 606.9,529.6 607.5,529.3 608.1,540.0 608.8,540.0 609.4,540.3 610.0,538.8 610.7,539.6 611.3,534.6 612.0,535.7 612.6,538.9 613.2,533.2 613.9,539.8 614.5,538.7 615.1,533.3 615.8,540.8 616.4,540.2 617.0,535.9 617.7,541.8 618.3,540.3 618.9,537.3 619.6,540.4 620.2,539.4 620.8,540.5 621.5,540.0 622.1,541.0 622.8,539.1 623.4,538.1 624.0,536.1 624.7,540.0 625.3,539.5 625.9,533.9 626.6,537.1 627.2,537.7 627.8,540.0 628.5,540.7 629.1,534.1 629.7,539.8 630.4,539.9 631.0,541.4 631.6,528.3 632.3,540.4 632.9,540.2 633.6,533.6 634.2,540.5 634.8,542.8 635.5,560.6 636.1,531.9 636.7,537.9 637.4,558.3 638.0,539.7 638.6,533.9 639.3,525.8 639.9,540.8 640.5,534.0 641.2,538.7 641.8,542.7 642.4,540.4 643.1,536.6 643.7,533.1 644.4,539.6 645.0,538.4 645.6,534.1 646.3,540.5 646.9,541.1 647.5,525.6 648.2,539.8 648.8,541.7 649.4,540.8 650.1,541.5 650.7,538.8 651.3,526.4 652.0,529.9 652.6,537.3 653.2,530.8 653.9,536.8 654.5,537.8 655.2,540.3 655.8,540.0 656.4,537.4 657.1,538.8 657.7,530.6 658.3,539.3 659.0,528.0 659.6,537.4 660.2,539.4 660.9,530.0 661.5,539.3 662.1,537.4 662.8,537.8 663.4,537.2 664.0,517.2 664.7,538.4 665.3,539.8 666.0,538.0 666.6,539.5 667.2,534.5 667.9,542.5 668.5,537.9 669.1,539.7 669.8,538.0 670.4,542.4 671.0,541.4 671.7,536.3 672.3,535.9 672.9,537.4 673.6,539.7 674.2,537.0 674.8,534.7 675.5,540.1 676.1,540.9 676.8,539.4 677.4,537.8 678.0,540.6 678.7,533.8 679.3,541.0 679.9,528.6 680.6,540.9 681.2,534.7 681.8,539.1 682.5,536.3 683.1,535.9 683.7,537.5 684.4,539.0 685.0,540.3 685.6,539.9 686.3,537.8 686.9,542.2 687.6,521.5 688.2,536.1 688.8,536.0 689.5,541.5 690.1,541.1 690.7,538.4 691.4,528.2 692.0,537.0 692.6,536.6 693.3,538.1 693.9,535.3 694.5,536.1 695.2,532.6 695.8,537.0 696.4,536.1 697.1,540.9 697.7,538.6 698.4,540.3 699.0,540.7 699.6,535.6 700.3,537.6 700.9,534.7 701.5,533.0 702.2,530.0 702.8,531.2 703.4,536.6 704.1,540.3 704.7,525.6 705.3,538.5 706.0,542.0 706.6,533.7 707.2,539.5 707.9,543.0 708.5,540.2 709.2,543.2 709.8,539.6 710.4,528.8 711.1,540.3 711.7,539.7 712.3,528.3 713.0,538.4 713.6,541.6 714.2,538.0 714.9,539.2 715.5,539.5 716.1,521.0 716.8,535.0 717.4,537.4 718.0,540.7 718.7,540.8 719.3,530.0 720.0,537.5 720.6,540.4 721.2,528.9 721.9,533.1 722.5,540.3 723.1,535.5 723.8,534.4 724.4,539.0 725.0,536.9 725.7,540.4 726.3,537.9 726.9,540.7 727.6,540.4 728.2,525.2 728.8,532.7 729.5,541.2 730.1,535.7 730.8,533.9 731.4,529.8 732.0,538.1 732.7,540.6 733.3,536.6 733.9,534.1 734.6,532.4 735.2,540.7 735.8,537.7 736.5,536.8 737.1,539.7 737.7,533.7 738.4,540.0 739.0,533.4 739.6,530.8 740.3,526.7 740.9,517.8 741.6,534.8 742.2,538.8 742.8,526.7 743.5,541.5 744.1,540.4 744.7,541.8 745.4,531.6 746.0,530.8 746.6,538.8 747.3,538.9 747.9,537.4 748.5,533.6 749.2,540.1 749.8,536.6 750.5,536.5 751.1,537.2 751.7,537.9 752.4,538.6 753.0,538.7 753.6,536.1 754.3,538.5 754.9,540.4 755.5,540.5 756.2,542.3 756.8,540.9 757.4,527.5 758.1,536.7 758.7,538.8 759.3,537.2 760.0,538.2 760.6,542.4 761.3,539.5 761.9,540.0 762.5,540.9 763.2,515.6 763.8,539.8 764.4,537.6 765.1,541.2 765.7,541.6 766.3,536.6 767.0,542.7 767.6,535.7 768.2,538.4 768.9,541.2 769.5,534.6 770.1,541.4 770.8,539.9 771.4,538.3 772.1,536.8 772.7,537.8 773.3,534.5 774.0,537.9 774.6,541.0 775.2,538.8 775.9,536.6 776.5,535.4 777.1,531.6 777.8,534.5 778.4,536.4 779.0,541.3 779.7,542.3 780.3,554.7 780.9,538.2 781.6,511.0 782.2,527.2 782.9,525.0 783.5,540.0 784.1,525.6 784.8,541.0 785.4,538.3 786.0,539.8 786.7,537.0 787.3,539.8 787.9,536.4 788.6,536.5 789.2,526.9 789.8,527.9 790.5,536.8 791.1,527.9 791.7,530.8 792.4,534.8 793.0,540.0 793.7,539.3 794.3,540.0 794.9,538.8 795.6,540.6 796.2,538.6 796.8,540.0 797.5,540.6 798.1,534.7 798.7,539.6 799.4,538.9 800.0,541.3 800.6,531.0 801.3,539.9 801.9,537.8 802.5,539.3 803.2,538.2 803.8,534.3 804.5,538.2 805.1,538.7 805.7,537.5 806.4,539.4 807.0,541.4 807.6,541.3 808.3,539.9 808.9,532.8 809.5,541.3 810.2,539.8 810.8,525.1 811.4,534.4 812.1,540.5 812.7,537.8 813.3,539.0 814.0,540.5 814.6,529.4 815.3,540.2 815.9,538.7 816.5,535.8 817.2,536.2 817.8,533.1 818.4,540.9 819.1,530.1 819.7,532.5 820.3,536.9 821.0,539.8 821.6,538.3 822.2,540.0 822.9,534.8 823.5,540.5 824.1,538.1 824.8,538.5 825.4,538.3 826.1,534.8 826.7,535.6 827.3,529.6 828.0,537.0 828.6,540.9 829.2,538.1 829.9,536.1 830.5,540.3 831.1,530.1 831.8,540.0 832.4,541.7 833.0,541.9 833.7,541.5 834.3,538.5 834.9,535.7 835.6,533.9 836.2,532.2 836.9,538.2 837.5,524.0 838.1,540.5 838.8,533.2 839.4,531.7 840.0,538.9 840.7,540.1 841.3,534.1 841.9,540.7 842.6,537.3 843.2,535.5 843.8,529.3 844.5,529.9 845.1,538.6 845.7,534.8 846.4,534.3 847.0,526.6 847.7,540.9 848.3,537.5 848.9,538.9 849.6,539.9 850.2,541.3 850.8,539.6 851.5,540.3 852.1,536.6 852.7,541.2 853.4,534.5 854.0,536.5 854.6,541.8 855.3,533.3 855.9,537.4 856.5,533.3 857.2,540.1 857.8,539.9 858.5,537.9 859.1,532.1 859.7,530.7 860.4,525.6 861.0,538.4 861.6,528.9 862.3,540.0 862.9,524.5 863.5,539.4 864.2,539.6 864.8,539.6 865.4,538.2 866.1,537.1 866.7,538.0 867.3,539.4 868.0,539.3 868.6,539.7 869.3,541.6 869.9,540.3 870.5,538.2 871.2,524.8 871.8,540.0 872.4,538.4 873.1,540.5 873.7,530.5 874.3,535.8 875.0,534.0 875.6,539.5 876.2,537.7 876.9,540.8 877.5,538.8 878.1,539.6 878.8,539.4 879.4,539.1 880.1,539.2 880.7,534.6 881.3,532.9 882.0,536.1 882.6,537.7 883.2,540.5 883.9,540.9 884.5,537.7 885.1,541.1 885.8,544.2 886.4,536.9 887.0,540.1 887.7,529.4 888.3,539.3 888.9,530.3 889.6,538.4 890.2,528.9 890.9,539.5 891.5,540.2 892.1,524.8 892.8,534.6 893.4,536.9 894.0,537.7 894.7,540.5 895.3,539.9 895.9,536.9 896.6,540.0 897.2,535.1 897.8,534.3 898.5,529.9 899.1,532.4 899.7,543.4 900.4,537.2 901.0,537.0 901.7,524.7 902.3,533.0 902.9,539.0 903.6,540.2 904.2,531.4 904.8,537.1 905.5,536.6 906.1,542.2 906.7,540.1 907.4,542.3 908.0,533.4 908.6,541.2 909.3,529.0 909.9,534.7 910.6,540.1 911.2,525.3 911.8,534.9 912.5,532.7 913.1,539.4 913.7,537.7 914.4,535.6 915.0,531.9 915.6,537.1 916.3,536.5 916.9,536.1 917.5,532.1 918.2,535.2 918.8,539.3 919.4,533.7 920.1,540.1 920.7,539.3 921.4,533.4 922.0,538.7 922.6,538.7 923.3,539.1 923.9,535.3 924.5,541.2 925.2,535.6 925.8,538.8 926.4,539.7 927.1,539.6 927.7,540.0 928.3,540.7 929.0,539.6 929.6,529.2 930.2,540.1 930.9,539.3 931.5,535.8 932.2,531.7 932.8,527.9 933.4,540.2 934.1,541.4 934.7,535.3 935.3,538.9 936.0,534.3 936.6,538.9 937.2,531.4 937.9,539.9 938.5,541.1 939.1,535.7 939.8,539.0 940.4,538.0 941.0,540.4 941.7,534.6 942.3,537.5 943.0,535.6 943.6,531.2 944.2,538.7 944.9,534.6 945.5,538.7 946.1,541.4 946.8,537.9 947.4,539.7 948.0,541.0 948.7,542.1 949.3,539.4 949.9,540.0 950.6,533.1 951.2,535.6 951.8,537.5 952.5,539.1 953.1,535.3 953.8,538.5 954.4,538.9 955.0,542.7 955.7,539.3 956.3,539.4 956.9,539.0 957.6,531.7 958.2,540.1 958.8,537.1 959.5,538.0 960.1,538.0 960.7,536.4 961.4,534.2 962.0,539.2 962.6,539.5 963.3,540.1 963.9,540.0 964.6,536.4 965.2,540.3 965.8,536.9 966.5,534.8 967.1,536.1 967.7,537.7 968.4,540.8 969.0,538.3 969.6,522.9 970.3,537.3 970.9,536.3 971.5,533.4 972.2,541.8 972.8,541.7 973.4,538.8 974.1,541.8 974.7,534.3 975.4,541.2 976.0,539.3 976.6,536.7 977.3,536.9 977.9,542.3 978.5,538.4 979.2,532.0 979.8,529.6 980.4,539.7 981.1,538.4 981.7,541.1 982.3,534.7 983.0,540.6 983.6,534.4 984.2,541.7 984.9,539.8 985.5,530.6 986.2,531.4 986.8,539.0 987.4,543.0 988.1,533.4 988.7,535.9 989.3,540.3 990.0,540.7 990.6,537.4 991.2,537.4 991.9,534.7 992.5,530.9 993.1,541.1 993.8,541.3 994.4,535.7 995.0,537.1 995.7,539.9 996.3,537.5 997.0,535.3 997.6,543.0 998.2,536.5 998.9,538.1 999.5,539.2 1000.1,531.2 1000.8,539.0 1001.4,538.7 1002.0,540.1 1002.7,536.9 1003.3,539.4 1003.9,539.7 1004.6,541.1 1005.2,539.9 1005.8,533.1 1006.5,539.5 1007.1,539.9 1007.8,541.4 1008.4,535.3 1009.0,538.3 1009.7,539.7 1010.3,534.8 1010.9,532.9 1011.6,539.1 1012.2,535.6 1012.8,540.0 1013.5,529.9 1014.1,538.7 1014.7,537.2 1015.4,538.3 1016.0,536.3 1016.6,542.1 1017.3,540.8 1017.9,536.5 1018.6,540.1 1019.2,540.8 1019.8,537.7 1020.5,540.6 1021.1,539.5 1021.7,540.6 1022.4,540.9 1023.0,540.6 1023.6,530.5 1024.3,537.7 1024.9,539.9 1025.5,537.3 1026.2,539.2 1026.8,539.8 1027.4,542.3 1028.1,541.5 1028.7,533.9 1029.4,539.6 1030.0,541.4 1030.6,543.1 1031.3,538.7 1031.9,540.1 1032.5,539.7 1033.2,540.6 1033.8,540.5 1034.4,541.1 1035.1,540.1 1035.7,537.9 1036.3,539.1 1037.0,541.1 1037.6,529.7 1038.2,532.4 1038.9,536.3 1039.5,538.6 1040.2,541.3 1040.8,539.5 1041.4,534.2 1042.1,539.0 1042.7,538.9 1043.3,529.9 1044.0,536.7 1044.6,535.4 1045.2,539.8 1045.9,543.5 1046.5,537.4 1047.1,540.3 1047.8,538.2 1048.4,535.3 1049.0,537.5 1049.7,541.1 1050.3,526.7 1051.0,537.7 1051.6,539.7 1052.2,537.4 1052.9,541.4 1053.5,535.8 1054.1,541.0 1054.8,538.3 1055.4,536.9 1056.0,538.2 1056.7,539.2 1057.3,540.5 1057.9,537.8 1058.6,538.1 1059.2,539.1 1059.8,528.4 1060.5,540.1 1061.1,540.0 1061.8,530.5 1062.4,538.8 1063.0,541.1 1063.7,540.8 1064.3,539.6 1064.9,538.1 1065.6,538.3 1066.2,540.2 1066.8,540.3 1067.5,534.6 1068.1,539.9 1068.7,535.2 1069.4,540.1 1070.0,534.0 1070.7,539.9 1071.3,527.0 1071.9,534.8 1072.6,534.0 1073.2,532.3 1073.8,539.0 1074.5,541.3 1075.1,541.3 1075.7,534.6 1076.4,539.6 1077.0,535.5 1077.6,540.9 1078.3,536.1 1078.9,535.8 1079.5,539.2 1080.2,516.4 1080.8,535.3 1081.5,540.8 1082.1,528.7 1082.7,540.6 1083.4,527.7 1084.0,534.3 1084.6,538.7 1085.3,536.1 1085.9,535.4 1086.5,539.9 1087.2,535.8 1087.8,534.2 1088.4,532.8 1089.1,541.0 1089.7,519.0 1090.3,537.8 1091.0,527.5 1091.6,539.2 1092.3,538.5 1092.9,538.8 1093.5,541.0 1094.2,538.6 1094.8,536.9 1095.4,535.2 1096.1,532.2 1096.7,531.2 1097.3,538.0 1098.0,537.0 1098.6,528.4 1099.2,535.1 1099.9,535.7 1100.5,529.4 1101.1,538.8 1101.8,535.3 1102.4,538.6 1103.1,540.0 1103.7,525.9 1104.3,537.4 1105.0,538.8 1105.6,533.0 1106.2,540.6 1106.9,541.4 1107.5,537.4 1108.1,537.3 1108.8,536.9 1109.4,530.1 1110.0,535.0 1110.7,539.2 1111.3,542.1 1111.9,536.0 1112.6,534.1 1113.2,537.8 1113.9,538.5 1114.5,538.9 1115.1,538.8 1115.8,539.6 1116.4,536.4 1117.0,529.0 1117.7,522.6 1118.3,538.6 1118.9,540.8 1119.6,539.1 1120.2,540.2 1120.8,528.4 1121.5,537.2 1122.1,541.5 1122.7,527.9 1123.4,527.1 1124.0,539.6 1124.7,541.2 1125.3,534.2 1125.9,541.3 1126.6,532.3 1127.2,541.6 1127.8,538.2 1128.5,540.3 1129.1,541.6 1129.7,541.6 1130.4,543.3 1131.0,541.1 1131.6,539.8 1132.3,536.5 1132.9,537.9 1133.5,539.4 1134.2,541.5 1134.8,526.2 1135.5,540.2 1136.1,540.9 1136.7,539.4 1137.4,536.4 1138.0,540.4 1138.6,530.7 1139.3,541.3 1139.9,538.7 1140.5,539.7 1141.2,534.8 1141.8,541.9 1142.4,535.6 1143.1,538.2 1143.7,525.7 1144.3,541.1 1145.0,540.0 1145.6,539.0 1146.3,537.1 1146.9,528.9 1147.5,542.4 1148.2,542.7 1148.8,542.4 1149.4,542.4 1150.1,538.1 1150.7,533.0 1151.3,541.5 1152.0,543.4 1152.6,541.2 1153.2,542.1 1153.9,538.7 1154.5,538.4 1155.1,537.1 1155.8,539.1 1156.4,527.0 1157.1,535.1 1157.7,538.3 1158.3,537.6 1159.0,541.0 1159.6,537.9 1160.2,533.8 1160.9,540.0 1161.5,538.1 1162.1,539.3 1162.8,542.2 1163.4,541.4 1164.0,541.8 1164.7,541.1 1165.3,543.4 1165.9,541.8 1166.6,542.4 1167.2,540.7 1167.9,531.4 1168.5,539.0 1169.1,533.2 1169.8,546.2 1170.4,530.9 1171.0,544.7 1171.7,537.7 1172.3,543.3 1172.9,538.7 1173.6,542.0 1174.2,542.8 1174.8,544.6 1175.5,536.1 1176.1,544.2 1176.7,533.9 1177.4,542.7 1178.0,543.0 1178.7,536.4 1179.3,538.4 1179.9,518.2 1180.6,544.1 1181.2,542.0 1181.8,540.1 1182.5,538.2 1183.1,537.7 1183.7,541.2 1184.4,540.9 1185.0,535.9 1185.6,540.1 1186.3,538.4 1186.9,540.6 1187.5,531.5 1188.2,538.7 1188.8,538.7 1189.5,533.5 1190.1,539.4 1190.7,536.8 1191.4,539.8 1192.0,537.1 1192.6,536.4 1193.3,541.7 1193.9,539.8 1194.5,540.5 1195.2,539.7 1195.8,531.1 1196.4,532.4 1197.1,535.2 1197.7,538.6 1198.3,540.6 1199.0,538.6 1199.6,539.7 1200.3,558.7 1200.9,521.5 1201.5,525.8 1202.2,540.8 1202.8,535.4 1203.4,541.6 1204.1,537.0 1204.7,539.6 1205.3,531.4 1206.0,539.3 1206.6,540.9 1207.2,529.9 1207.9,532.6 1208.5,539.4 1209.1,538.0 1209.8,537.1 1210.4,526.7 1211.1,538.7 1211.7,540.4 1212.3,542.1 1213.0,532.6 1213.6,538.3 1214.2,538.9 1214.9,538.2 1215.5,541.2 1216.1,535.7 1216.8,538.8 1217.4,531.4 1218.0,537.9 1218.7,537.4 1219.3,537.6 1219.9,534.2 1220.6,532.0 1221.2,535.1 1221.9,540.3 1222.5,534.8 1223.1,537.6 1223.8,534.6 1224.4,540.2 1225.0,536.7 1225.7,540.0 1226.3,525.5 1226.9,536.7 1227.6,538.6 1228.2,524.6 1228.8,538.5 1229.5,533.6 1230.1,532.6 1230.8,537.9 1231.4,539.4 1232.0,541.3 1232.7,530.2 1233.3,540.0 1233.9,534.2 1234.6,540.5 1235.2,536.3 1235.8,541.2 1236.5,542.4 1237.1,541.5 1237.7,535.0 1238.4,539.6 1239.0,533.9 1239.6,537.0 1240.3,533.1 1240.9,531.6 1241.6,535.1 1242.2,535.3 1242.8,537.7 1243.5,531.9 1244.1,530.2 1244.7,535.5 1245.4,539.4 1246.0,537.1 1246.6,535.2 1247.3,539.3 1247.9,538.8 1248.5,538.5 1249.2,530.1 1249.8,537.6 1250.4,529.8 1251.1,531.8 1251.7,538.4 1252.4,524.1 1253.0,539.0 1253.6,537.9 1254.3,533.0 1254.9,537.5 1255.5,538.9 1256.2,539.0 1256.8,537.5 1257.4,533.4 1258.1,540.8 1258.7,538.9 1259.3,538.9 1260.0,540.1 1260.6,533.0 1261.2,541.5 1261.9,535.2 1262.5,530.8 1263.2,538.7 1263.8,536.3 1264.4,542.8 1265.1,539.5 1265.7,537.2 1266.3,536.9 1267.0,536.9 1267.6,540.8 1268.2,539.0 1268.9,538.8 1269.5,534.1 1270.1,539.4 1270.8,535.6 1271.4,539.4 1272.0,526.9 1272.7,532.3 1273.3,539.6 1274.0,536.2 1274.6,533.4 1275.2,538.8 1275.9,520.4 1276.5,537.3 1277.1,536.8 1277.8,540.5 1278.4,537.5 1279.0,535.9 1279.7,534.3 1280.3,540.5 1280.9,539.9 1281.6,538.2 1282.2,539.0 1282.8,540.4 1283.5,539.4 1284.1,533.3 1284.8,530.7 1285.4,539.4 1286.0,531.6 1286.7,538.0 1287.3,539.3 1287.9,539.4 1288.6,530.2 1289.2,537.4 1289.8,541.3 1290.5,538.4 1291.1,539.6 1291.7,539.4 1292.4,535.1 1293.0,515.6 1293.6,536.8 1294.3,540.1 1294.9,528.5 1295.6,538.1 1296.2,534.9 1296.8,541.9 1297.5,540.7 1298.1,539.6 1298.7,528.9 1299.4,541.5 1300.0,528.6 1300,617.5" />
<polygon fill="#6663a0" points="30,617.5 30.0,535.4 30.6,530.3 31.3,527.8 31.9,536.0 32.5,533.7 33.2,535.9 33.8,535.6 34.4,532.7 35.1,532.8 35.7,536.5 36.4,534.9 37.0,535.4 37.6,534.9 38.3,538.1 38.9,531.7 39.5,535.4 40.2,534.6 40.8,535.3 41.4,536.8 42.1,533.9 42.7,537.1 43.3,534.4 44.0,531.5 44.6,536.8 45.2,535.5 45.9,536.1 46.5,536.1 47.2,535.5 47.8,532.2 48.4,535.2 49.1,537.3 49.7,525.8 50.3,526.9 51.0,529.3 51.6,535.4 52.2,537.8 52.9,530.7 53.5,538.0 54.1,527.0 54.8,534.9 55.4,535.2 56.0,535.8 56.7,530.7 57.3,528.3 58.0,533.5 58.6,525.7 59.2,533.7 59.9,536.6 60.5,526.1 61.1,530.8 61.8,532.7 62.4,528.5 63.0,535.2 63.7,535.0 64.3,535.9 64.9,536.7 65.6,534.6 66.2,536.3 66.8,537.7 67.5,536.5 68.1,535.2 68.8,535.0 69.4,534.5 70.0,526.2 70.7,537.9 71.3,534.3 71.9,526.4 72.6,539.0 73.2,536.4 73.8,534.5 74.5,535.4 75.1,535.7 75.7,530.2 76.4,537.0 77.0,527.0 77.6,535.4 78.3,538.0 78.9,537.5 79.6,534.3 80.2,536.0 80.8,532.6 81.5,536.4 82.1,536.1 82.7,538.0 83.4,531.9 84.0,531.2 84.6,535.9 85.3,533.8 85.9,527.8 86.5,532.6 87.2,537.0 87.8,536.0 88.4,536.6 89.1,535.7 89.7,528.6 90.4,534.4 91.0,528.9 91.6,533.8 92.3,537.4 92.9,534.5 93.5,535.4 94.2,536.5 94.8,531.7 95.4,536.3 96.1,536.1 96.7,536.7 97.3,535.7 98.0,534.4 98.6,534.3 99.2,538.3 99.9,535.6 100.5,535.5 101.2,534.5 101.8,538.8 102.4,537.1 103.1,537.0 103.7,534.5 104.3,535.8 105.0,529.8 105.6,538.8 106.2,539.3 106.9,534.5 107.5,538.3 108.1,538.4 108.8,537.7 109.4,532.1 110.1,536.5 110.7,536.7 111.3,534.7 112.0,536.1 112.6,528.0 113.2,538.7 113.9,539.8 114.5,537.9 115.1,537.4 115.8,533.6 116.4,535.7 117.0,536.7 117.7,536.6 118.3,539.1 118.9,537.5 119.6,526.2 120.2,538.9 120.9,533.8 121.5,539.7 122.1,534.6 122.8,535.7 123.4,547.7 124.0,537.3 124.7,535.2 125.3,538.8 125.9,537.3 126.6,529.9 127.2,531.3 127.8,536.4 128.5,541.2 129.1,540.9 129.7,552.0 130.4,538.2 131.0,532.2 131.7,539.1 132.3,538.7 132.9,537.2 133.6,538.5 134.2,537.4 134.8,527.9 135.5,562.4 136.1,539.0 136.7,540.1 137.4,527.4 138.0,536.2 138.6,535.9 139.3,530.1 139.9,540.1 140.5,555.8 141.2,538.9 141.8,536.9 142.5,537.0 143.1,529.5 143.7,535.0 144.4,540.2 145.0,537.5 145.6,542.6 146.3,540.1 146.9,538.6 147.5,538.7 148.2,542.0 148.8,540.7 149.4,534.6 150.1,541.9 150.7,537.3 151.3,540.0 152.0,536.4 152.6,517.3 153.3,538.9 153.9,542.4 154.5,542.0 155.2,542.0 155.8,543.9 156.4,537.1 157.1,540.9 157.7,540.2 158.3,540.4 159.0,535.7 159.6,534.5 160.2,542.8 160.9,542.0 161.5,542.1 162.1,544.1 162.8,540.5 163.4,544.1 164.1,543.1 164.7,543.8 165.3,543.5 166.0,557.3 166.6,541.6 167.2,540.8 167.9,545.1 168.5,545.8 169.1,540.1 169.8,539.4 170.4,542.9 171.0,543.6 171.7,539.9 172.3,541.9 172.9,543.2 173.6,536.5 174.2,541.3 174.9,543.6 175.5,544.8 176.1,544.7 176.8,546.2 177.4,546.7 178.0,537.1 178.7,540.0 179.3,534.4 179.9,557.6 180.6,545.7 181.2,543.9 181.8,544.4 182.5,542.8 183.1,542.6 183.7,542.2 184.4,532.4 185.0,546.4 185.7,541.9 186.3,540.8 186.9,544.4 187.6,545.3 188.2,540.2 188.8,547.5 189.5,542.7 190.1,541.8 190.7,547.0 191.4,548.4 192.0,546.5 192.6,549.2 193.3,541.8 193.9,547.7 194.5,543.3 195.2,548.9 195.8,546.6 196.5,545.4 197.1,544.8 197.7,549.4 198.4,549.9 199.0,549.5 199.6,573.6 200.3,547.4 200.9,547.0 201.5,538.9 202.2,546.6 202.8,545.9 203.4,548.4 204.1,549.1 204.7,547.2 205.3,547.3 206.0,544.5 206.6,547.7 207.3,549.2 207.9,548.5 208.5,546.4 209.2,547.9 209.8,547.2 210.4,547.7 211.1,567.6 211.7,541.7 212.3,546.5 213.0,546.4 213.6,546.4 214.2,547.7 214.9,558.9 215.5,549.7 216.1,549.2 216.8,550.1 217.4,547.8 218.1,548.6 218.7,548.3 219.3,548.4 220.0,572.4 220.6,543.7 221.2,560.8 221.9,549.1 222.5,548.7 223.1,550.2 223.8,549.6 224.4,548.6 225.0,543.1 225.7,542.5 226.3,543.0 226.9,540.8 227.6,543.0 228.2,543.9 228.9,548.4 229.5,549.5 230.1,548.9 230.8,541.4 231.4,550.6 232.0,550.3 232.7,550.0 233.3,550.2 233.9,547.5 234.6,545.8 235.2,549.7 235.8,549.1 236.5,548.2 237.1,547.2 237.7,547.2 238.4,546.2 239.0,549.5 239.7,548.1 240.3,542.6 240.9,548.8 241.6,541.3 242.2,550.2 242.8,548.8 243.5,550.4 244.1,548.9 244.7,549.0 245.4,550.1 246.0,541.3 246.6,549.5 247.3,565.0 247.9,548.9 248.5,548.1 249.2,545.9 249.8,550.4 250.5,537.3 251.1,543.5 251.7,542.9 252.4,545.1 253.0,549.7 253.6,549.7 254.3,551.1 254.9,549.4 255.5,548.6 256.2,549.9 256.8,549.2 257.4,550.2 258.1,548.6 258.7,549.0 259.3,542.9 260.0,545.7 260.6,576.6 261.3,547.0 261.9,543.5 262.5,548.1 263.2,548.6 263.8,541.2 264.4,549.3 265.1,548.8 265.7,545.5 266.3,548.5 267.0,548.9 267.6,543.0 268.2,548.2 268.9,543.5 269.5,550.1 270.2,548.7 270.8,550.0 271.4,550.3 272.1,547.6 272.7,544.4 273.3,550.1 274.0,545.8 274.6,545.4 275.2,542.4 275.9,551.2 276.5,550.4 277.1,551.3 277.8,552.2 278.4,552.0 279.0,551.3 279.7,545.5 280.3,549.7 281.0,549.4 281.6,548.6 282.2,547.9 282.9,549.0 283.5,546.5 284.1,548.3 284.8,549.5 285.4,548.0 286.0,550.6 286.7,549.6 287.3,548.1 287.9,547.4 288.6,547.1 289.2,549.2 289.8,549.1 290.5,541.8 291.1,550.3 291.8,548.7 292.4,550.1 293.0,550.4 293.7,542.7 294.3,548.6 294.9,548.8 295.6,551.5 296.2,550.1 296.8,551.4 297.5,550.2 298.1,548.9 298.7,543.3 299.4,543.1 300.0,550.5 300.6,545.2 301.3,548.0 301.9,549.8 302.6,551.9 303.2,551.4 303.8,546.5 304.5,546.1 305.1,550.3 305.7,542.1 306.4,549.5 307.0,543.4 307.6,550.1 308.3,550.2 308.9,549.6 309.5,549.7 310.2,551.3 310.8,549.7 311.4,549.2 312.1,550.7 312.7,549.5 313.4,550.6 314.0,549.7 314.6,549.6 315.3,551.5 315.9,546.3 316.5,548.5 317.2,549.9 317.8,552.7 318.4,552.0 319.1,551.4 319.7,543.5 320.3,543.4 321.0,548.9 321.6,551.4 322.2,550.7 322.9,548.9 323.5,551.3 324.2,550.5 324.8,549.1 325.4,548.0 326.1,550.5 326.7,550.0 327.3,548.3 328.0,549.5 328.6,541.8 329.2,550.4 329.9,547.7 330.5,551.9 331.1,551.8 331.8,551.0 332.4,549.0 333.0,549.8 333.7,551.7 334.3,550.8 335.0,546.2 335.6,549.3 336.2,551.0 336.9,547.9 337.5,550.6 338.1,545.6 338.8,549.8 339.4,548.7 340.0,549.6 340.7,541.9 341.3,550.1 341.9,551.7 342.6,549.6 343.2,550.9 343.8,549.2 344.5,548.5 345.1,550.0 345.8,548.1 346.4,550.9 347.0,542.6 347.7,551.1 348.3,550.4 348.9,546.9 349.6,549.6 350.2,549.9 350.8,549.7 351.5,548.6 352.1,546.9 352.7,551.3 353.4,545.6 354.0,548.7 354.6,551.7 355.3,552.2 355.9,551.8 356.6,548.7 357.2,548.7 357.8,551.8 358.5,549.0 359.1,550.7 359.7,547.4 360.4,550.9 361.0,547.7 361.6,551.1 362.3,545.2 362.9,550.5 363.5,548.4 364.2,546.1 364.8,537.3 365.4,549.8 366.1,548.8 366.7,548.9 367.4,551.2 368.0,541.2 368.6,549.6 369.3,550.3 369.9,546.2 370.5,550.9 371.2,549.5 371.8,548.6 372.4,550.4 373.1,550.4 373.7,551.2 374.3,549.0 375.0,551.1 375.6,545.6 376.2,551.1 376.9,549.8 377.5,550.6 378.2,550.8 378.8,548.8 379.4,547.8 380.1,549.2 380.7,549.4 381.3,550.7 382.0,548.1 382.6,543.1 383.2,550.2 383.9,550.9 384.5,548.0 385.1,551.2 385.8,546.8 386.4,547.7 387.0,549.3 387.7,550.4 388.3,550.5 389.0,550.4 389.6,550.2 390.2,550.3 390.9,551.5 391.5,545.1 392.1,544.7 392.8,549.2 393.4,550.4 394.0,550.3 394.7,551.0 395.3,549.9 395.9,550.3 396.6,547.9 397.2,550.9 397.8,545.5 398.5,550.7 399.1,550.6 399.8,551.8 400.4,552.2 401.0,551.2 401.7,552.7 402.3,550.7 402.9,549.8 403.6,548.5 404.2,550.8 404.8,552.5 405.5,546.3 406.1,551.7 406.7,547.8 407.4,549.2 408.0,550.8 408.6,551.6 409.3,549.2 409.9,550.5 410.6,548.9 411.2,549.8 411.8,549.3 412.5,546.7 413.1,551.5 413.7,551.6 414.4,550.3 415.0,550.1 415.6,550.3 416.3,552.7 416.9,547.7 417.5,550.7 418.2,550.6 418.8,551.1 419.4,550.9 420.1,550.4 420.7,548.0 421.4,550.6 422.0,550.8 422.6,545.1 423.3,546.9 423.9,548.6 424.5,549.1 425.2,551.5 425.8,546.0 426.4,551.2 427.1,551.1 427.7,551.9 428.3,534.5 429.0,546.6 429.6,550.5 430.3,552.0 430.9,552.7 431.5,550.8 432.2,549.4 432.8,551.4 433.4,551.8 434.1,550.5 434.7,548.6 435.3,547.3 436.0,548.1 436.6,546.6 437.2,550.4 437.9,550.7 438.5,549.3 439.1,542.3 439.8,543.4 440.4,551.3 441.1,551.5 441.7,547.2 442.3,548.2 443.0,548.4 443.6,551.4 444.2,545.5 444.9,550.0 445.5,551.1 446.1,551.7 446.8,546.1 447.4,551.8 448.0,551.2 448.7,550.9 449.3,552.1 449.9,552.9 450.6,553.1 451.2,544.0 451.9,551.1 452.5,551.8 453.1,548.9 453.8,547.8 454.4,544.2 455.0,544.2 455.7,540.5 456.3,540.7 456.9,539.1 457.6,539.2 458.2,541.0 458.8,534.0 459.5,540.4 460.1,529.7 460.7,537.7 461.4,536.9 462.0,537.2 462.7,541.8 463.3,540.8 463.9,527.1 464.6,525.4 465.2,536.3 465.8,533.8 466.5,528.3 467.1,536.9 467.7,540.3 468.4,539.9 469.0,536.4 469.6,534.0 470.3,539.7 470.9,539.4 471.5,525.6 472.2,531.5 472.8,537.5 473.5,542.3 474.1,540.9 474.7,538.4 475.4,539.4 476.0,540.1 476.6,538.1 477.3,529.3 477.9,541.8 478.5,536.8 479.2,542.2 479.8,535.4 480.4,541.8 481.1,542.0 481.7,540.1 482.3,540.2 483.0,538.0 483.6,539.4 484.3,537.7 484.9,539.9 485.5,541.0 486.2,538.3 486.8,535.3 487.4,537.3 488.1,535.3 488.7,532.6 489.3,542.0 490.0,542.1 490.6,541.9 491.2,540.2 491.9,532.6 492.5,529.1 493.1,540.1 493.8,538.5 494.4,527.7 495.1,540.5 495.7,538.9 496.3,529.0 497.0,534.2 497.6,539.9 498.2,538.7 498.9,541.4 499.5,539.1 500.1,538.9 500.8,537.5 501.4,534.0 502.0,533.4 502.7,541.6 503.3,539.3 503.9,540.1 504.6,539.6 505.2,540.3 505.9,537.6 506.5,541.8 507.1,542.9 507.8,541.2 508.4,540.2 509.0,539.8 509.7,539.2 510.3,542.2 510.9,536.1 511.6,542.1 512.2,527.5 512.8,539.8 513.5,541.7 514.1,537.3 514.7,535.5 515.4,542.3 516.0,563.3 516.7,533.3 517.3,536.7 517.9,529.6 518.6,541.7 519.2,541.3 519.8,541.9 520.5,540.3 521.1,540.8 521.7,540.3 522.4,541.4 523.0,542.4 523.6,542.5 524.3,539.6 524.9,536.9 525.5,540.8 526.2,537.6 526.8,535.8 527.5,532.5 528.1,542.3 528.7,542.7 529.4,541.0 530.0,541.4 530.6,541.9 531.3,543.2 531.9,544.0 532.5,543.1 533.2,541.5 533.8,543.4 534.4,542.1 535.1,540.3 535.7,527.1 536.3,537.2 537.0,537.5 537.6,541.1 538.3,525.3 538.9,536.0 539.5,542.9 540.2,543.1 540.8,542.3 541.4,538.3 542.1,540.9 542.7,537.3 543.3,540.5 544.0,541.3 544.6,536.6 545.2,537.0 545.9,541.3 546.5,535.7 547.1,541.6 547.8,542.1 548.4,541.2 549.1,539.5 549.7,536.6 550.3,528.7 551.0,539.4 551.6,539.1 552.2,533.9 552.9,540.0 553.5,542.3 554.1,541.4 554.8,533.3 555.4,536.0 556.0,537.9 556.7,538.8 557.3,540.4 557.9,542.9 558.6,540.7 559.2,541.9 559.9,536.2 560.5,541.7 561.1,539.9 561.8,538.0 562.4,542.1 563.0,541.8 563.7,541.6 564.3,527.8 564.9,540.2 565.6,542.3 566.2,538.1 566.8,540.7 567.5,540.0 568.1,539.8 568.7,539.9 569.4,540.3 570.0,540.4 570.7,541.1 571.3,541.1 571.9,533.4 572.6,532.9 573.2,542.3 573.8,531.2 574.5,529.8 575.1,541.8 575.7,539.5 576.4,540.5 577.0,538.5 577.6,540.1 578.3,533.3 578.9,532.8 579.5,542.0 580.2,540.7 580.8,537.2 581.5,540.7 582.1,539.9 582.7,539.1 583.4,540.1 584.0,536.4 584.6,541.1 585.3,539.4 585.9,541.4 586.5,541.7 587.2,540.5 587.8,536.5 588.4,534.1 589.1,541.2 589.7,541.6 590.4,533.3 591.0,535.1 591.6,537.6 592.3,534.4 592.9,537.8 593.5,528.5 594.2,540.8 594.8,541.1 595.4,539.4 596.1,542.2 596.7,539.9 597.3,540.3 598.0,538.7 598.6,539.3 599.2,539.7 599.9,533.7 600.5,540.2 601.2,535.4 601.8,540.2 602.4,540.4 603.1,541.6 603.7,532.7 604.3,540.9 605.0,528.2 605.6,540.6 606.2,540.7 606.9,530.5 607.5,530.4 608.1,540.9 608.8,541.3 609.4,542.0 610.0,540.2 610.7,540.8 611.3,535.9 612.0,536.7 612.6,539.6 613.2,534.8 613.9,541.0 614.5,540.2 615.1,534.3 615.8,542.3 616.4,541.0 617.0,536.8 617.7,542.9 618.3,541.5 618.9,539.4 619.6,541.6 620.2,540.3 620.8,541.9 621.5,541.1 622.1,541.8 622.8,540.0 623.4,539.7 624.0,537.2 624.7,541.7 625.3,540.4 625.9,534.8 626.6,538.2 627.2,538.9 627.8,541.0 628.5,541.7 629.1,535.0 629.7,541.4 630.4,540.7 631.0,542.3 631.6,529.9 632.3,541.5 632.9,541.3 633.6,534.7 634.2,541.6 634.8,544.0 635.5,562.3 636.1,533.2 636.7,538.9 637.4,559.2 638.0,541.4 638.6,535.2 639.3,526.8 639.9,542.6 640.5,535.0 641.2,539.7 641.8,543.8 642.4,541.6 643.1,537.5 643.7,534.3 644.4,540.5 645.0,539.2 645.6,535.0 646.3,541.3 646.9,542.3 647.5,527.2 648.2,541.0 648.8,542.6 649.4,542.0 650.1,542.6 650.7,539.8 651.3,527.6 652.0,531.6 652.6,538.8 653.2,532.2 653.9,537.6 654.5,539.5 655.2,541.1 655.8,541.3 656.4,539.1 657.1,540.3 657.7,531.7 658.3,540.4 659.0,529.1 659.6,538.5 660.2,540.8 660.9,531.6 661.5,540.3 662.1,538.6 662.8,539.0 663.4,538.6 664.0,518.3 664.7,540.4 665.3,541.1 666.0,539.1 666.6,540.4 667.2,535.3 667.9,543.3 668.5,539.0 669.1,540.7 669.8,539.1 670.4,543.2 671.0,542.2 671.7,537.2 672.3,537.3 672.9,538.5 673.6,541.2 674.2,538.1 674.8,535.6 675.5,541.5 676.1,541.9 676.8,540.8 677.4,538.7 678.0,541.6 678.7,534.8 679.3,541.8 679.9,529.7 680.6,541.7 681.2,535.6 681.8,540.2 682.5,537.2 683.1,537.3 683.7,538.8 684.4,540.1 685.0,541.4 685.6,540.7 686.3,539.4 686.9,543.4 687.6,523.1 688.2,537.3 688.8,537.0 689.5,542.3 690.1,542.6 690.7,539.8 691.4,529.0 692.0,539.1 692.6,537.6 693.3,540.2 693.9,536.7 694.5,537.0 695.2,534.1 695.8,538.6 696.4,536.9 697.1,541.7 697.7,540.0 698.4,541.5 699.0,541.8 699.6,536.7 700.3,539.1 700.9,535.4 701.5,534.7 702.2,531.6 702.8,532.2 703.4,538.3 704.1,541.2 704.7,526.9 705.3,539.5 706.0,542.8 706.6,534.9 707.2,541.2 707.9,543.9 708.5,541.2 709.2,544.2 709.8,540.6 710.4,530.4 711.1,541.5 711.7,540.9 712.3,529.3 713.0,539.2 713.6,542.5 714.2,539.1 714.9,541.1 715.5,540.6 716.1,521.9 716.8,536.5 717.4,538.7 718.0,541.6 718.7,542.0 719.3,531.5 720.0,538.3 720.6,541.9 721.2,530.1 721.9,534.4 722.5,541.2 723.1,536.5 723.8,535.6 724.4,539.8 725.0,538.4 725.7,541.8 726.3,538.8 726.9,542.2 727.6,542.0 728.2,526.2 728.8,534.0 729.5,542.3 730.1,536.9 730.8,535.0 731.4,530.6 732.0,539.2 732.7,542.1 733.3,537.7 733.9,535.8 734.6,533.4 735.2,541.7 735.8,538.9 736.5,537.9 737.1,541.0 737.7,534.7 738.4,541.0 739.0,534.9 739.6,532.0 740.3,527.4 740.9,518.7 741.6,535.5 742.2,539.9 742.8,527.6 743.5,542.6 744.1,542.0 744.7,543.0 745.4,532.6 746.0,531.6 746.6,539.8 747.3,539.9 747.9,538.4 748.5,534.4 749.2,542.0 749.8,538.2 750.5,537.6 751.1,537.9 751.7,539.3 752.4,539.4 753.0,539.9 753.6,537.0 754.3,539.5 754.9,542.0 755.5,541.6 756.2,543.2 756.8,541.9 757.4,528.3 758.1,537.5 758.7,539.7 759.3,539.0 760.0,539.2 760.6,543.6 761.3,540.7 761.9,541.1 762.5,541.9 763.2,516.5 763.8,540.9 764.4,539.2 765.1,542.5 765.7,543.0 766.3,537.6 767.0,543.9 767.6,537.1 768.2,539.6 768.9,542.2 769.5,536.0 770.1,542.4 770.8,540.8 771.4,539.1 772.1,538.3 772.7,539.3 773.3,535.4 774.0,538.8 774.6,541.8 775.2,540.8 775.9,537.7 776.5,536.5 777.1,533.0 777.8,535.5 778.4,537.9 779.0,542.3 779.7,543.1 780.3,555.7 780.9,539.4 781.6,511.8 782.2,528.9 782.9,526.0 783.5,541.6 784.1,526.7 784.8,541.9 785.4,539.6 786.0,540.8 786.7,538.6 787.3,540.8 787.9,538.2 788.6,537.9 789.2,527.7 789.8,529.8 790.5,538.1 791.1,529.5 791.7,531.9 792.4,536.0 793.0,541.2 793.7,540.2 794.3,541.3 794.9,539.7 795.6,541.5 796.2,539.7 796.8,541.3 797.5,541.4 798.1,535.9 798.7,540.5 799.4,540.0 800.0,542.3 800.6,532.7 801.3,541.3 801.9,538.8 802.5,540.2 803.2,539.0 803.8,535.6 804.5,539.2 805.1,539.7 805.7,538.7 806.4,540.4 807.0,542.4 807.6,542.6 808.3,541.2 808.9,533.6 809.5,542.2 810.2,540.7 810.8,526.4 811.4,535.6 812.1,542.0 812.7,539.2 813.3,540.0 814.0,541.8 814.6,530.2 815.3,541.5 815.9,539.8 816.5,536.8 817.2,537.5 817.8,535.1 818.4,541.9 819.1,531.2 819.7,533.9 820.3,537.9 821.0,540.5 821.6,539.4 822.2,540.9 822.9,536.5 823.5,541.6 824.1,539.7 824.8,540.4 825.4,539.0 826.1,536.1 826.7,536.9 827.3,530.8 828.0,538.0 828.6,542.0 829.2,539.3 829.9,537.5 830.5,541.4 831.1,531.7 831.8,540.9 832.4,542.7 833.0,543.4 833.7,543.2 834.3,540.3 834.9,537.7 835.6,535.1 836.2,533.6 836.9,539.1 837.5,524.9 838.1,541.8 838.8,534.5 839.4,532.7 840.0,540.8 840.7,541.1 841.3,535.0 841.9,541.6 842.6,538.1 843.2,537.0 843.8,530.2 844.5,531.2 845.1,539.4 845.7,535.7 846.4,535.3 847.0,528.2 847.7,542.0 848.3,538.6 848.9,539.6 849.6,540.8 850.2,542.3 850.8,540.6 851.5,541.0 852.1,537.7 852.7,542.0 853.4,536.0 854.0,537.8 854.6,542.8 855.3,534.3 855.9,538.7 856.5,534.1 857.2,541.1 857.8,541.3 858.5,538.9 859.1,532.9 859.7,531.7 860.4,526.5 861.0,539.4 861.6,530.8 862.3,540.9 862.9,525.5 863.5,540.8 864.2,540.6 864.8,540.7 865.4,539.4 866.1,538.4 866.7,539.2 867.3,540.4 868.0,540.3 868.6,540.6 869.3,542.5 869.9,541.1 870.5,539.8 871.2,525.8 871.8,541.3 872.4,540.2 873.1,541.6 873.7,531.3 874.3,537.7 875.0,534.8 875.6,540.6 876.2,538.9 876.9,542.2 877.5,539.6 878.1,541.1 878.8,540.9 879.4,540.0 880.1,540.2 880.7,536.0 881.3,533.6 882.0,536.9 882.6,538.6 883.2,541.6 883.9,542.2 884.5,538.7 885.1,542.1 885.8,545.4 886.4,538.3 887.0,541.1 887.7,530.2 888.3,540.2 888.9,531.4 889.6,539.3 890.2,530.2 890.9,540.6 891.5,541.1 892.1,525.6 892.8,535.4 893.4,538.0 894.0,538.8 894.7,542.2 895.3,540.8 895.9,537.9 896.6,541.4 897.2,536.2 897.8,535.5 898.5,530.7 899.1,533.4 899.7,544.4 900.4,539.1 901.0,538.5 901.7,526.2 902.3,534.7 902.9,540.0 903.6,541.9 904.2,533.0 904.8,538.3 905.5,538.3 906.1,543.7 906.7,541.3 907.4,543.6 908.0,534.4 908.6,542.3 909.3,530.1 909.9,536.0 910.6,541.2 911.2,526.3 911.8,537.8 912.5,533.9 913.1,540.6 913.7,539.1 914.4,537.0 915.0,532.8 915.6,538.1 916.3,537.4 916.9,537.5 917.5,533.6 918.2,536.0 918.8,540.1 919.4,534.8 920.1,541.2 920.7,540.5 921.4,534.3 922.0,540.6 922.6,540.5 923.3,540.1 923.9,536.6 924.5,542.0 925.2,536.7 925.8,539.7 926.4,541.2 927.1,540.7 927.7,541.6 928.3,542.0 929.0,540.6 929.6,530.5 930.2,541.3 930.9,540.5 931.5,537.0 932.2,532.7 932.8,528.7 933.4,541.1 934.1,542.4 934.7,536.7 935.3,539.7 936.0,536.2 936.6,540.0 937.2,532.9 937.9,541.1 938.5,542.2 939.1,536.8 939.8,540.4 940.4,539.0 941.0,541.2 941.7,535.6 942.3,538.8 943.0,537.5 943.6,532.3 944.2,539.5 944.9,535.5 945.5,540.0 946.1,542.2 946.8,539.6 947.4,540.6 948.0,541.7 948.7,542.9 949.3,540.6 949.9,540.9 950.6,534.4 951.2,536.6 951.8,538.4 952.5,541.1 953.1,536.2 953.8,539.7 954.4,540.5 955.0,543.7 955.7,540.9 956.3,540.3 956.9,539.9 957.6,532.9 958.2,540.8 958.8,538.2 959.5,540.1 960.1,538.8 960.7,537.7 961.4,535.1 962.0,540.9 962.6,540.4 963.3,541.3 963.9,541.1 964.6,537.7 965.2,541.7 965.8,538.6 966.5,536.4 967.1,537.2 967.7,539.1 968.4,541.8 969.0,539.3 969.6,523.9 970.3,538.5 970.9,537.1 971.5,534.8 972.2,542.7 972.8,542.5 973.4,539.9 974.1,542.8 974.7,535.4 975.4,542.1 976.0,540.6 976.6,537.4 977.3,538.8 977.9,543.2 978.5,539.6 979.2,533.2 979.8,530.7 980.4,541.6 981.1,539.2 981.7,541.9 982.3,535.6 983.0,541.5 983.6,536.3 984.2,542.5 984.9,540.8 985.5,531.7 986.2,532.5 986.8,539.8 987.4,543.8 988.1,534.3 988.7,537.4 989.3,541.3 990.0,541.5 990.6,538.4 991.2,538.8 991.9,536.3 992.5,531.8 993.1,542.4 993.8,542.2 994.4,537.4 995.0,538.7 995.7,540.8 996.3,539.0 997.0,536.2 997.6,544.2 998.2,538.0 998.9,539.4 999.5,540.6 1000.1,532.8 1000.8,540.1 1001.4,539.9 1002.0,541.0 1002.7,537.7 1003.3,541.5 1003.9,540.9 1004.6,542.0 1005.2,541.2 1005.8,534.2 1006.5,540.3 1007.1,542.0 1007.8,543.0 1008.4,536.4 1009.0,540.0 1009.7,541.0 1010.3,535.9 1010.9,533.9 1011.6,539.9 1012.2,536.6 1012.8,540.9 1013.5,530.9 1014.1,540.8 1014.7,538.3 1015.4,539.3 1016.0,537.5 1016.6,544.0 1017.3,542.6 1017.9,537.6 1018.6,541.5 1019.2,542.4 1019.8,538.6 1020.5,541.4 1021.1,540.4 1021.7,541.7 1022.4,541.7 1023.0,541.8 1023.6,531.5 1024.3,539.2 1024.9,541.4 1025.5,538.2 1026.2,540.4 1026.8,540.9 1027.4,543.1 1028.1,542.5 1028.7,535.0 1029.4,540.4 1030.0,542.4 1030.6,544.0 1031.3,539.7 1031.9,541.4 1032.5,540.5 1033.2,541.6 1033.8,542.1 1034.4,542.1 1035.1,541.4 1035.7,539.2 1036.3,540.2 1037.0,542.3 1037.6,530.7 1038.2,534.5 1038.9,537.4 1039.5,539.7 1040.2,542.3 1040.8,540.3 1041.4,535.2 1042.1,539.8 1042.7,539.9 1043.3,531.7 1044.0,537.6 1044.6,536.5 1045.2,541.0 1045.9,544.6 1046.5,538.5 1047.1,541.1 1047.8,539.9 1048.4,536.7 1049.0,538.8 1049.7,541.9 1050.3,527.9 1051.0,539.0 1051.6,540.7 1052.2,538.3 1052.9,542.4 1053.5,536.9 1054.1,542.0 1054.8,539.2 1055.4,538.4 1056.0,539.2 1056.7,540.3 1057.3,541.4 1057.9,539.2 1058.6,540.0 1059.2,540.5 1059.8,529.7 1060.5,541.0 1061.1,541.1 1061.8,531.3 1062.4,540.5 1063.0,542.3 1063.7,542.1 1064.3,541.2 1064.9,539.0 1065.6,539.2 1066.2,541.4 1066.8,541.2 1067.5,535.5 1068.1,541.6 1068.7,536.2 1069.4,540.9 1070.0,535.2 1070.7,541.3 1071.3,528.4 1071.9,535.7 1072.6,535.5 1073.2,533.3 1073.8,540.8 1074.5,542.3 1075.1,542.4 1075.7,536.2 1076.4,540.7 1077.0,536.9 1077.6,542.1 1078.3,537.1 1078.9,536.7 1079.5,540.1 1080.2,517.6 1080.8,536.8 1081.5,542.4 1082.1,529.5 1082.7,541.6 1083.4,528.6 1084.0,535.4 1084.6,539.7 1085.3,537.6 1085.9,536.5 1086.5,541.0 1087.2,536.7 1087.8,535.5 1088.4,533.8 1089.1,542.3 1089.7,520.2 1090.3,539.1 1091.0,528.5 1091.6,540.9 1092.3,539.5 1092.9,539.8 1093.5,541.7 1094.2,539.9 1094.8,538.2 1095.4,536.7 1096.1,533.4 1096.7,532.4 1097.3,539.2 1098.0,538.2 1098.6,530.1 1099.2,536.1 1099.9,536.6 1100.5,530.2 1101.1,541.2 1101.8,536.4 1102.4,539.4 1103.1,541.1 1103.7,527.0 1104.3,538.2 1105.0,540.4 1105.6,534.5 1106.2,541.6 1106.9,542.6 1107.5,538.3 1108.1,538.6 1108.8,537.9 1109.4,531.0 1110.0,536.8 1110.7,540.6 1111.3,543.5 1111.9,536.8 1112.6,535.1 1113.2,539.2 1113.9,539.8 1114.5,539.9 1115.1,539.7 1115.8,540.6 1116.4,537.5 1117.0,530.0 1117.7,523.4 1118.3,539.4 1118.9,541.6 1119.6,540.5 1120.2,541.4 1120.8,529.9 1121.5,538.4 1122.1,542.3 1122.7,529.0 1123.4,528.6 1124.0,540.6 1124.7,542.5 1125.3,535.0 1125.9,542.3 1126.6,533.0 1127.2,542.6 1127.8,540.0 1128.5,541.4 1129.1,542.8 1129.7,543.1 1130.4,544.7 1131.0,542.6 1131.6,541.3 1132.3,537.4 1132.9,539.7 1133.5,540.4 1134.2,542.2 1134.8,528.2 1135.5,541.4 1136.1,542.2 1136.7,541.2 1137.4,537.7 1138.0,541.6 1138.6,531.6 1139.3,542.1 1139.9,540.1 1140.5,541.8 1141.2,536.3 1141.8,543.0 1142.4,536.8 1143.1,539.3 1143.7,526.9 1144.3,542.2 1145.0,541.4 1145.6,540.4 1146.3,537.9 1146.9,530.1 1147.5,543.7 1148.2,543.5 1148.8,543.3 1149.4,543.1 1150.1,539.4 1150.7,534.9 1151.3,542.8 1152.0,544.3 1152.6,542.5 1153.2,542.8 1153.9,539.8 1154.5,539.4 1155.1,538.3 1155.8,540.5 1156.4,529.0 1157.1,535.8 1157.7,539.4 1158.3,539.0 1159.0,542.1 1159.6,538.7 1160.2,535.0 1160.9,541.7 1161.5,540.0 1162.1,540.9 1162.8,543.4 1163.4,542.5 1164.0,542.8 1164.7,542.0 1165.3,544.5 1165.9,543.1 1166.6,543.7 1167.2,541.9 1167.9,532.3 1168.5,540.1 1169.1,534.3 1169.8,546.9 1170.4,532.0 1171.0,545.8 1171.7,538.6 1172.3,544.3 1172.9,539.8 1173.6,544.1 1174.2,543.6 1174.8,546.0 1175.5,537.1 1176.1,545.0 1176.7,534.9 1177.4,544.3 1178.0,544.3 1178.7,537.6 1179.3,539.5 1179.9,519.1 1180.6,544.9 1181.2,543.2 1181.8,541.1 1182.5,539.2 1183.1,538.8 1183.7,542.5 1184.4,542.2 1185.0,536.8 1185.6,541.9 1186.3,539.9 1186.9,541.5 1187.5,532.7 1188.2,539.8 1188.8,539.6 1189.5,535.1 1190.1,540.3 1190.7,537.7 1191.4,540.8 1192.0,538.4 1192.6,537.5 1193.3,542.6 1193.9,540.6 1194.5,541.6 1195.2,541.1 1195.8,532.6 1196.4,533.4 1197.1,536.5 1197.7,540.0 1198.3,542.2 1199.0,539.8 1199.6,540.5 1200.3,560.0 1200.9,522.4 1201.5,527.0 1202.2,542.0 1202.8,536.9 1203.4,542.6 1204.1,538.5 1204.7,540.5 1205.3,532.8 1206.0,541.2 1206.6,542.1 1207.2,531.1 1207.9,533.6 1208.5,540.2 1209.1,539.2 1209.8,538.5 1210.4,527.5 1211.1,539.6 1211.7,541.3 1212.3,543.4 1213.0,533.9 1213.6,540.2 1214.2,540.3 1214.9,539.6 1215.5,542.0 1216.1,536.5 1216.8,540.2 1217.4,532.4 1218.0,539.3 1218.7,538.7 1219.3,538.4 1219.9,535.2 1220.6,533.1 1221.2,535.9 1221.9,541.1 1222.5,536.0 1223.1,538.5 1223.8,535.9 1224.4,541.5 1225.0,537.5 1225.7,540.8 1226.3,526.8 1226.9,537.5 1227.6,539.6 1228.2,526.4 1228.8,539.6 1229.5,534.6 1230.1,533.6 1230.8,539.6 1231.4,540.9 1232.0,542.2 1232.7,531.2 1233.3,541.3 1233.9,535.6 1234.6,541.6 1235.2,537.1 1235.8,542.1 1236.5,543.7 1237.1,542.7 1237.7,535.7 1238.4,540.5 1239.0,535.0 1239.6,537.7 1240.3,534.1 1240.9,533.0 1241.6,536.8 1242.2,536.1 1242.8,538.5 1243.5,532.8 1244.1,531.1 1244.7,537.0 1245.4,540.2 1246.0,538.4 1246.6,536.6 1247.3,540.6 1247.9,539.7 1248.5,539.9 1249.2,531.3 1249.8,539.1 1250.4,531.6 1251.1,532.8 1251.7,539.4 1252.4,525.5 1253.0,539.9 1253.6,539.0 1254.3,534.1 1254.9,538.9 1255.5,540.4 1256.2,540.0 1256.8,538.2 1257.4,534.2 1258.1,542.0 1258.7,539.8 1259.3,539.9 1260.0,541.4 1260.6,534.2 1261.2,542.8 1261.9,536.6 1262.5,532.6 1263.2,539.5 1263.8,537.4 1264.4,543.6 1265.1,540.3 1265.7,538.4 1266.3,538.9 1267.0,538.2 1267.6,541.9 1268.2,539.8 1268.9,539.6 1269.5,535.1 1270.1,541.0 1270.8,536.4 1271.4,540.2 1272.0,528.0 1272.7,533.2 1273.3,540.7 1274.0,537.2 1274.6,534.4 1275.2,539.8 1275.9,521.7 1276.5,538.1 1277.1,537.6 1277.8,541.9 1278.4,538.4 1279.0,536.8 1279.7,535.3 1280.3,541.5 1280.9,541.0 1281.6,539.1 1282.2,539.9 1282.8,541.4 1283.5,540.2 1284.1,534.6 1284.8,531.5 1285.4,540.9 1286.0,533.2 1286.7,539.3 1287.3,540.7 1287.9,541.1 1288.6,531.4 1289.2,538.3 1289.8,542.2 1290.5,539.8 1291.1,541.3 1291.7,540.2 1292.4,535.9 1293.0,516.4 1293.6,537.6 1294.3,540.9 1294.9,529.4 1295.6,539.6 1296.2,536.9 1296.8,542.9 1297.5,541.5 1298.1,540.7 1298.7,529.8 1299.4,542.3 1300.0,529.5 1300,617.5" />
<g stroke="#fff" stroke-width="1" shape-rendering="crispEdges"><line x1="29.5" x2="29.5" y1="341.0" y2="618.0"/><line x1="1300.5" x2="1300.5" y1="341.0" y2="618.0"/><line x1="23" x2="1307" y1="617.5" y2="617.5"/><line x1="23" x2="36" y1="604.5" y2="604.5"/><line x1="1294" x2="1307" y1="604.5" y2="604.5"/><line x1="23" x2="36" y1="592.5" y2="592.5"/><line x1="1294" x2="1307" y1="592.5" y2="592.5"/><line x1="23" x2="36" y1="579.5" y2="579.5"/><line x1="1294" x2="1307" y1="579.5" y2="579.5"/><line x1="23" x2="36" y1="567.5" y2="567.5"/><line x1="1294" x2="1307" y1="567.5" y2="567.5"/><line x1="23" x2="36" y1="554.5" y2="554.5"/><line x1="1294" x2="1307" y1="554.5" y2="554.5"/><line x1="23" x2="36" y1="542.5" y2="542.5"/><line x1="1294" x2="1307" y1="542.5" y2="542.5"/><line x1="23" x2="36" y1="529.5" y2="529.5"/><line x1="1294" x2="1307" y1="529.5" y2="529.5"/><line x1="23" x2="36" y1="517.5" y2="517.5"/><line x1="1294" x2="1307" y1="517.5" y2="517.5"/><line x1="23" x2="36" y1="504.5" y2="504.5"/><line x1="1294" x2="1307" y1="504.5" y2="504.5"/><line x1="23" x2="36" y1="492.5" y2="492.5"/><line x1="1294" x2="1307" y1="492.5" y2="492.5"/><line x1="23" x2="36" y1="479.5" y2="479.5"/><line x1="1294" x2="1307" y1="479.5" y2="479.5"/><line x1="23" x2="36" y1="466.5" y2="466.5"/><line x1="1294" x2="1307" y1="466.5" y2="466.5"/><line x1="23" x2="36" y1="454.5" y2="454.5"/><line x1="1294" x2="1307" y1="454.5" y2="454.5"/><line x1="23" x2="36" y1="441.5" y2="441.5"/><line x1="1294" x2="1307" y1="441.5" y2="441.5"/><line x1="23" x2="36" y1="429.5" y2="429.5"/><line x1="1294" x2="1307" y1="429.5" y2="429.5"/><line x1="23" x2="36" y1="416.5" y2="416.5"/><line x1="1294" x2="1307" y1="416.5" y2="416.5"/><line x1="23" x2="36" y1="404.5" y2="404.5"/><line x1="1294" x2="1307" y1="404.5" y2="404.5"/><line x1="23" x2="36" y1="391.5" y2="391.5"/><line x1="1294" x2="1307" y1="391.5" y2="391.5"/><line x1="23" x2="36" y1="379.5" y2="379.5"/><line x1="1294" x2="1307" y1="379.5" y2="379.5"/><line x1="23" x2="36" y1="366.5" y2="366.5"/><line x1="1294" x2="1307" y1="366.5" y2="366.5"/><line x1="23" x2="36" y1="354.5" y2="354.5"/><line x1="1294" x2="1307" y1="354.5" y2="354.5"/><line x1="23" x2="36" y1="341.5" y2="341.5"/><line x1="1294" x2="1307" y1="341.5" y2="341.5"/><line x1="32.5" x2="32.5" y1="615.0" y2="617.0"/><line x1="95.5" x2="95.5" y1="615.0" y2="617.0"/><line x1="159.5" x2="159.5" y1="612.0" y2="617.0"/><line x1="222.5" x2="222.5" y1="615.0" y2="617.0"/><line x1="286.5" x2="286.5" y1="615.0" y2="617.0"/><line x1="349.5" x2="349.5" y1="612.0" y2="617.0"/><line x1="413.5" x2="413.5" y1="615.0" y2="617.0"/><line x1="476.5" x2="476.5" y1="615.0" y2="617.0"/><line x1="540.5" x2="540.5" y1="612.0" y2="617.0"/><line x1="603.5" x2="603.5" y1="615.0" y2="617.0"/><line x1="667.5" x2="667.5" y1="615.0" y2="617.0"/><line x1="730.5" x2="730.5" y1="612.0" y2="617.0"/><line x1="794.5" x2="794.5" y1="615.0" y2="617.0"/><line x1="857.5" x2="857.5" y1="615.0" y2="617.0"/><line x1="921.5" x2="921.5" y1="612.0" y2="617.0"/><line x1="985.5" x2="985.5" y1="615.0" y2="617.0"/><line x1="1048.5" x2="1048.5" y1="615.0" y2="617.0"/><line x1="1112.5" x2="1112.5" y1="612.0" y2="617.0"/><line x1="1175.5" x2="1175.5" y1="615.0" y2="617.0"/><line x1="1239.5" x2="1239.5" y1="615.0" y2="617.0"/></g>
<filter id="gf327" x="0" y="0" width="1" height="1"><feOffset dx="0" dy="0"/></filter><g filter="url(#gf327)"><text x="17.6" y="621.0" font-size="12.5" font-family='"Liberation Sans",sans-serif' fill="#fff" text-anchor="end" textLength="4.6" lengthAdjust="spacingAndGlyphs" >0</text><text x="1313" y="621.0" font-size="12.5" font-family='"Liberation Sans",sans-serif' fill="#fff" textLength="4.6" lengthAdjust="spacingAndGlyphs" >0</text><text x="17.6" y="608.0" font-size="12.5" font-family='"Liberation Sans",sans-serif' fill="#fff" text-anchor="end" textLength="4.6" lengthAdjust="spacingAndGlyphs" >1</text><text x="1313" y="608.0" font-size="12.5" font-family='"Liberation Sans",sans-serif' fill="#fff" textLength="4.6" lengthAdjust="spacingAndGlyphs" >1</text><text x="17.6" y="596.0" font-size="12.5" font-family='"Liberation Sans",sans-serif' fill="#fff" text-anchor="end" textLength="4.6" lengthAdjust="spacingAndGlyphs" >2</text><text x="1313" y="596.0" font-size="12.5" font-family='"Liberation Sans",sans-serif' fill="#fff" textLength="4.6" lengthAdjust="spacingAndGlyphs" >2</text><text x="17.6" y="583.0" font-size="12.5" font-family='"Liberation Sans",sans-serif' fill="#fff" text-anchor="end" textLength="4.6" lengthAdjust="spacingAndGlyphs" >3</text><text x="1313" y="583.0" font-size="12.5" font-family='"Liberation Sans",sans-serif' fill="#fff" textLength="4.6" lengthAdjust="spacingAndGlyphs" >3</text><text x="17.6" y="571.0" font-size="12.5" font-family='"Liberation Sans",sans-serif' fill="#fff" text-anchor="end" textLength="4.6" lengthAdjust="spacingAndGlyphs" >4</text><text x="1313" y="571.0" font-size="12.5" font-family='"Liberation Sans",sans-serif' fill="#fff" textLength="4.6" lengthAdjust="spacingAndGlyphs" >4</text><text x="17.6" y="558.0" font-size="12.5" font-family='"Liberation Sans",sans-serif' fill="#fff" text-anchor="end" textLength="4.6" lengthAdjust="spacingAndGlyphs" >5</text><text x="1313" y="558.0" font-size="12.5" font-family='"Liberation Sans",sans-serif' fill="#fff" textLength="4.6" lengthAdjust="spacingAndGlyphs" >5</text><text x="17.6" y="546.0" font-size="12.5" font-family='"Liberation Sans",sans-serif' fill="#fff" text-anchor="end" textLength="4.6" lengthAdjust="spacingAndGlyphs" >6</text><text x="1313" y="546.0" font-size="12.5" font-family='"Liberation Sans",sans-serif' fill="#fff" textLength="4.6" lengthAdjust="spacingAndGlyphs" >6</text><text x="17.6" y="533.0" font-size="12.5" font-family='"Liberation Sans",sans-serif' fill="#fff" text-anchor="end" textLength="4.6" lengthAdjust="spacingAndGlyphs" >7</text><text x="1313" y="533.0" font-size="12.5" font-family='"Liberation Sans",sans-serif' fill="#fff" textLength="4.6" lengthAdjust="spacingAndGlyphs" >7</text><text x="17.6" y="521.0" font-size="12.5" font-family='"Liberation Sans",sans-serif' fill="#fff" text-anchor="end" textLength="4.6" lengthAdjust="spacingAndGlyphs" >8</text><text x="1313" y="521.0" font-size="12.5" font-family='"Liberation Sans",sans-serif' fill="#fff" textLength="4.6" lengthAdjust="spacingAndGlyphs" >8</text><text x="17.6" y="508.0" font-size="12.5" font-family='"Liberation Sans",sans-serif' fill="#fff" text-anchor="end" textLength="4.6" lengthAdjust="spacingAndGlyphs" >9</text><text x="1313" y="508.0" font-size="12.5" font-family='"Liberation Sans",sans-serif' fill="#fff" textLength="4.6" lengthAdjust="spacingAndGlyphs" >9</text><text x="17.6" y="496.0" font-size="12.5" font-family='"Liberation Sans",sans-serif' fill="#fff" text-anchor="end" textLength="10.6" lengthAdjust="spacingAndGlyphs" >10</text><text x="1313" y="496.0" font-size="12.5" font-family='"Liberation Sans",sans-serif' fill="#fff" textLength="10.6" lengthAdjust="spacingAndGlyphs" >10</text><text x="17.6" y="483.0" font-size="12.5" font-family='"Liberation Sans",sans-serif' fill="#fff" text-anchor="end" textLength="10.6" lengthAdjust="spacingAndGlyphs" >11</text><text x="1313" y="483.0" font-size="12.5" font-family='"Liberation Sans",sans-serif' fill="#fff" textLength="10.6" lengthAdjust="spacingAndGlyphs" >11</text><text x="17.6" y="470.0" font-size="12.5" font-family='"Liberation Sans",sans-serif' fill="#fff" text-anchor="end" textLength="10.6" lengthAdjust="spacingAndGlyphs" >12</text><text x="1313" y="470.0" font-size="12.5" font-family='"Liberation Sans",sans-serif' fill="#fff" textLength="10.6" lengthAdjust="spacingAndGlyphs" >12</text><text x="17.6" y="458.0" font-size="12.5" font-family='"Liberation Sans",sans-serif' fill="#fff" text-anchor="end" textLength="10.6" lengthAdjust="spacingAndGlyphs" >13</text><text x="1313" y="458.0" font-size="12.5" font-family='"Liberation Sans",sans-serif' fill="#fff" textLength="10.6" lengthAdjust="spacingAndGlyphs" >13</text><text x="17.6" y="445.0" font-size="12.5" font-family='"Liberation Sans",sans-serif' fill="#fff" text-anchor="end" textLength="10.6" lengthAdjust="spacingAndGlyphs" >14</text><text x="1313" y="445.0" font-size="12.5" font-family='"Liberation Sans",sans-serif' fill="#fff" textLength="10.6" lengthAdjust="spacingAndGlyphs" >14</text><text x="17.6" y="433.0" font-size="12.5" font-family='"Liberation Sans",sans-serif' fill="#fff" text-anchor="end" textLength="10.6" lengthAdjust="spacingAndGlyphs" >15</text><text x="1313" y="433.0" font-size="12.5" font-family='"Liberation Sans",sans-serif' fill="#fff" textLength="10.6" lengthAdjust="spacingAndGlyphs" >15</text><text x="17.6" y="420.0" font-size="12.5" font-family='"Liberation Sans",sans-serif' fill="#fff" text-anchor="end" textLength="10.6" lengthAdjust="spacingAndGlyphs" >16</text><text x="1313" y="420.0" font-size="12.5" font-family='"Liberation Sans",sans-serif' fill="#fff" textLength="10.6" lengthAdjust="spacingAndGlyphs" >16</text><text x="17.6" y="408.0" font-size="12.5" font-family='"Liberation Sans",sans-serif' fill="#fff" text-anchor="end" textLength="10.6" lengthAdjust="spacingAndGlyphs" >17</text><text x="1313" y="408.0" font-size="12.5" font-family='"Liberation Sans",sans-serif' fill="#fff" textLength="10.6" lengthAdjust="spacingAndGlyphs" >17</text><text x="17.6" y="395.0" font-size="12.5" font-family='"Liberation Sans",sans-serif' fill="#fff" text-anchor="end" textLength="10.6" lengthAdjust="spacingAndGlyphs" >18</text><text x="1313" y="395.0" font-size="12.5" font-family='"Liberation Sans",sans-serif' fill="#fff" textLength="10.6" lengthAdjust="spacingAndGlyphs" >18</text><text x="17.6" y="383.0" font-size="12.5" font-family='"Liberation Sans",sans-serif' fill="#fff" text-anchor="end" textLength="10.6" lengthAdjust="spacingAndGlyphs" >19</text><text x="1313" y="383.0" font-size="12.5" font-family='"Liberation Sans",sans-serif' fill="#fff" textLength="10.6" lengthAdjust="spacingAndGlyphs" >19</text><text x="17.6" y="370.0" font-size="12.5" font-family='"Liberation Sans",sans-serif' fill="#fff" text-anchor="end" textLength="10.6" lengthAdjust="spacingAndGlyphs" >20</text><text x="1313" y="370.0" font-size="12.5" font-family='"Liberation Sans",sans-serif' fill="#fff" textLength="10.6" lengthAdjust="spacingAndGlyphs" >20</text><text x="17.6" y="358.0" font-size="12.5" font-family='"Liberation Sans",sans-serif' fill="#fff" text-anchor="end" textLength="10.6" lengthAdjust="spacingAndGlyphs" >21</text><text x="1313" y="358.0" font-size="12.5" font-family='"Liberation Sans",sans-serif' fill="#fff" textLength="10.6" lengthAdjust="spacingAndGlyphs" >21</text><text x="17.6" y="345.0" font-size="12.5" font-family='"Liberation Sans",sans-serif' fill="#fff" text-anchor="end" textLength="10.6" lengthAdjust="spacingAndGlyphs" >22</text><text x="1313" y="345.0" font-size="12.5" font-family='"Liberation Sans",sans-serif' fill="#fff" textLength="10.6" lengthAdjust="spacingAndGlyphs" >22</text><text x="159.0" y="630.0" font-size="12.5" font-family='"Liberation Sans",sans-serif' fill="#fff" text-anchor="middle" textLength="34.6" lengthAdjust="spacingAndGlyphs" >273000</text><text x="349.0" y="630.0" font-size="12.5" font-family='"Liberation Sans",sans-serif' fill="#fff" text-anchor="middle" textLength="34.6" lengthAdjust="spacingAndGlyphs" >273300</text><text x="540.0" y="630.0" font-size="12.5" font-family='"Liberation Sans",sans-serif' fill="#fff" text-anchor="middle" textLength="34.6" lengthAdjust="spacingAndGlyphs" >273600</text><text x="730.0" y="630.0" font-size="12.5" font-family='"Liberation Sans",sans-serif' fill="#fff" text-anchor="middle" textLength="34.6" lengthAdjust="spacingAndGlyphs" >273900</text><text x="921.0" y="630.0" font-size="12.5" font-family='"Liberation Sans",sans-serif' fill="#fff" text-anchor="middle" textLength="34.6" lengthAdjust="spacingAndGlyphs" >274200</text><text x="1112.0" y="630.0" font-size="12.5" font-family='"Liberation Sans",sans-serif' fill="#fff" text-anchor="middle" textLength="34.6" lengthAdjust="spacingAndGlyphs" >274500</text></g>
</svg>
<div class="big" style="top:324.2px">GPU</div>
<div class="li" style="top:86px;height:21px;background:#dce8bc"><svg width="120" height="21" viewBox="1339 0 120 21"><text x="1339" y="18.5" font-size="21" font-family='"Liberation Sans","IPAPGothic","IPAGothic","Noto Sans CJK JP",sans-serif' fill="#000" stroke="#dce8bc" stroke-width="0.22" paint-order="fill stroke" textLength="54" lengthAdjust="spacingAndGlyphs">アイドル</text></svg></div><div class="li" style="top:116px;height:21px;background:#64a064"><svg width="120" height="21" viewBox="1339 0 120 21"><text x="1339" y="18.5" font-size="21" font-family='"Liberation Sans","IPAPGothic","IPAGothic","Noto Sans CJK JP",sans-serif' fill="#000" stroke="#64a064" stroke-width="0.22" paint-order="fill stroke" textLength="81" lengthAdjust="spacingAndGlyphs">コンポジター</text></svg></div><div class="li" style="top:146px;height:21px;background:#7b7bc3"><svg width="120" height="21" viewBox="1339 0 120 21"><text x="1339" y="18.5" font-size="21" font-family='"Liberation Sans","IPAPGothic","IPAGothic","Noto Sans CJK JP",sans-serif' fill="#000" stroke="#7b7bc3" stroke-width="0.22" paint-order="fill stroke" textLength="105.5" lengthAdjust="spacingAndGlyphs">アプリケーション</text><text x="1444.3" y="17.5" font-size="20" font-family='"Liberation Sans","IPAPGothic","IPAGothic","Noto Sans CJK JP",sans-serif' fill="#000" stroke="#7b7bc3" stroke-width="0.32" paint-order="fill stroke" >(</text><text x="1453" y="18.5" font-size="21" font-family='"Liberation Sans","IPAPGothic","IPAGothic","Noto Sans CJK JP",sans-serif' fill="#000" stroke="#7b7bc3" stroke-width="0.22" paint-order="fill stroke" textLength="28" lengthAdjust="spacingAndGlyphs">その</text><text x="1481" y="18.5" font-size="19.5" font-family='"Liberation Sans","IPAPGothic","IPAGothic","Noto Sans CJK JP",sans-serif' fill="#000" stroke="#7b7bc3" stroke-width="0.32" paint-order="fill stroke" textLength="19.5" lengthAdjust="spacing">他</text><text x="1499" y="17.5" font-size="20" font-family='"Liberation Sans","IPAPGothic","IPAGothic","Noto Sans CJK JP",sans-serif' fill="#000" stroke="#7b7bc3" stroke-width="0.32" paint-order="fill stroke" >)</text></svg></div><div class="li" style="top:176px;height:21px;background:#6868a4"><svg width="120" height="21" viewBox="1339 0 120 21"><text x="1339" y="18.5" font-size="21" font-family='"Liberation Sans","IPAPGothic","IPAGothic","Noto Sans CJK JP",sans-serif' fill="#000" stroke="#6868a4" stroke-width="0.22" paint-order="fill stroke" textLength="105.5" lengthAdjust="spacingAndGlyphs">アプリケーション</text><text x="1444.3" y="17.5" font-size="20" font-family='"Liberation Sans","IPAPGothic","IPAGothic","Noto Sans CJK JP",sans-serif' fill="#000" stroke="#6868a4" stroke-width="0.32" paint-order="fill stroke" >(</text><text x="1452" y="18.5" font-size="19.5" font-family='"Liberation Sans","IPAPGothic","IPAGothic","Noto Sans CJK JP",sans-serif' fill="#000" stroke="#6868a4" stroke-width="0.32" paint-order="fill stroke" textLength="37.5" lengthAdjust="spacing">背景</text><text x="1488" y="17.5" font-size="20" font-family='"Liberation Sans","IPAPGothic","IPAGothic","Noto Sans CJK JP",sans-serif' fill="#000" stroke="#6868a4" stroke-width="0.32" paint-order="fill stroke" >)</text></svg></div><div class="li" style="top:206px;height:21px;background:#ffff00"><svg width="120" height="21" viewBox="1339 0 120 21"><text x="1344" y="18.0" font-size="18" font-weight="bold" font-family='"Liberation Sans","IPAPGothic","IPAGothic","Noto Sans CJK JP",sans-serif' fill="#000" textLength="18" lengthAdjust="spacing">---</text><text x="1365.7" y="18.5" font-size="19.5" font-family='"Liberation Sans","IPAPGothic","IPAGothic","Noto Sans CJK JP",sans-serif' fill="#000" stroke="#ffff00" stroke-width="0.32" paint-order="fill stroke" textLength="37.5" lengthAdjust="spacing">予測</text><text x="1408.5" y="17.5" font-size="18" font-family='"Liberation Sans","IPAPGothic","IPAGothic","Noto Sans CJK JP",sans-serif' fill="#000" stroke="#ffff00" stroke-width="0.32" paint-order="fill stroke" >(</text><text x="1414" y="18.5" font-size="19.5" font-family='"Liberation Sans","IPAPGothic","IPAGothic","Noto Sans CJK JP",sans-serif' fill="#000" stroke="#ffff00" stroke-width="0.32" paint-order="fill stroke" textLength="37.5" lengthAdjust="spacing">追加</text><text x="1450.5" y="17.5" font-size="18" font-family='"Liberation Sans","IPAPGothic","IPAGothic","Noto Sans CJK JP",sans-serif' fill="#000" stroke="#ffff00" stroke-width="0.32" paint-order="fill stroke" >)</text></svg></div><div class="li" style="top:236px;height:21px;background:#00ffff"><svg width="120" height="21" viewBox="1339 0 120 21"><text x="1344" y="18.0" font-size="18" font-weight="bold" font-family='"Liberation Sans","IPAPGothic","IPAGothic","Noto Sans CJK JP",sans-serif' fill="#000" textLength="18" lengthAdjust="spacing">---</text><text x="1366" y="18.5" font-size="21" font-family='"Liberation Sans","IPAPGothic","IPAGothic","Noto Sans CJK JP",sans-serif' fill="#000" stroke="#00ffff" stroke-width="0.22" paint-order="fill stroke" textLength="64" lengthAdjust="spacingAndGlyphs">スロットル</text><text x="1436.8" y="17.5" font-size="18" font-family='"Liberation Sans","IPAPGothic","IPAGothic","Noto Sans CJK JP",sans-serif' fill="#000" stroke="#00ffff" stroke-width="0.32" paint-order="fill stroke" >(</text><text x="1441.5" y="18.5" font-size="21" font-family='"Liberation Sans","IPAPGothic","IPAGothic","Noto Sans CJK JP",sans-serif' fill="#000" stroke="#00ffff" stroke-width="0.22" paint-order="fill stroke" textLength="50" lengthAdjust="spacingAndGlyphs">フレーム</text><text x="1492" y="17.5" font-size="18" font-family='"Liberation Sans","IPAPGothic","IPAGothic","Noto Sans CJK JP",sans-serif' fill="#000" stroke="#00ffff" stroke-width="0.32" paint-order="fill stroke" >)</text></svg></div><div class="li" style="top:266px;height:21px;background:#c01c1c"><svg width="120" height="21" viewBox="1339 0 120 21"><text x="1338.2" y="18.5" font-size="19.5" font-family='"Liberation Sans","IPAPGothic","IPAGothic","Noto Sans CJK JP",sans-serif' fill="#000" stroke="#c01c1c" stroke-width="0.32" paint-order="fill stroke" textLength="19.5" lengthAdjust="spacing">遅</text><text x="1356" y="18.5" font-size="21" font-family='"Liberation Sans","IPAPGothic","IPAGothic","Noto Sans CJK JP",sans-serif' fill="#000" stroke="#c01c1c" stroke-width="0.22" paint-order="fill stroke" textLength="30" lengthAdjust="spacingAndGlyphs">れて</text><text x="1385.4" y="18.5" font-size="19.5" font-family='"Liberation Sans","IPAPGothic","IPAGothic","Noto Sans CJK JP",sans-serif' fill="#000" stroke="#c01c1c" stroke-width="0.32" paint-order="fill stroke" textLength="37.5" lengthAdjust="spacing">開始</text></svg></div><div class="li" style="top:357px;height:20px;background:#dce8bc"><svg width="120" height="20" viewBox="1339 0 120 20"><text x="1339" y="17.5" font-size="21" font-family='"Liberation Sans","IPAPGothic","IPAGothic","Noto Sans CJK JP",sans-serif' fill="#000" stroke="#dce8bc" stroke-width="0.22" paint-order="fill stroke" textLength="54" lengthAdjust="spacingAndGlyphs">アイドル</text></svg></div><div class="li" style="top:386px;height:20px;background:#808468"><svg width="120" height="20" viewBox="1339 0 120 20"><text x="1339" y="17.5" font-size="21" font-family='"Liberation Sans","IPAPGothic","IPAGothic","Noto Sans CJK JP",sans-serif' fill="#000" stroke="#808468" stroke-width="0.22" paint-order="fill stroke" textLength="28" lengthAdjust="spacingAndGlyphs">その</text><text x="1365.7" y="17.5" font-size="19.5" font-family='"Liberation Sans","IPAPGothic","IPAGothic","Noto Sans CJK JP",sans-serif' fill="#000" stroke="#808468" stroke-width="0.32" paint-order="fill stroke" textLength="19.5" lengthAdjust="spacing">他</text></svg></div><div class="li" style="top:415px;height:20px;background:#64a064"><svg width="120" height="20" viewBox="1339 0 120 20"><text x="1339" y="17.5" font-size="21" font-family='"Liberation Sans","IPAPGothic","IPAGothic","Noto Sans CJK JP",sans-serif' fill="#000" stroke="#64a064" stroke-width="0.22" paint-order="fill stroke" textLength="81" lengthAdjust="spacingAndGlyphs">コンポジター</text></svg></div><div class="li" style="top:444px;height:20px;background:#7b7bc3"><svg width="120" height="20" viewBox="1339 0 120 20"><text x="1339" y="17.5" font-size="21" font-family='"Liberation Sans","IPAPGothic","IPAGothic","Noto Sans CJK JP",sans-serif' fill="#000" stroke="#7b7bc3" stroke-width="0.22" paint-order="fill stroke" textLength="105.5" lengthAdjust="spacingAndGlyphs">アプリケーション</text><text x="1444.3" y="16.5" font-size="20" font-family='"Liberation Sans","IPAPGothic","IPAGothic","Noto Sans CJK JP",sans-serif' fill="#000" stroke="#7b7bc3" stroke-width="0.32" paint-order="fill stroke" >(</text><text x="1453" y="17.5" font-size="21" font-family='"Liberation Sans","IPAPGothic","IPAGothic","Noto Sans CJK JP",sans-serif' fill="#000" stroke="#7b7bc3" stroke-width="0.22" paint-order="fill stroke" textLength="28" lengthAdjust="spacingAndGlyphs">その</text><text x="1481" y="17.5" font-size="19.5" font-family='"Liberation Sans","IPAPGothic","IPAGothic","Noto Sans CJK JP",sans-serif' fill="#000" stroke="#7b7bc3" stroke-width="0.32" paint-order="fill stroke" textLength="19.5" lengthAdjust="spacing">他</text><text x="1499" y="16.5" font-size="20" font-family='"Liberation Sans","IPAPGothic","IPAGothic","Noto Sans CJK JP",sans-serif' fill="#000" stroke="#7b7bc3" stroke-width="0.32" paint-order="fill stroke" >)</text></svg></div><div class="li" style="top:473px;height:20px;background:#6868a4"><svg width="120" height="20" viewBox="1339 0 120 20"><text x="1339" y="17.5" font-size="21" font-family='"Liberation Sans","IPAPGothic","IPAGothic","Noto Sans CJK JP",sans-serif' fill="#000" stroke="#6868a4" stroke-width="0.22" paint-order="fill stroke" textLength="105.5" lengthAdjust="spacingAndGlyphs">アプリケーション</text><text x="1444.3" y="16.5" font-size="20" font-family='"Liberation Sans","IPAPGothic","IPAGothic","Noto Sans CJK JP",sans-serif' fill="#000" stroke="#6868a4" stroke-width="0.32" paint-order="fill stroke" >(</text><text x="1452" y="17.5" font-size="19.5" font-family='"Liberation Sans","IPAPGothic","IPAGothic","Noto Sans CJK JP",sans-serif' fill="#000" stroke="#6868a4" stroke-width="0.32" paint-order="fill stroke" textLength="37.5" lengthAdjust="spacing">背景</text><text x="1488" y="16.5" font-size="20" font-family='"Liberation Sans","IPAPGothic","IPAGothic","Noto Sans CJK JP",sans-serif' fill="#000" stroke="#6868a4" stroke-width="0.32" paint-order="fill stroke" >)</text></svg></div><div class="li" style="top:502px;height:20px;background:#00ffff"><svg width="120" height="20" viewBox="1339 0 120 20"><text x="1344" y="17.0" font-size="18" font-weight="bold" font-family='"Liberation Sans","IPAPGothic","IPAGothic","Noto Sans CJK JP",sans-serif' fill="#000" textLength="18" lengthAdjust="spacing">---</text><text x="1365.7" y="17.5" font-size="19.5" font-family='"Liberation Sans","IPAPGothic","IPAGothic","Noto Sans CJK JP",sans-serif' fill="#000" stroke="#00ffff" stroke-width="0.32" paint-order="fill stroke" textLength="73.5" lengthAdjust="spacing">利用可能</text></svg></div><div class="li" style="top:531px;height:20px;background:#327832"><svg width="120" height="20" viewBox="1339 0 120 20"><text x="1344" y="17.0" font-size="18" font-weight="bold" font-family='"Liberation Sans","IPAPGothic","IPAGothic","Noto Sans CJK JP",sans-serif' fill="#000" textLength="18" lengthAdjust="spacing">---</text><text x="1365.7" y="17.5" font-size="19.5" font-family='"Liberation Sans","IPAPGothic","IPAGothic","Noto Sans CJK JP",sans-serif' fill="#000" stroke="#327832" stroke-width="0.32" paint-order="fill stroke" textLength="73.5" lengthAdjust="spacing">初回表示</text></svg></div><div class="li" style="top:560px;height:20px;background:#ffffff"><svg width="120" height="20" viewBox="1339 0 120 20"><text x="1344" y="17.0" font-size="18" font-weight="bold" font-family='"Liberation Sans","IPAPGothic","IPAGothic","Noto Sans CJK JP",sans-serif' fill="#000" textLength="18" lengthAdjust="spacing">---</text><text x="1365.7" y="17.5" font-size="19.5" font-family='"Liberation Sans","IPAPGothic","IPAGothic","Noto Sans CJK JP",sans-serif' fill="#000" stroke="#ffffff" stroke-width="0.32" paint-order="fill stroke" textLength="37.5" lengthAdjust="spacing">現在</text><text x="1407.7" y="16.5" font-size="18" font-family='"Liberation Sans","IPAPGothic","IPAGothic","Noto Sans CJK JP",sans-serif' fill="#000" stroke="#ffffff" stroke-width="0.32" paint-order="fill stroke" >(</text><text x="1413.2" y="17.5" font-size="19.5" font-family='"Liberation Sans","IPAPGothic","IPAGothic","Noto Sans CJK JP",sans-serif' fill="#000" stroke="#ffffff" stroke-width="0.32" paint-order="fill stroke" textLength="19.5" lengthAdjust="spacing">数</text><text x="1431.7" y="16.5" font-size="18" font-family='"Liberation Sans","IPAPGothic","IPAGothic","Noto Sans CJK JP",sans-serif' fill="#000" stroke="#ffffff" stroke-width="0.32" paint-order="fill stroke" >)</text></svg></div><div class="li" style="top:589px;height:20px;background:#c01c1c"><svg width="120" height="20" viewBox="1339 0 120 20"><text x="1344" y="17.0" font-size="18" font-weight="bold" font-family='"Liberation Sans","IPAPGothic","IPAGothic","Noto Sans CJK JP",sans-serif' fill="#000" textLength="18" lengthAdjust="spacing">---</text><text x="1365.7" y="17.5" font-size="19.5" font-family='"Liberation Sans","IPAPGothic","IPAGothic","Noto Sans CJK JP",sans-serif' fill="#000" stroke="#c01c1c" stroke-width="0.32" paint-order="fill stroke" textLength="55.5" lengthAdjust="spacing">再投影</text></svg></div>
<div class="div" style="top:638px"></div>
<div id="bottom" class="abs"></div>
<div class="cb" style="left:14px"></div>
<div class="cb" style="left:128px"></div>
<div class="cb" style="left:206px"></div>
<svg class="abs gs" style="left:0;top:647px" width="700" height="51" viewBox="0 647 700 51">
<text x="40.5" y="680.5" font-size="19.5" font-family='"Liberation Sans","IPAPGothic","IPAGothic","Noto Sans CJK JP",sans-serif' fill="#000" stroke="#c8c8c8" stroke-width="0.32" paint-order="fill stroke" textLength="73.5" lengthAdjust="spacing">一時停止</text>
<text x="154.5" y="680.5" font-size="19.5" font-family='"Liberation Sans","IPAPGothic","IPAGothic","Noto Sans CJK JP",sans-serif' fill="#000" stroke="#c8c8c8" stroke-width="0.32" paint-order="fill stroke" textLength="37.5" lengthAdjust="spacing">詳細</text>
<text x="233" y="680.5" font-size="21" font-family='"Liberation Sans","IPAPGothic","IPAGothic","Noto Sans CJK JP",sans-serif' fill="#000" stroke="#c8c8c8" stroke-width="0.22" paint-order="fill stroke" textLength="90" lengthAdjust="spacingAndGlyphs">ヘッドセットに</text>
<text x="323" y="680.5" font-size="19.5" font-family='"Liberation Sans","IPAPGothic","IPAGothic","Noto Sans CJK JP",sans-serif' fill="#000" stroke="#c8c8c8" stroke-width="0.32" paint-order="fill stroke" textLength="37.5" lengthAdjust="spacing">表示</text>
<rect x="374" y="669.6" width="84" height="3" rx="1.5" fill="#e7e7e7"/>
<path d="M445.5 662.5 h10 v12.5 l-5 5.5 l-5 -5.5 z" fill="#cfcfcf" stroke="#1e1e1e" stroke-width="1"/>
<text x="467" y="679" font-size="17.85" font-family='"Liberation Sans",sans-serif' fill="#000" >Show 2,000 frames</text>
</svg>
</body></html>
